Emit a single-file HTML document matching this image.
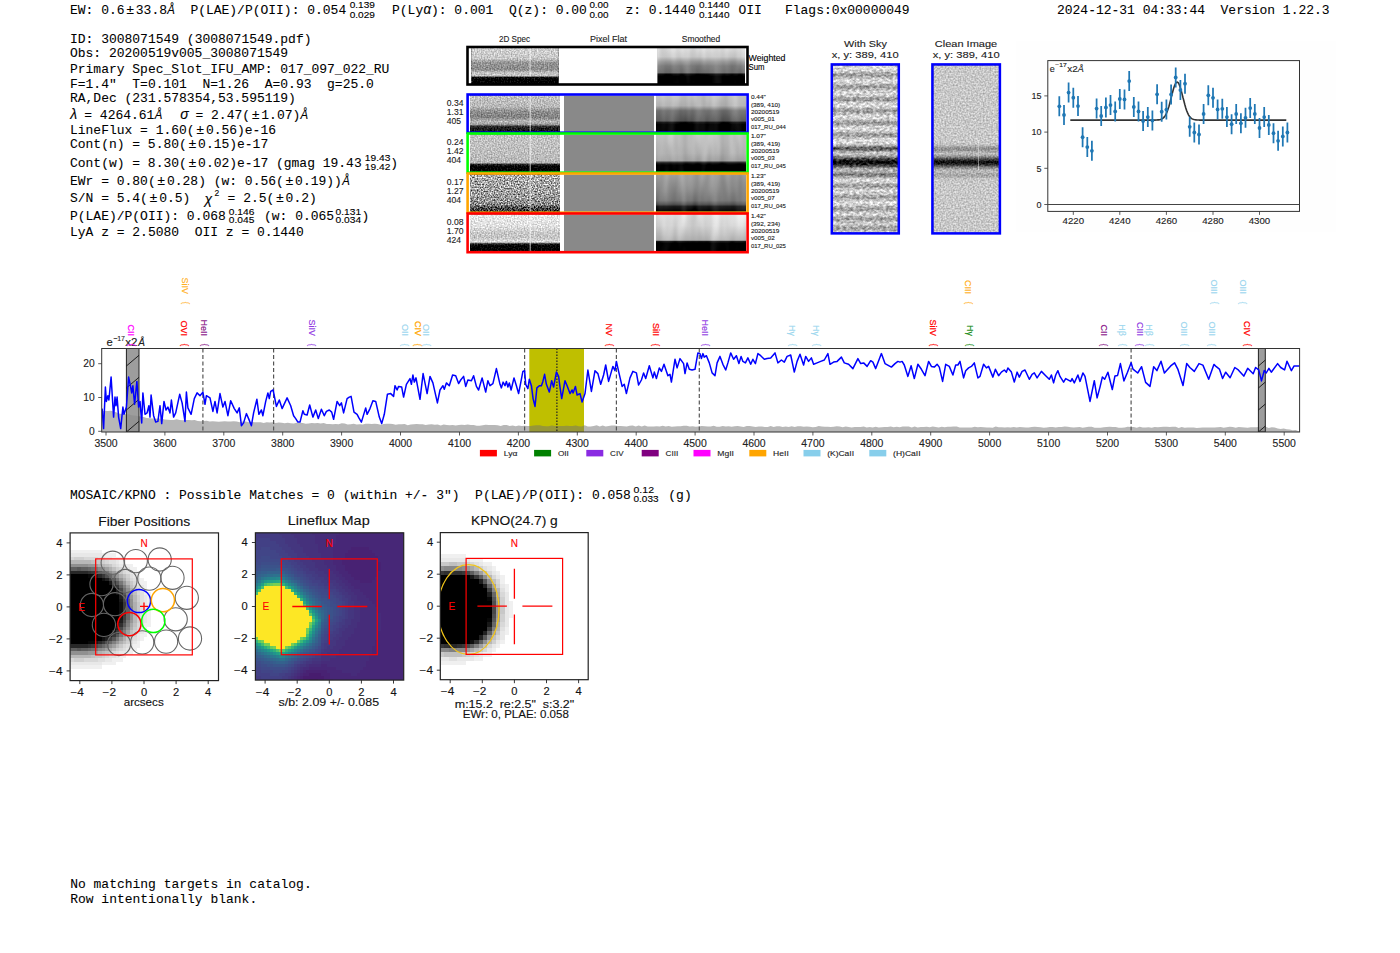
<!DOCTYPE html>
<html><head><meta charset="utf-8"><title>report</title>
<style>
html,body{margin:0;padding:0;background:#fff;width:1400px;height:953px;overflow:hidden}
svg{display:block}
.m{font-family:"Liberation Mono",monospace;white-space:pre}
.r{font-family:"Liberation Serif",serif;white-space:pre}
.s{font-family:"Liberation Sans",sans-serif;white-space:pre}
</style></head><body>
<svg xml:space="preserve" width="1400" height="953" viewBox="0 0 1400 953">
<defs><filter id="nzA" x="0" y="0" width="1" height="1" color-interpolation-filters="sRGB"><feTurbulence type="fractalNoise" baseFrequency="0.7" numOctaves="1" seed="3" result="t"/><feColorMatrix in="t" type="matrix" values="1 0 0 0 0 1 0 0 0 0 1 0 0 0 0 0 0 0 0 1" result="g"/><feComposite in="SourceGraphic" in2="g" operator="arithmetic" k1="0" k2="1" k3="0.600" k4="-0.300"/></filter>
<filter id="nzB" x="0" y="0" width="1" height="1" color-interpolation-filters="sRGB"><feTurbulence type="fractalNoise" baseFrequency="0.7" numOctaves="1" seed="7" result="t"/><feColorMatrix in="t" type="matrix" values="1 0 0 0 0 1 0 0 0 0 1 0 0 0 0 0 0 0 0 1" result="g"/><feComposite in="SourceGraphic" in2="g" operator="arithmetic" k1="0" k2="1" k3="1.700" k4="-0.850"/></filter>
<filter id="nzS" x="0" y="0" width="1" height="1" color-interpolation-filters="sRGB"><feTurbulence type="fractalNoise" baseFrequency="0.1 0.02" numOctaves="2" seed="11" result="t"/><feColorMatrix in="t" type="matrix" values="1 0 0 0 0 1 0 0 0 0 1 0 0 0 0 0 0 0 0 1" result="g"/><feComposite in="SourceGraphic" in2="g" operator="arithmetic" k1="0" k2="1" k3="0.220" k4="-0.110"/></filter>
<filter id="nzC" x="0" y="0" width="1" height="1" color-interpolation-filters="sRGB"><feTurbulence type="fractalNoise" baseFrequency="0.6" numOctaves="1" seed="5" result="t"/><feColorMatrix in="t" type="matrix" values="1 0 0 0 0 1 0 0 0 0 1 0 0 0 0 0 0 0 0 1" result="g"/><feComposite in="SourceGraphic" in2="g" operator="arithmetic" k1="0" k2="1" k3="0.500" k4="-0.250"/></filter>
<filter id="nzK" x="0" y="0" width="1" height="1" color-interpolation-filters="sRGB"><feTurbulence type="fractalNoise" baseFrequency="0.3 0.5" numOctaves="2" seed="9" result="t"/><feColorMatrix in="t" type="matrix" values="1 0 0 0 0 1 0 0 0 0 1 0 0 0 0 0 0 0 0 1" result="g"/><feComposite in="SourceGraphic" in2="g" operator="arithmetic" k1="0" k2="1" k3="0.700" k4="-0.350"/></filter>
<linearGradient id="g1" x1="0" y1="0" x2="0" y2="1"><stop offset="0.000" stop-color="#d2d2d2"/><stop offset="0.300" stop-color="#c8c8c8"/><stop offset="0.400" stop-color="#969696"/><stop offset="0.600" stop-color="#8c8c8c"/><stop offset="0.680" stop-color="#c3c3c3"/><stop offset="0.770" stop-color="#c8c8c8"/><stop offset="0.800" stop-color="#141414"/><stop offset="0.860" stop-color="#000000"/><stop offset="1.000" stop-color="#000000"/></linearGradient>
<linearGradient id="g2" x1="0" y1="0" x2="0" y2="1"><stop offset="0.000" stop-color="#dcdcdc"/><stop offset="0.250" stop-color="#cdcdcd"/><stop offset="0.380" stop-color="#a0a0a0"/><stop offset="0.500" stop-color="#828282"/><stop offset="0.680" stop-color="#737373"/><stop offset="0.720" stop-color="#141414"/><stop offset="0.780" stop-color="#000000"/><stop offset="1.000" stop-color="#000000"/></linearGradient>
<linearGradient id="g3" x1="0" y1="0" x2="0" y2="1"><stop offset="0.000" stop-color="#c3c3c3"/><stop offset="0.300" stop-color="#b9b9b9"/><stop offset="0.450" stop-color="#8c8c8c"/><stop offset="0.600" stop-color="#828282"/><stop offset="0.720" stop-color="#b9b9b9"/><stop offset="0.800" stop-color="#969696"/><stop offset="0.860" stop-color="#232323"/><stop offset="1.000" stop-color="#141414"/></linearGradient>
<linearGradient id="g4" x1="0" y1="0" x2="0" y2="1"><stop offset="0.000" stop-color="#c3c3c3"/><stop offset="0.280" stop-color="#b4b4b4"/><stop offset="0.420" stop-color="#737373"/><stop offset="0.600" stop-color="#646464"/><stop offset="0.700" stop-color="#5a5a5a"/><stop offset="0.740" stop-color="#141414"/><stop offset="0.800" stop-color="#000000"/><stop offset="1.000" stop-color="#000000"/></linearGradient>
<linearGradient id="g5" x1="0" y1="0" x2="0" y2="1"><stop offset="0.000" stop-color="#c3c3c3"/><stop offset="0.500" stop-color="#bebebe"/><stop offset="0.760" stop-color="#b9b9b9"/><stop offset="0.800" stop-color="#282828"/><stop offset="0.860" stop-color="#000000"/><stop offset="1.000" stop-color="#000000"/></linearGradient>
<linearGradient id="g6" x1="0" y1="0" x2="0" y2="1"><stop offset="0.000" stop-color="#bebebe"/><stop offset="0.500" stop-color="#b4b4b4"/><stop offset="0.700" stop-color="#a5a5a5"/><stop offset="0.760" stop-color="#1e1e1e"/><stop offset="0.820" stop-color="#000000"/><stop offset="1.000" stop-color="#000000"/></linearGradient>
<linearGradient id="g7" x1="0" y1="0" x2="0" y2="1"><stop offset="0.000" stop-color="#acacac"/><stop offset="0.500" stop-color="#a0a0a0"/><stop offset="0.800" stop-color="#8c8c8c"/><stop offset="0.880" stop-color="#505050"/><stop offset="1.000" stop-color="#2d2d2d"/></linearGradient>
<linearGradient id="g8" x1="0" y1="0" x2="0" y2="1"><stop offset="0.000" stop-color="#a0a0a0"/><stop offset="0.400" stop-color="#8c8c8c"/><stop offset="0.700" stop-color="#787878"/><stop offset="0.800" stop-color="#555555"/><stop offset="0.860" stop-color="#1e1e1e"/><stop offset="1.000" stop-color="#050505"/></linearGradient>
<linearGradient id="g9" x1="0" y1="0" x2="0" y2="1"><stop offset="0.000" stop-color="#e8e8e8"/><stop offset="0.300" stop-color="#e1e1e1"/><stop offset="0.500" stop-color="#c8c8c8"/><stop offset="0.620" stop-color="#c3c3c3"/><stop offset="0.750" stop-color="#e1e1e1"/><stop offset="0.800" stop-color="#1e1e1e"/><stop offset="0.860" stop-color="#000000"/><stop offset="1.000" stop-color="#000000"/></linearGradient>
<linearGradient id="g10" x1="0" y1="0" x2="0" y2="1"><stop offset="0.000" stop-color="#e1e1e1"/><stop offset="0.300" stop-color="#d7d7d7"/><stop offset="0.550" stop-color="#c3c3c3"/><stop offset="0.700" stop-color="#b4b4b4"/><stop offset="0.730" stop-color="#1e1e1e"/><stop offset="0.780" stop-color="#000000"/><stop offset="1.000" stop-color="#000000"/></linearGradient>
<linearGradient id="g11" x1="0" y1="0" x2="0" y2="1"><stop offset="0.000" stop-color="#dcdcdc"/><stop offset="0.008" stop-color="#dcdcdc"/><stop offset="0.017" stop-color="#dcdcdc"/><stop offset="0.025" stop-color="#d9d9d9"/><stop offset="0.033" stop-color="#d0d0d0"/><stop offset="0.042" stop-color="#bababa"/><stop offset="0.050" stop-color="#a0a0a0"/><stop offset="0.058" stop-color="#969696"/><stop offset="0.067" stop-color="#a8a8a8"/><stop offset="0.075" stop-color="#c2c2c2"/><stop offset="0.083" stop-color="#d4d4d4"/><stop offset="0.092" stop-color="#d9d9d9"/><stop offset="0.100" stop-color="#d7d7d7"/><stop offset="0.108" stop-color="#c9c9c9"/><stop offset="0.117" stop-color="#b0b0b0"/><stop offset="0.125" stop-color="#999999"/><stop offset="0.133" stop-color="#9a9a9a"/><stop offset="0.142" stop-color="#b1b1b1"/><stop offset="0.150" stop-color="#cacaca"/><stop offset="0.158" stop-color="#d7d7d7"/><stop offset="0.167" stop-color="#d9d9d9"/><stop offset="0.175" stop-color="#d3d3d3"/><stop offset="0.183" stop-color="#c1c1c1"/><stop offset="0.192" stop-color="#a6a6a6"/><stop offset="0.200" stop-color="#969696"/><stop offset="0.208" stop-color="#a1a1a1"/><stop offset="0.217" stop-color="#bbbbbb"/><stop offset="0.225" stop-color="#d0d0d0"/><stop offset="0.233" stop-color="#d9d9d9"/><stop offset="0.242" stop-color="#d8d8d8"/><stop offset="0.250" stop-color="#cecece"/><stop offset="0.258" stop-color="#b8b8b8"/><stop offset="0.267" stop-color="#9e9e9e"/><stop offset="0.275" stop-color="#979797"/><stop offset="0.283" stop-color="#aaaaaa"/><stop offset="0.292" stop-color="#c4c4c4"/><stop offset="0.300" stop-color="#d5d5d5"/><stop offset="0.308" stop-color="#d9d9d9"/><stop offset="0.317" stop-color="#d6d6d6"/><stop offset="0.325" stop-color="#c7c7c7"/><stop offset="0.333" stop-color="#aeaeae"/><stop offset="0.342" stop-color="#989898"/><stop offset="0.350" stop-color="#9b9b9b"/><stop offset="0.358" stop-color="#b4b4b4"/><stop offset="0.367" stop-color="#cccccc"/><stop offset="0.375" stop-color="#d7d7d7"/><stop offset="0.383" stop-color="#d9d9d9"/><stop offset="0.392" stop-color="#d2d2d2"/><stop offset="0.400" stop-color="#bfbfbf"/><stop offset="0.408" stop-color="#a4a4a4"/><stop offset="0.417" stop-color="#969696"/><stop offset="0.425" stop-color="#a3a3a3"/><stop offset="0.433" stop-color="#bebebe"/><stop offset="0.442" stop-color="#d1d1d1"/><stop offset="0.450" stop-color="#dadada"/><stop offset="0.458" stop-color="#dbdbdb"/><stop offset="0.467" stop-color="#d8d8d8"/><stop offset="0.475" stop-color="#c8c8c8"/><stop offset="0.483" stop-color="#9e9e9e"/><stop offset="0.492" stop-color="#656565"/><stop offset="0.500" stop-color="#515151"/><stop offset="0.508" stop-color="#787878"/><stop offset="0.517" stop-color="#adadad"/><stop offset="0.525" stop-color="#c5c5c5"/><stop offset="0.533" stop-color="#bfbfbf"/><stop offset="0.542" stop-color="#a7a7a7"/><stop offset="0.550" stop-color="#818181"/><stop offset="0.558" stop-color="#545454"/><stop offset="0.567" stop-color="#292929"/><stop offset="0.575" stop-color="#0b0b0b"/><stop offset="0.583" stop-color="#060606"/><stop offset="0.592" stop-color="#1c1c1c"/><stop offset="0.600" stop-color="#434343"/><stop offset="0.608" stop-color="#727272"/><stop offset="0.617" stop-color="#9a9a9a"/><stop offset="0.625" stop-color="#b3b3b3"/><stop offset="0.633" stop-color="#b4b4b4"/><stop offset="0.642" stop-color="#9d9d9d"/><stop offset="0.650" stop-color="#828282"/><stop offset="0.658" stop-color="#818181"/><stop offset="0.667" stop-color="#9c9c9c"/><stop offset="0.675" stop-color="#bebebe"/><stop offset="0.683" stop-color="#d2d2d2"/><stop offset="0.692" stop-color="#d7d7d7"/><stop offset="0.700" stop-color="#cfcfcf"/><stop offset="0.708" stop-color="#bababa"/><stop offset="0.717" stop-color="#a2a2a2"/><stop offset="0.725" stop-color="#9c9c9c"/><stop offset="0.733" stop-color="#aeaeae"/><stop offset="0.742" stop-color="#c6c6c6"/><stop offset="0.750" stop-color="#d5d5d5"/><stop offset="0.758" stop-color="#d7d7d7"/><stop offset="0.767" stop-color="#cecece"/><stop offset="0.775" stop-color="#b8b8b8"/><stop offset="0.783" stop-color="#a1a1a1"/><stop offset="0.792" stop-color="#9d9d9d"/><stop offset="0.800" stop-color="#b0b0b0"/><stop offset="0.808" stop-color="#c8c8c8"/><stop offset="0.817" stop-color="#d6d6d6"/><stop offset="0.825" stop-color="#dadada"/><stop offset="0.833" stop-color="#d6d6d6"/><stop offset="0.842" stop-color="#c7c7c7"/><stop offset="0.850" stop-color="#afafaf"/><stop offset="0.858" stop-color="#9c9c9c"/><stop offset="0.867" stop-color="#a1a1a1"/><stop offset="0.875" stop-color="#b9b9b9"/><stop offset="0.883" stop-color="#cecece"/><stop offset="0.892" stop-color="#d4d4d4"/><stop offset="0.900" stop-color="#cbcbcb"/><stop offset="0.908" stop-color="#b4b4b4"/><stop offset="0.917" stop-color="#9e9e9e"/><stop offset="0.925" stop-color="#9e9e9e"/><stop offset="0.933" stop-color="#b4b4b4"/><stop offset="0.942" stop-color="#c9c9c9"/><stop offset="0.950" stop-color="#cecece"/><stop offset="0.958" stop-color="#bfbfbf"/><stop offset="0.967" stop-color="#a7a7a7"/><stop offset="0.975" stop-color="#9b9b9b"/><stop offset="0.983" stop-color="#a8a8a8"/><stop offset="0.992" stop-color="#c1c1c1"/><stop offset="1.000" stop-color="#d3d3d3"/></linearGradient>
<linearGradient id="g12" x1="0" y1="0" x2="0" y2="1"><stop offset="0.000" stop-color="#c8c8c8"/><stop offset="0.008" stop-color="#c8c8c8"/><stop offset="0.017" stop-color="#c8c8c8"/><stop offset="0.025" stop-color="#c8c8c8"/><stop offset="0.033" stop-color="#c8c8c8"/><stop offset="0.042" stop-color="#c8c8c8"/><stop offset="0.050" stop-color="#c8c8c8"/><stop offset="0.058" stop-color="#c8c8c8"/><stop offset="0.067" stop-color="#c8c8c8"/><stop offset="0.075" stop-color="#c8c8c8"/><stop offset="0.083" stop-color="#c8c8c8"/><stop offset="0.092" stop-color="#c8c8c8"/><stop offset="0.100" stop-color="#c8c8c8"/><stop offset="0.108" stop-color="#c8c8c8"/><stop offset="0.117" stop-color="#c8c8c8"/><stop offset="0.125" stop-color="#c8c8c8"/><stop offset="0.133" stop-color="#c8c8c8"/><stop offset="0.142" stop-color="#c8c8c8"/><stop offset="0.150" stop-color="#c8c8c8"/><stop offset="0.158" stop-color="#c8c8c8"/><stop offset="0.167" stop-color="#c8c8c8"/><stop offset="0.175" stop-color="#c8c8c8"/><stop offset="0.183" stop-color="#c8c8c8"/><stop offset="0.192" stop-color="#c8c8c8"/><stop offset="0.200" stop-color="#c8c8c8"/><stop offset="0.208" stop-color="#c8c8c8"/><stop offset="0.217" stop-color="#c8c8c8"/><stop offset="0.225" stop-color="#c8c8c8"/><stop offset="0.233" stop-color="#c8c8c8"/><stop offset="0.242" stop-color="#c8c8c8"/><stop offset="0.250" stop-color="#c8c8c8"/><stop offset="0.258" stop-color="#c8c8c8"/><stop offset="0.267" stop-color="#c8c8c8"/><stop offset="0.275" stop-color="#c8c8c8"/><stop offset="0.283" stop-color="#c8c8c8"/><stop offset="0.292" stop-color="#c8c8c8"/><stop offset="0.300" stop-color="#c8c8c8"/><stop offset="0.308" stop-color="#c8c8c8"/><stop offset="0.317" stop-color="#c8c8c8"/><stop offset="0.325" stop-color="#c8c8c8"/><stop offset="0.333" stop-color="#c8c8c8"/><stop offset="0.342" stop-color="#c8c8c8"/><stop offset="0.350" stop-color="#c8c8c8"/><stop offset="0.358" stop-color="#c8c8c8"/><stop offset="0.367" stop-color="#c8c8c8"/><stop offset="0.375" stop-color="#c8c8c8"/><stop offset="0.383" stop-color="#c8c8c8"/><stop offset="0.392" stop-color="#c8c8c8"/><stop offset="0.400" stop-color="#c8c8c8"/><stop offset="0.408" stop-color="#c8c8c8"/><stop offset="0.417" stop-color="#c8c8c8"/><stop offset="0.425" stop-color="#c8c8c8"/><stop offset="0.433" stop-color="#c8c8c8"/><stop offset="0.442" stop-color="#c8c8c8"/><stop offset="0.450" stop-color="#c8c8c8"/><stop offset="0.458" stop-color="#c8c8c8"/><stop offset="0.467" stop-color="#c6c6c6"/><stop offset="0.475" stop-color="#c0c0c0"/><stop offset="0.483" stop-color="#b1b1b1"/><stop offset="0.492" stop-color="#9a9a9a"/><stop offset="0.500" stop-color="#8c8c8c"/><stop offset="0.508" stop-color="#959595"/><stop offset="0.517" stop-color="#aaaaaa"/><stop offset="0.525" stop-color="#b7b7b7"/><stop offset="0.533" stop-color="#b3b3b3"/><stop offset="0.542" stop-color="#a1a1a1"/><stop offset="0.550" stop-color="#828282"/><stop offset="0.558" stop-color="#595959"/><stop offset="0.567" stop-color="#313131"/><stop offset="0.575" stop-color="#151515"/><stop offset="0.583" stop-color="#101010"/><stop offset="0.592" stop-color="#252525"/><stop offset="0.600" stop-color="#4a4a4a"/><stop offset="0.608" stop-color="#747474"/><stop offset="0.617" stop-color="#979797"/><stop offset="0.625" stop-color="#afafaf"/><stop offset="0.633" stop-color="#b9b9b9"/><stop offset="0.642" stop-color="#b5b5b5"/><stop offset="0.650" stop-color="#aaaaaa"/><stop offset="0.658" stop-color="#a5a5a5"/><stop offset="0.667" stop-color="#aeaeae"/><stop offset="0.675" stop-color="#bbbbbb"/><stop offset="0.683" stop-color="#c4c4c4"/><stop offset="0.692" stop-color="#c7c7c7"/><stop offset="0.700" stop-color="#c8c8c8"/><stop offset="0.708" stop-color="#c8c8c8"/><stop offset="0.717" stop-color="#c8c8c8"/><stop offset="0.725" stop-color="#c8c8c8"/><stop offset="0.733" stop-color="#c8c8c8"/><stop offset="0.742" stop-color="#c8c8c8"/><stop offset="0.750" stop-color="#c8c8c8"/><stop offset="0.758" stop-color="#c8c8c8"/><stop offset="0.767" stop-color="#c8c8c8"/><stop offset="0.775" stop-color="#c8c8c8"/><stop offset="0.783" stop-color="#c8c8c8"/><stop offset="0.792" stop-color="#c8c8c8"/><stop offset="0.800" stop-color="#c8c8c8"/><stop offset="0.808" stop-color="#c8c8c8"/><stop offset="0.817" stop-color="#c8c8c8"/><stop offset="0.825" stop-color="#c8c8c8"/><stop offset="0.833" stop-color="#c8c8c8"/><stop offset="0.842" stop-color="#c8c8c8"/><stop offset="0.850" stop-color="#c8c8c8"/><stop offset="0.858" stop-color="#c8c8c8"/><stop offset="0.867" stop-color="#c8c8c8"/><stop offset="0.875" stop-color="#c8c8c8"/><stop offset="0.883" stop-color="#c8c8c8"/><stop offset="0.892" stop-color="#c8c8c8"/><stop offset="0.900" stop-color="#c8c8c8"/><stop offset="0.908" stop-color="#c8c8c8"/><stop offset="0.917" stop-color="#c8c8c8"/><stop offset="0.925" stop-color="#c8c8c8"/><stop offset="0.933" stop-color="#c8c8c8"/><stop offset="0.942" stop-color="#c8c8c8"/><stop offset="0.950" stop-color="#c8c8c8"/><stop offset="0.958" stop-color="#c8c8c8"/><stop offset="0.967" stop-color="#c8c8c8"/><stop offset="0.975" stop-color="#c8c8c8"/><stop offset="0.983" stop-color="#c8c8c8"/><stop offset="0.992" stop-color="#c8c8c8"/><stop offset="1.000" stop-color="#c8c8c8"/></linearGradient>
<clipPath id="spc"><rect x="101.7" y="348.5" width="1197.9" height="83.5"/></clipPath>
<clipPath id="p1"><rect x="70.1" y="532.9" width="148.4" height="147.7"/></clipPath>
<clipPath id="p2"><rect x="255.4" y="532.8" width="148.3" height="147.3"/></clipPath>
<clipPath id="p3"><rect x="440.3" y="532.6" width="147.9" height="147.1"/></clipPath></defs>
<rect width="1400" height="953" fill="#fff"/>
<text class="m" x="70" y="14.3" font-size="13.6" textLength="54.5" lengthAdjust="spacingAndGlyphs" stroke="#000" stroke-width="0.08">EW: 0.6</text>
<text class="s" x="130.2" y="14.3" font-size="13.5" text-anchor="middle" stroke="#000" stroke-width="0.12">±</text>
<text class="m" x="135.8" y="14.3" font-size="13.6" textLength="31.2" lengthAdjust="spacingAndGlyphs" stroke="#000" stroke-width="0.08">33.8</text>
<text class="s" x="167.3" y="14.3" font-size="13.5" textLength="7.6" lengthAdjust="spacingAndGlyphs" stroke="#000" stroke-width="0.12" font-style="italic">Å</text>
<text class="m" x="174.8" y="14.3" font-size="13.6" textLength="171.4" lengthAdjust="spacingAndGlyphs" stroke="#000" stroke-width="0.08">  P(LAE)/P(OII): 0.054</text>
<text class="s" x="349.7" y="8.2" font-size="8.8" textLength="25.2" lengthAdjust="spacingAndGlyphs" stroke="#000" stroke-width="0.12">0.139</text>
<text class="s" x="349.7" y="17.6" font-size="8.8" textLength="25.2" lengthAdjust="spacingAndGlyphs" stroke="#000" stroke-width="0.12">0.029</text>
<text class="m" x="392" y="14.3" font-size="13.6" textLength="31.2" lengthAdjust="spacingAndGlyphs" stroke="#000" stroke-width="0.08">P(Ly</text>
<text class="s" x="423.5" y="14.3" font-size="14" textLength="7.6" lengthAdjust="spacingAndGlyphs" stroke="#000" stroke-width="0.12" font-style="italic">α</text>
<text class="m" x="431" y="14.3" font-size="13.6" textLength="62.3" lengthAdjust="spacingAndGlyphs" stroke="#000" stroke-width="0.08">): 0.001</text>
<text class="m" x="509" y="14.3" font-size="13.6" textLength="77.9" lengthAdjust="spacingAndGlyphs" stroke="#000" stroke-width="0.08">Q(z): 0.00</text>
<text class="s" x="589.4" y="8.2" font-size="8.8" textLength="19.2" lengthAdjust="spacingAndGlyphs" stroke="#000" stroke-width="0.12">0.00</text>
<text class="s" x="589.4" y="17.6" font-size="8.8" textLength="19.2" lengthAdjust="spacingAndGlyphs" stroke="#000" stroke-width="0.12">0.00</text>
<text class="m" x="625.4" y="14.3" font-size="13.6" textLength="70.1" lengthAdjust="spacingAndGlyphs" stroke="#000" stroke-width="0.08">z: 0.1440</text>
<text class="s" x="698.9" y="8.2" font-size="8.8" textLength="30.6" lengthAdjust="spacingAndGlyphs" stroke="#000" stroke-width="0.12">0.1440</text>
<text class="s" x="698.9" y="17.6" font-size="8.8" textLength="30.6" lengthAdjust="spacingAndGlyphs" stroke="#000" stroke-width="0.12">0.1440</text>
<text class="m" x="738.5" y="14.3" font-size="13.6" textLength="23.4" lengthAdjust="spacingAndGlyphs" stroke="#000" stroke-width="0.08">OII</text>
<text class="m" x="785" y="14.3" font-size="13.6" textLength="124.6" lengthAdjust="spacingAndGlyphs" stroke="#000" stroke-width="0.08">Flags:0x00000049</text>
<text class="m" x="1057" y="14.3" font-size="13.6" textLength="272.6" lengthAdjust="spacingAndGlyphs" stroke="#000" stroke-width="0.08">2024-12-31 04:33:44  Version 1.22.3</text>
<text class="m" x="70" y="42.9" font-size="13.6" textLength="241.5" lengthAdjust="spacingAndGlyphs" stroke="#000" stroke-width="0.08">ID: 3008071549 (3008071549.pdf)</text>
<text class="m" x="70" y="57.2" font-size="13.6" textLength="218.1" lengthAdjust="spacingAndGlyphs" stroke="#000" stroke-width="0.08">Obs: 20200519v005_3008071549</text>
<text class="m" x="70" y="72.6" font-size="13.6" textLength="319.4" lengthAdjust="spacingAndGlyphs" stroke="#000" stroke-width="0.08">Primary Spec_Slot_IFU_AMP: 017_097_022_RU</text>
<text class="m" x="70" y="87.6" font-size="13.6" textLength="303.8" lengthAdjust="spacingAndGlyphs" stroke="#000" stroke-width="0.08">F=1.4"  T=0.101  N=1.26  A=0.93  g=25.0</text>
<text class="m" x="70" y="102.4" font-size="13.6" textLength="225.9" lengthAdjust="spacingAndGlyphs" stroke="#000" stroke-width="0.08">RA,Dec (231.578354,53.595119)</text>
<text class="m" x="70" y="133.5" font-size="13.6" textLength="124.6" lengthAdjust="spacingAndGlyphs" stroke="#000" stroke-width="0.08">LineFlux = 1.60(</text>
<text class="s" x="200.3" y="133.5" font-size="13.5" text-anchor="middle" stroke="#000" stroke-width="0.12">±</text>
<text class="m" x="205.9" y="133.5" font-size="13.6" textLength="70.1" lengthAdjust="spacingAndGlyphs" stroke="#000" stroke-width="0.08">0.56)e-16</text>
<text class="m" x="70" y="148.1" font-size="13.6" textLength="116.8" lengthAdjust="spacingAndGlyphs" stroke="#000" stroke-width="0.08">Cont(n) = 5.80(</text>
<text class="s" x="192.5" y="148.1" font-size="13.5" text-anchor="middle" stroke="#000" stroke-width="0.12">±</text>
<text class="m" x="198.1" y="148.1" font-size="13.6" textLength="70.1" lengthAdjust="spacingAndGlyphs" stroke="#000" stroke-width="0.08">0.15)e-17</text>
<text class="m" x="70" y="184.5" font-size="13.6" textLength="85.7" lengthAdjust="spacingAndGlyphs" stroke="#000" stroke-width="0.08">EWr = 0.80(</text>
<text class="s" x="161.3" y="184.5" font-size="13.5" text-anchor="middle" stroke="#000" stroke-width="0.12">±</text>
<text class="m" x="167" y="184.5" font-size="13.6" textLength="116.8" lengthAdjust="spacingAndGlyphs" stroke="#000" stroke-width="0.08">0.28) (w: 0.56(</text>
<text class="s" x="289.5" y="184.5" font-size="13.5" text-anchor="middle" stroke="#000" stroke-width="0.12">±</text>
<text class="m" x="295.1" y="184.5" font-size="13.6" textLength="46.7" lengthAdjust="spacingAndGlyphs" stroke="#000" stroke-width="0.08">0.19))</text>
<text class="s" x="342.2" y="184.5" font-size="13.5" textLength="7.6" lengthAdjust="spacingAndGlyphs" stroke="#000" stroke-width="0.12" font-style="italic">Å</text>
<text class="m" x="70" y="236" font-size="13.6" textLength="233.7" lengthAdjust="spacingAndGlyphs" stroke="#000" stroke-width="0.08">LyA z = 2.5080  OII z = 0.1440</text>
<text class="s" x="70.2" y="118.8" font-size="14" stroke="#000" stroke-width="0.12" font-style="italic">λ</text>
<text class="m" x="84.3" y="118.8" font-size="13.6" textLength="70.1" lengthAdjust="spacingAndGlyphs" stroke="#000" stroke-width="0.08">= 4264.61</text>
<text class="s" x="154.7" y="118.8" font-size="13.5" textLength="7.6" lengthAdjust="spacingAndGlyphs" stroke="#000" stroke-width="0.12" font-style="italic">Å</text>
<text class="s" x="180.2" y="118.8" font-size="14" stroke="#000" stroke-width="0.12" font-style="italic">σ</text>
<text class="m" x="195.5" y="118.8" font-size="13.6" textLength="54.5" lengthAdjust="spacingAndGlyphs" stroke="#000" stroke-width="0.08">= 2.47(</text>
<text class="s" x="255.7" y="118.8" font-size="13.5" text-anchor="middle" stroke="#000" stroke-width="0.12">±</text>
<text class="m" x="261.3" y="118.8" font-size="13.6" textLength="39" lengthAdjust="spacingAndGlyphs" stroke="#000" stroke-width="0.08">1.07)</text>
<text class="s" x="300.6" y="118.8" font-size="13.5" textLength="7.6" lengthAdjust="spacingAndGlyphs" stroke="#000" stroke-width="0.12" font-style="italic">Å</text>
<text class="m" x="70" y="166.8" font-size="13.6" textLength="116.8" lengthAdjust="spacingAndGlyphs" stroke="#000" stroke-width="0.08">Cont(w) = 8.30(</text>
<text class="s" x="192.5" y="166.8" font-size="13.5" text-anchor="middle" stroke="#000" stroke-width="0.12">±</text>
<text class="m" x="198.1" y="166.8" font-size="13.6" textLength="163.6" lengthAdjust="spacingAndGlyphs" stroke="#000" stroke-width="0.08">0.02)e-17 (gmag 19.43</text>
<text class="s" x="364.8" y="160.5" font-size="8.8" textLength="25.5" lengthAdjust="spacingAndGlyphs" stroke="#000" stroke-width="0.12">19.43</text>
<text class="s" x="364.8" y="169.6" font-size="8.8" textLength="25.5" lengthAdjust="spacingAndGlyphs" stroke="#000" stroke-width="0.12">19.42</text>
<text class="m" x="390.3" y="166.8" font-size="13.6" textLength="7.8" lengthAdjust="spacingAndGlyphs" stroke="#000" stroke-width="0.08">)</text>
<text class="m" x="70" y="202" font-size="13.6" textLength="77.9" lengthAdjust="spacingAndGlyphs" stroke="#000" stroke-width="0.08">S/N = 5.4(</text>
<text class="s" x="153.5" y="202" font-size="13.5" text-anchor="middle" stroke="#000" stroke-width="0.12">±</text>
<text class="m" x="159.2" y="202" font-size="13.6" textLength="31.2" lengthAdjust="spacingAndGlyphs" stroke="#000" stroke-width="0.08">0.5)</text>
<text class="s" x="204.5" y="203.5" font-size="14" stroke="#000" stroke-width="0.12" font-style="italic">χ</text>
<text class="s" x="214.6" y="196" font-size="8.5" stroke="#000" stroke-width="0.12">2</text>
<text class="m" x="227.6" y="202" font-size="13.6" textLength="46.7" lengthAdjust="spacingAndGlyphs" stroke="#000" stroke-width="0.08">= 2.5(</text>
<text class="s" x="280" y="202" font-size="13.5" text-anchor="middle" stroke="#000" stroke-width="0.12">±</text>
<text class="m" x="285.6" y="202" font-size="13.6" textLength="31.2" lengthAdjust="spacingAndGlyphs" stroke="#000" stroke-width="0.08">0.2)</text>
<text class="m" x="70" y="220.2" font-size="13.6" textLength="155.8" lengthAdjust="spacingAndGlyphs" stroke="#000" stroke-width="0.08">P(LAE)/P(OII): 0.068</text>
<text class="s" x="228.8" y="214.9" font-size="8.8" textLength="25.5" lengthAdjust="spacingAndGlyphs" stroke="#000" stroke-width="0.12">0.146</text>
<text class="s" x="228.8" y="223" font-size="8.8" textLength="25.5" lengthAdjust="spacingAndGlyphs" stroke="#000" stroke-width="0.12">0.045</text>
<text class="m" x="264" y="220.2" font-size="13.6" textLength="70.1" lengthAdjust="spacingAndGlyphs" stroke="#000" stroke-width="0.08">(w: 0.065</text>
<text class="s" x="335.6" y="214.9" font-size="8.8" textLength="25.5" lengthAdjust="spacingAndGlyphs" stroke="#000" stroke-width="0.12">0.131</text>
<text class="s" x="335.6" y="223" font-size="8.8" textLength="25.5" lengthAdjust="spacingAndGlyphs" stroke="#000" stroke-width="0.12">0.034</text>
<text class="m" x="361.5" y="220.2" font-size="13.6" textLength="7.8" lengthAdjust="spacingAndGlyphs" stroke="#000" stroke-width="0.08">)</text>
<text class="s" x="514.5" y="42.2" font-size="8.6" text-anchor="middle" fill="#222" textLength="31" lengthAdjust="spacingAndGlyphs" stroke="#222" stroke-width="0.12">2D Spec</text>
<text class="s" x="608.5" y="42.2" font-size="8.6" text-anchor="middle" fill="#222" textLength="37" lengthAdjust="spacingAndGlyphs" stroke="#222" stroke-width="0.12">Pixel Flat</text>
<text class="s" x="701" y="42.2" font-size="8.6" text-anchor="middle" fill="#222" textLength="38.5" lengthAdjust="spacingAndGlyphs" stroke="#222" stroke-width="0.12">Smoothed</text>
<rect x="471.5" y="47.5" width="87" height="37" fill="url(#g1)" filter="url(#nzA)"/>
<rect x="529.5" y="47.5" width="1.2" height="29" fill="#fff" opacity="0.6"/>
<rect x="657.5" y="47.5" width="87.5" height="37" fill="url(#g2)" filter="url(#nzS)"/>
<rect x="467.5" y="47" width="280" height="37.5" fill="none" stroke="#000" stroke-width="2.6"/>
<text class="s" x="748.5" y="60.8" font-size="8.6" textLength="37" lengthAdjust="spacingAndGlyphs" stroke="#000" stroke-width="0.12">Weighted</text>
<text class="s" x="748.5" y="69.6" font-size="8.6" textLength="16" lengthAdjust="spacingAndGlyphs" stroke="#000" stroke-width="0.12">Sum</text>
<rect x="470" y="95.5" width="90" height="36.3" fill="url(#g3)" filter="url(#nzA)"/>
<rect x="529.6" y="95.5" width="1.3" height="36.3" fill="#fff" opacity="0.55"/>
<rect x="564" y="95.5" width="90" height="36.3" fill="#898989"/>
<rect x="656" y="95.5" width="90" height="36.3" fill="url(#g4)" filter="url(#nzS)"/>
<rect x="467.6" y="94.5" width="280" height="38.2" fill="none" stroke="#0000ff" stroke-width="2.6"/>
<text class="s" x="446.8" y="105.5" font-size="8.2" fill="#222" textLength="16.7" lengthAdjust="spacingAndGlyphs" stroke="#222" stroke-width="0.12">0.34</text>
<text class="s" x="446.8" y="114.5" font-size="8.2" fill="#222" textLength="16.7" lengthAdjust="spacingAndGlyphs" stroke="#222" stroke-width="0.12">1.31</text>
<text class="s" x="446.8" y="123.5" font-size="8.2" fill="#222" textLength="14.3" lengthAdjust="spacingAndGlyphs" stroke="#222" stroke-width="0.12">405</text>
<text class="s" x="750.9" y="99.2" font-size="5.6" fill="#222" textLength="15" lengthAdjust="spacingAndGlyphs" stroke="#222" stroke-width="0.12">0.44"</text>
<text class="s" x="750.9" y="106.5" font-size="5.6" fill="#222" textLength="29.3" lengthAdjust="spacingAndGlyphs" stroke="#222" stroke-width="0.12">(389, 410)</text>
<text class="s" x="750.9" y="113.9" font-size="5.6" fill="#222" textLength="28.5" lengthAdjust="spacingAndGlyphs" stroke="#222" stroke-width="0.12">20200519</text>
<text class="s" x="750.9" y="121.2" font-size="5.6" fill="#222" textLength="23.9" lengthAdjust="spacingAndGlyphs" stroke="#222" stroke-width="0.12">v005_01</text>
<text class="s" x="750.9" y="128.6" font-size="5.6" fill="#222" textLength="35" lengthAdjust="spacingAndGlyphs" stroke="#222" stroke-width="0.12">017_RU_044</text>
<rect x="470" y="134.5" width="90" height="37.3" fill="url(#g5)" filter="url(#nzA)"/>
<rect x="529.6" y="134.5" width="1.3" height="37.3" fill="#fff" opacity="0.55"/>
<rect x="564" y="134.5" width="90" height="37.3" fill="#898989"/>
<rect x="656" y="134.5" width="90" height="37.3" fill="url(#g6)" filter="url(#nzS)"/>
<rect x="467.6" y="133.5" width="280" height="39.2" fill="none" stroke="#00ff00" stroke-width="2.6"/>
<text class="s" x="446.8" y="144.5" font-size="8.2" fill="#222" textLength="16.7" lengthAdjust="spacingAndGlyphs" stroke="#222" stroke-width="0.12">0.24</text>
<text class="s" x="446.8" y="153.5" font-size="8.2" fill="#222" textLength="16.7" lengthAdjust="spacingAndGlyphs" stroke="#222" stroke-width="0.12">1.42</text>
<text class="s" x="446.8" y="162.5" font-size="8.2" fill="#222" textLength="14.3" lengthAdjust="spacingAndGlyphs" stroke="#222" stroke-width="0.12">404</text>
<text class="s" x="750.9" y="138.2" font-size="5.6" fill="#222" textLength="15" lengthAdjust="spacingAndGlyphs" stroke="#222" stroke-width="0.12">1.07"</text>
<text class="s" x="750.9" y="145.5" font-size="5.6" fill="#222" textLength="29.3" lengthAdjust="spacingAndGlyphs" stroke="#222" stroke-width="0.12">(389, 419)</text>
<text class="s" x="750.9" y="152.9" font-size="5.6" fill="#222" textLength="28.5" lengthAdjust="spacingAndGlyphs" stroke="#222" stroke-width="0.12">20200519</text>
<text class="s" x="750.9" y="160.2" font-size="5.6" fill="#222" textLength="23.9" lengthAdjust="spacingAndGlyphs" stroke="#222" stroke-width="0.12">v005_03</text>
<text class="s" x="750.9" y="167.6" font-size="5.6" fill="#222" textLength="35" lengthAdjust="spacingAndGlyphs" stroke="#222" stroke-width="0.12">017_RU_045</text>
<rect x="470" y="174.5" width="90" height="37.3" fill="url(#g7)" filter="url(#nzB)"/>
<rect x="529.6" y="174.5" width="1.3" height="37.3" fill="#fff" opacity="0.55"/>
<rect x="564" y="174.5" width="90" height="37.3" fill="#898989"/>
<rect x="656" y="174.5" width="90" height="37.3" fill="url(#g8)" filter="url(#nzS)"/>
<rect x="467.6" y="173.5" width="280" height="39.2" fill="none" stroke="#ffa500" stroke-width="2.6"/>
<text class="s" x="446.8" y="184.5" font-size="8.2" fill="#222" textLength="16.7" lengthAdjust="spacingAndGlyphs" stroke="#222" stroke-width="0.12">0.17</text>
<text class="s" x="446.8" y="193.5" font-size="8.2" fill="#222" textLength="16.7" lengthAdjust="spacingAndGlyphs" stroke="#222" stroke-width="0.12">1.27</text>
<text class="s" x="446.8" y="202.5" font-size="8.2" fill="#222" textLength="14.3" lengthAdjust="spacingAndGlyphs" stroke="#222" stroke-width="0.12">404</text>
<text class="s" x="750.9" y="178.2" font-size="5.6" fill="#222" textLength="15" lengthAdjust="spacingAndGlyphs" stroke="#222" stroke-width="0.12">1.23"</text>
<text class="s" x="750.9" y="185.5" font-size="5.6" fill="#222" textLength="29.3" lengthAdjust="spacingAndGlyphs" stroke="#222" stroke-width="0.12">(389, 419)</text>
<text class="s" x="750.9" y="192.9" font-size="5.6" fill="#222" textLength="28.5" lengthAdjust="spacingAndGlyphs" stroke="#222" stroke-width="0.12">20200519</text>
<text class="s" x="750.9" y="200.2" font-size="5.6" fill="#222" textLength="23.9" lengthAdjust="spacingAndGlyphs" stroke="#222" stroke-width="0.12">v005_07</text>
<text class="s" x="750.9" y="207.6" font-size="5.6" fill="#222" textLength="35" lengthAdjust="spacingAndGlyphs" stroke="#222" stroke-width="0.12">017_RU_045</text>
<rect x="470" y="214.5" width="90" height="36.8" fill="url(#g9)" filter="url(#nzA)"/>
<rect x="529.6" y="214.5" width="1.3" height="36.8" fill="#fff" opacity="0.55"/>
<rect x="564" y="214.5" width="90" height="36.8" fill="#898989"/>
<rect x="656" y="214.5" width="90" height="36.8" fill="url(#g10)" filter="url(#nzS)"/>
<rect x="467.6" y="213.5" width="280" height="38.7" fill="none" stroke="#ff0000" stroke-width="2.6"/>
<text class="s" x="446.8" y="224.5" font-size="8.2" fill="#222" textLength="16.7" lengthAdjust="spacingAndGlyphs" stroke="#222" stroke-width="0.12">0.08</text>
<text class="s" x="446.8" y="233.5" font-size="8.2" fill="#222" textLength="16.7" lengthAdjust="spacingAndGlyphs" stroke="#222" stroke-width="0.12">1.70</text>
<text class="s" x="446.8" y="242.5" font-size="8.2" fill="#222" textLength="14.3" lengthAdjust="spacingAndGlyphs" stroke="#222" stroke-width="0.12">424</text>
<text class="s" x="750.9" y="218.2" font-size="5.6" fill="#222" textLength="15" lengthAdjust="spacingAndGlyphs" stroke="#222" stroke-width="0.12">1.42"</text>
<text class="s" x="750.9" y="225.5" font-size="5.6" fill="#222" textLength="29.3" lengthAdjust="spacingAndGlyphs" stroke="#222" stroke-width="0.12">(392, 234)</text>
<text class="s" x="750.9" y="232.9" font-size="5.6" fill="#222" textLength="28.5" lengthAdjust="spacingAndGlyphs" stroke="#222" stroke-width="0.12">20200519</text>
<text class="s" x="750.9" y="240.2" font-size="5.6" fill="#222" textLength="23.9" lengthAdjust="spacingAndGlyphs" stroke="#222" stroke-width="0.12">v005_02</text>
<text class="s" x="750.9" y="247.6" font-size="5.6" fill="#222" textLength="35" lengthAdjust="spacingAndGlyphs" stroke="#222" stroke-width="0.12">017_RU_025</text>
<text class="s" x="865.5" y="47" font-size="9.6" text-anchor="middle" fill="#222" textLength="42.8" lengthAdjust="spacingAndGlyphs" stroke="#222" stroke-width="0.12">With Sky</text>
<text class="s" x="865.2" y="57.8" font-size="9.6" text-anchor="middle" fill="#222" textLength="67" lengthAdjust="spacingAndGlyphs" stroke="#222" stroke-width="0.12">x, y: 389, 410</text>
<text class="s" x="966" y="47" font-size="9.6" text-anchor="middle" fill="#222" textLength="62.3" lengthAdjust="spacingAndGlyphs" stroke="#222" stroke-width="0.12">Clean Image</text>
<text class="s" x="966.2" y="57.8" font-size="9.6" text-anchor="middle" fill="#222" textLength="67" lengthAdjust="spacingAndGlyphs" stroke="#222" stroke-width="0.12">x, y: 389, 410</text>
<rect x="833" y="65.5" width="65" height="166.7" fill="url(#g11)" filter="url(#nzK)"/>
<rect x="933.5" y="65.5" width="65.5" height="166.7" fill="url(#g12)" filter="url(#nzC)"/>
<rect x="978" y="140" width="0.9" height="30" fill="#fff" opacity="0.5"/>
<rect x="831.8" y="64.4" width="67" height="169" fill="none" stroke="#0000ff" stroke-width="2.5"/>
<rect x="932.4" y="64.4" width="67.5" height="169" fill="none" stroke="#0000ff" stroke-width="2.5"/>
<rect x="1016" y="41" width="320" height="191" fill="#fefefe"/>
<rect x="1047.8" y="60.6" width="251.7" height="150.8" fill="#fff" stroke="#333" stroke-width="1"/>
<line x1="1047.8" y1="204.5" x2="1299.5" y2="204.5" stroke="#444" stroke-width="1"/>
<line x1="1044.3" y1="204.5" x2="1047.8" y2="204.5" stroke="#333" stroke-width="0.8"/>
<text class="s" x="1041.6" y="207.7" font-size="9" text-anchor="end" fill="#222" stroke="#222" stroke-width="0.12">0</text>
<line x1="1044.3" y1="168.3" x2="1047.8" y2="168.3" stroke="#333" stroke-width="0.8"/>
<text class="s" x="1041.6" y="171.5" font-size="9" text-anchor="end" fill="#222" stroke="#222" stroke-width="0.12">5</text>
<line x1="1044.3" y1="132.1" x2="1047.8" y2="132.1" stroke="#333" stroke-width="0.8"/>
<text class="s" x="1041.6" y="135.3" font-size="9" text-anchor="end" fill="#222" stroke="#222" stroke-width="0.12">10</text>
<line x1="1044.3" y1="95.9" x2="1047.8" y2="95.9" stroke="#333" stroke-width="0.8"/>
<text class="s" x="1041.6" y="99.1" font-size="9" text-anchor="end" fill="#222" stroke="#222" stroke-width="0.12">15</text>
<line x1="1073.3" y1="211.4" x2="1073.3" y2="214.9" stroke="#333" stroke-width="0.8"/>
<text class="s" x="1073.3" y="223.8" font-size="9" text-anchor="middle" fill="#222" textLength="21.5" lengthAdjust="spacingAndGlyphs" stroke="#222" stroke-width="0.12">4220</text>
<line x1="1119.8" y1="211.4" x2="1119.8" y2="214.9" stroke="#333" stroke-width="0.8"/>
<text class="s" x="1119.8" y="223.8" font-size="9" text-anchor="middle" fill="#222" textLength="21.5" lengthAdjust="spacingAndGlyphs" stroke="#222" stroke-width="0.12">4240</text>
<line x1="1166.4" y1="211.4" x2="1166.4" y2="214.9" stroke="#333" stroke-width="0.8"/>
<text class="s" x="1166.4" y="223.8" font-size="9" text-anchor="middle" fill="#222" textLength="21.5" lengthAdjust="spacingAndGlyphs" stroke="#222" stroke-width="0.12">4260</text>
<line x1="1213" y1="211.4" x2="1213" y2="214.9" stroke="#333" stroke-width="0.8"/>
<text class="s" x="1213" y="223.8" font-size="9" text-anchor="middle" fill="#222" textLength="21.5" lengthAdjust="spacingAndGlyphs" stroke="#222" stroke-width="0.12">4280</text>
<line x1="1259.5" y1="211.4" x2="1259.5" y2="214.9" stroke="#333" stroke-width="0.8"/>
<text class="s" x="1259.5" y="223.8" font-size="9" text-anchor="middle" fill="#222" textLength="21.5" lengthAdjust="spacingAndGlyphs" stroke="#222" stroke-width="0.12">4300</text>
<text class="s" x="1049.8" y="71.5" font-size="9" fill="#222" stroke="#222" stroke-width="0.12">e</text>
<text class="s" x="1055.3" y="67" font-size="6.2" fill="#222" textLength="11.5" lengthAdjust="spacingAndGlyphs" stroke="#222" stroke-width="0.12">−17</text>
<text class="s" x="1067.3" y="71.5" font-size="9" fill="#222" textLength="10.5" lengthAdjust="spacingAndGlyphs" stroke="#222" stroke-width="0.12">x2</text>
<text class="s" x="1077.8" y="71.5" font-size="9" fill="#222" stroke="#222" stroke-width="0.12" font-style="italic">Å</text>
<polyline points="1070.3,120.1 1071.2,120.1 1072.1,120.1 1073.1,120.1 1074,120.1 1074.9,120.1 1075.9,120.1 1076.8,120.1 1077.7,120.1 1078.7,120.1 1079.6,120.1 1080.5,120.1 1081.4,120.1 1082.4,120.1 1083.3,120.1 1084.2,120.1 1085.2,120.1 1086.1,120.1 1087,120.1 1088,120.1 1088.9,120.1 1089.8,120.1 1090.8,120.1 1091.7,120.1 1092.6,120.1 1093.5,120.1 1094.5,120.1 1095.4,120.1 1096.3,120.1 1097.3,120.1 1098.2,120.1 1099.1,120.1 1100.1,120.1 1101,120.1 1101.9,120.1 1102.9,120.1 1103.8,120.1 1104.7,120.1 1105.7,120.1 1106.6,120.1 1107.5,120.1 1108.4,120.1 1109.4,120.1 1110.3,120.1 1111.2,120.1 1112.2,120.1 1113.1,120.1 1114,120.1 1115,120.1 1115.9,120.1 1116.8,120.1 1117.8,120.1 1118.7,120.1 1119.6,120.1 1120.5,120.1 1121.5,120.1 1122.4,120.1 1123.3,120.1 1124.3,120.1 1125.2,120.1 1126.1,120.1 1127.1,120.1 1128,120.1 1128.9,120.1 1129.9,120.1 1130.8,120.1 1131.7,120.1 1132.7,120.1 1133.6,120.1 1134.5,120.1 1135.4,120.1 1136.4,120.1 1137.3,120.1 1138.2,120.1 1139.2,120.1 1140.1,120.1 1141,120.1 1142,120.1 1142.9,120.1 1143.8,120.1 1144.8,120.1 1145.7,120.1 1146.6,120.1 1147.5,120.1 1148.5,120.1 1149.4,120.1 1150.3,120.1 1151.3,120.1 1152.2,120.1 1153.1,120.1 1154.1,120.1 1155,120.1 1155.9,120 1156.9,120 1157.8,119.9 1158.7,119.9 1159.7,119.7 1160.6,119.5 1161.5,119.1 1162.4,118.6 1163.4,117.9 1164.3,116.9 1165.2,115.6 1166.2,113.9 1167.1,111.7 1168,109.2 1169,106.2 1169.9,102.8 1170.8,99.2 1171.8,95.4 1172.7,91.8 1173.6,88.5 1174.5,85.7 1175.5,83.6 1176.4,82.4 1177.3,82.1 1178.3,82.8 1179.2,84.5 1180.1,87 1181.1,90.1 1182,93.6 1182.9,97.3 1183.9,101 1184.8,104.5 1185.7,107.7 1186.6,110.5 1187.6,112.9 1188.5,114.8 1189.4,116.3 1190.4,117.4 1191.3,118.3 1192.2,118.9 1193.2,119.3 1194.1,119.6 1195,119.8 1196,119.9 1196.9,120 1197.8,120 1198.8,120 1199.7,120.1 1200.6,120.1 1201.5,120.1 1202.5,120.1 1203.4,120.1 1204.3,120.1 1205.3,120.1 1206.2,120.1 1207.1,120.1 1208.1,120.1 1209,120.1 1209.9,120.1 1210.9,120.1 1211.8,120.1 1212.7,120.1 1213.6,120.1 1214.6,120.1 1215.5,120.1 1216.4,120.1 1217.4,120.1 1218.3,120.1 1219.2,120.1 1220.2,120.1 1221.1,120.1 1222,120.1 1223,120.1 1223.9,120.1 1224.8,120.1 1225.8,120.1 1226.7,120.1 1227.6,120.1 1228.5,120.1 1229.5,120.1 1230.4,120.1 1231.3,120.1 1232.3,120.1 1233.2,120.1 1234.1,120.1 1235.1,120.1 1236,120.1 1236.9,120.1 1237.9,120.1 1238.8,120.1 1239.7,120.1 1240.6,120.1 1241.6,120.1 1242.5,120.1 1243.4,120.1 1244.4,120.1 1245.3,120.1 1246.2,120.1 1247.2,120.1 1248.1,120.1 1249,120.1 1250,120.1 1250.9,120.1 1251.8,120.1 1252.8,120.1 1253.7,120.1 1254.6,120.1 1255.5,120.1 1256.5,120.1 1257.4,120.1 1258.3,120.1 1259.3,120.1 1260.2,120.1 1261.1,120.1 1262.1,120.1 1263,120.1 1263.9,120.1 1264.9,120.1 1265.8,120.1 1266.7,120.1 1267.6,120.1 1268.6,120.1 1269.5,120.1 1270.4,120.1 1271.4,120.1 1272.3,120.1 1273.2,120.1 1274.2,120.1 1275.1,120.1 1276,120.1 1277,120.1 1277.9,120.1 1278.8,120.1 1279.7,120.1 1280.7,120.1 1281.6,120.1 1282.5,120.1 1283.5,120.1 1284.4,120.1 1285.3,120.1 1286.3,120.1" fill="none" stroke="#333" stroke-width="1.6"/>
<path d="M1059.3 96.3V116.3M1064 104.9V124.9M1068.6 82.6V102.6M1073.3 87.7V107.7M1078 96.1V116.1M1082.6 127.2V147.2M1087.3 137.1V157.1M1091.9 140.8V160.8M1096.6 98.6V118.6M1101.2 106V126M1105.9 97.4V117.4M1110.5 95.1V115.1M1115.2 101.4V121.4M1119.8 88.9V108.9M1124.5 89.4V109.4M1129.2 71.1V91.1M1133.8 96.9V116.9M1138.5 101.4V121.4M1143.1 111.1V131.1M1147.8 107.1V127.1M1152.4 110.6V130.6M1157.1 84.3V104.3M1161.7 101.7V121.7M1166.4 99.6V119.6M1171.1 84.5V104.5M1175.7 67.4V87.4M1180.4 80.1V100.1M1185 73.7V93.7M1189.7 116.8V136.8M1194.3 122.5V142.5M1199 124.5V144.5M1203.6 103.9V123.9M1208.3 85.3V105.3M1213 87.8V107.8M1217.6 99.4V119.4M1222.3 98.8V118.8M1226.9 107.1V127.1M1231.6 114.2V134.2M1236.2 103.9V123.9M1240.9 113.3V133.3M1245.5 107.8V127.8M1250.2 98.1V118.1M1254.8 103.9V123.9M1259.5 118V138M1264.2 107.1V127.1M1268.8 114.9V134.9M1273.5 123.2V143.2M1278.1 130.8V150.8M1282.8 126.4V146.4M1287.4 122.5V142.5" stroke="#1f77b4" stroke-width="1.75" fill="none"/>
<circle cx="1059.3" cy="106.3" r="1.9" fill="#1f77b4"/>
<circle cx="1064" cy="114.9" r="1.9" fill="#1f77b4"/>
<circle cx="1068.6" cy="92.6" r="1.9" fill="#1f77b4"/>
<circle cx="1073.3" cy="97.7" r="1.9" fill="#1f77b4"/>
<circle cx="1078" cy="106.1" r="1.9" fill="#1f77b4"/>
<circle cx="1082.6" cy="137.2" r="1.9" fill="#1f77b4"/>
<circle cx="1087.3" cy="147.1" r="1.9" fill="#1f77b4"/>
<circle cx="1091.9" cy="150.8" r="1.9" fill="#1f77b4"/>
<circle cx="1096.6" cy="108.6" r="1.9" fill="#1f77b4"/>
<circle cx="1101.2" cy="116" r="1.9" fill="#1f77b4"/>
<circle cx="1105.9" cy="107.4" r="1.9" fill="#1f77b4"/>
<circle cx="1110.5" cy="105.1" r="1.9" fill="#1f77b4"/>
<circle cx="1115.2" cy="111.4" r="1.9" fill="#1f77b4"/>
<circle cx="1119.8" cy="98.9" r="1.9" fill="#1f77b4"/>
<circle cx="1124.5" cy="99.4" r="1.9" fill="#1f77b4"/>
<circle cx="1129.2" cy="81.1" r="1.9" fill="#1f77b4"/>
<circle cx="1133.8" cy="106.9" r="1.9" fill="#1f77b4"/>
<circle cx="1138.5" cy="111.4" r="1.9" fill="#1f77b4"/>
<circle cx="1143.1" cy="121.1" r="1.9" fill="#1f77b4"/>
<circle cx="1147.8" cy="117.1" r="1.9" fill="#1f77b4"/>
<circle cx="1152.4" cy="120.6" r="1.9" fill="#1f77b4"/>
<circle cx="1157.1" cy="94.3" r="1.9" fill="#1f77b4"/>
<circle cx="1161.7" cy="111.7" r="1.9" fill="#1f77b4"/>
<circle cx="1166.4" cy="109.6" r="1.9" fill="#1f77b4"/>
<circle cx="1171.1" cy="94.5" r="1.9" fill="#1f77b4"/>
<circle cx="1175.7" cy="77.4" r="1.9" fill="#1f77b4"/>
<circle cx="1180.4" cy="90.1" r="1.9" fill="#1f77b4"/>
<circle cx="1185" cy="83.7" r="1.9" fill="#1f77b4"/>
<circle cx="1189.7" cy="126.8" r="1.9" fill="#1f77b4"/>
<circle cx="1194.3" cy="132.5" r="1.9" fill="#1f77b4"/>
<circle cx="1199" cy="134.5" r="1.9" fill="#1f77b4"/>
<circle cx="1203.6" cy="113.9" r="1.9" fill="#1f77b4"/>
<circle cx="1208.3" cy="95.3" r="1.9" fill="#1f77b4"/>
<circle cx="1213" cy="97.8" r="1.9" fill="#1f77b4"/>
<circle cx="1217.6" cy="109.4" r="1.9" fill="#1f77b4"/>
<circle cx="1222.3" cy="108.8" r="1.9" fill="#1f77b4"/>
<circle cx="1226.9" cy="117.1" r="1.9" fill="#1f77b4"/>
<circle cx="1231.6" cy="124.2" r="1.9" fill="#1f77b4"/>
<circle cx="1236.2" cy="113.9" r="1.9" fill="#1f77b4"/>
<circle cx="1240.9" cy="123.3" r="1.9" fill="#1f77b4"/>
<circle cx="1245.5" cy="117.8" r="1.9" fill="#1f77b4"/>
<circle cx="1250.2" cy="108.1" r="1.9" fill="#1f77b4"/>
<circle cx="1254.8" cy="113.9" r="1.9" fill="#1f77b4"/>
<circle cx="1259.5" cy="128" r="1.9" fill="#1f77b4"/>
<circle cx="1264.2" cy="117.1" r="1.9" fill="#1f77b4"/>
<circle cx="1268.8" cy="124.9" r="1.9" fill="#1f77b4"/>
<circle cx="1273.5" cy="133.2" r="1.9" fill="#1f77b4"/>
<circle cx="1278.1" cy="140.8" r="1.9" fill="#1f77b4"/>
<circle cx="1282.8" cy="136.4" r="1.9" fill="#1f77b4"/>
<circle cx="1287.4" cy="132.5" r="1.9" fill="#1f77b4"/>
<g clip-path="url(#spc)">
<rect x="529.3" y="348.5" width="54.7" height="83.5" fill="#bfbf00"/>
<polygon points="101.7,411.2 104.7,410.8 107.7,411 110.7,410.8 113.7,411.4 116.7,412.6 119.7,413.7 122.7,413.9 125.7,414.3 128.7,414.2 131.7,415.3 134.7,415.6 137.7,416.1 140.7,416.6 143.7,417 146.7,418.1 149.7,418.3 152.7,418.5 155.7,418.8 158.7,418.4 161.7,418.8 164.7,419.4 167.7,419.7 170.7,420 173.7,420.1 176.7,419.3 179.7,420 182.7,420.2 185.7,420.1 188.7,419.9 191.7,420.3 194.7,420 197.7,421.1 200.7,421.2 203.7,420.9 206.7,420.7 209.7,421.5 212.7,421.2 215.7,421.6 218.7,421.7 221.7,421.4 224.7,421.3 227.7,421.6 230.7,421.5 233.7,421.3 236.7,421.6 239.7,422.3 242.7,421.4 245.7,421.5 248.7,422.3 251.7,422 254.7,422.3 257.7,422.3 260.7,422.2 263.7,423.1 266.7,422.2 269.7,422.5 272.7,422.3 275.7,422.9 278.7,422.6 281.7,422.7 284.7,423.3 287.7,422.8 290.7,423.2 293.7,423.6 296.7,422.7 299.7,422.8 302.7,423 305.7,423.7 308.7,423.5 311.7,423.1 314.7,423.3 317.7,423.1 320.7,423.5 323.7,423 326.7,423.9 329.7,424.1 332.7,424.2 335.7,424 338.7,424.3 341.7,423.2 344.7,423.6 347.7,424.4 350.7,424.2 353.7,423.8 356.7,424.5 359.7,424.2 362.7,424.4 365.7,423.8 368.7,423.8 371.7,424.1 374.7,423.8 377.7,424.1 380.7,424.8 383.7,424.1 386.7,423.8 389.7,423.8 392.7,424 395.7,424.8 398.7,424.3 401.7,424.3 404.7,424.1 407.7,425.2 410.7,424.5 413.7,424.3 416.7,424.1 419.7,424.2 422.7,424.3 425.7,425 428.7,424.4 431.7,424.3 434.7,424.8 437.7,424.6 440.7,425.5 443.7,424.5 446.7,425 449.7,425.3 452.7,424.9 455.7,425.6 458.7,425.1 461.7,424.8 464.7,425 467.7,424.6 470.7,425.1 473.7,424.9 476.7,425.7 479.7,425.7 482.7,425.3 485.7,424.8 488.7,425.1 491.7,425.1 494.7,425.1 497.7,425.2 500.7,425.9 503.7,425.1 506.7,425 509.7,426.1 512.7,425.6 515.7,426.2 518.7,425.5 521.7,426.1 524.7,425.8 527.7,426 530.7,425.9 533.7,425.6 536.7,425.2 539.7,425.3 542.7,426.1 545.7,426.2 548.7,426.2 551.7,425.5 554.7,425.9 557.7,426.1 560.7,425.9 563.7,426.1 566.7,425.8 569.7,426 572.7,426 575.7,425.5 578.7,426.3 581.7,426.4 584.7,425.3 587.7,426.4 590.7,426.4 593.7,426.1 596.7,425.3 599.7,426.4 602.7,425.5 605.7,426.5 608.7,426.1 611.7,425.4 614.7,425.6 617.7,426.1 620.7,426.1 623.7,426.3 626.7,426.5 629.7,425.7 632.7,425.4 635.7,426.5 638.7,425.5 641.7,426.5 644.7,425.6 647.7,426.5 650.7,426.4 653.7,426.6 656.7,426.2 659.7,426.6 662.7,425.8 665.7,426.4 668.7,426 671.7,426.7 674.7,426.5 677.7,426.2 680.7,426.3 683.7,425.7 686.7,425.7 689.7,426.4 692.7,426.3 695.7,426.7 698.7,426.4 701.7,425.9 704.7,426.2 707.7,426.6 710.7,426.4 713.7,425.8 716.7,426.8 719.7,426.8 722.7,425.9 725.7,426.4 728.7,426.3 731.7,426.8 734.7,426.2 737.7,426.1 740.7,426.4 743.7,427 746.7,426 749.7,426 752.7,426.6 755.7,427 758.7,426.5 761.7,426.4 764.7,427 767.7,426.9 770.7,426 773.7,427 776.7,426.2 779.7,426.3 782.7,427 785.7,426.5 788.7,427 791.7,426.2 794.7,427.1 797.7,426.3 800.7,426.2 803.7,426.7 806.7,426.5 809.7,426.7 812.7,427.2 815.7,427 818.7,426.1 821.7,426.5 824.7,426.8 827.7,426.7 830.7,427 833.7,426.7 836.7,426.3 839.7,426.5 842.7,427.2 845.7,426.6 848.7,427.1 851.7,427.4 854.7,427 857.7,427.1 860.7,427 863.7,426.6 866.7,427.4 869.7,426.9 872.7,427.4 875.7,426.7 878.7,427.4 881.7,427.3 884.7,427.1 887.7,426.9 890.7,426.5 893.7,427.3 896.7,426.8 899.7,427.2 902.7,426.6 905.7,426.5 908.7,426.6 911.7,427.4 914.7,426.6 917.7,427.5 920.7,426.9 923.7,427.1 926.7,426.8 929.7,427.2 932.7,426.5 935.7,426.9 938.7,427.6 941.7,426.7 944.7,427.2 947.7,426.8 950.7,426.8 953.7,426.5 956.7,426.5 959.7,427.6 962.7,427.5 965.7,427.4 968.7,427.4 971.7,427.6 974.7,426.7 977.7,427.2 980.7,427.1 983.7,427.2 986.7,427.6 989.7,427.4 992.7,427.7 995.7,426.6 998.7,427.3 1001.7,427.3 1004.7,427.4 1007.7,427.2 1010.7,427.5 1013.7,426.9 1016.7,427.6 1019.7,427 1022.7,427.2 1025.7,427.6 1028.7,427.4 1031.7,426.9 1034.7,426.8 1037.7,426.9 1040.7,427.3 1043.7,427.7 1046.7,427.6 1049.7,427 1052.7,427 1055.7,427.5 1058.7,426.9 1061.7,427.1 1064.7,426.6 1067.7,426.8 1070.7,427.2 1073.7,427.4 1076.7,427.3 1079.7,427 1082.7,427.7 1085.7,427.3 1088.7,426.8 1091.7,426.7 1094.7,427.8 1097.7,427.8 1100.7,427.7 1103.7,427.3 1106.7,427 1109.7,426.7 1112.7,426.9 1115.7,426.9 1118.7,427.7 1121.7,427.7 1124.7,427.6 1127.7,426.8 1130.7,426.9 1133.7,427 1136.7,427.8 1139.7,426.8 1142.7,427.6 1145.7,427.5 1148.7,427.3 1151.7,427.8 1154.7,427 1157.7,427.3 1160.7,426.9 1163.7,426.8 1166.7,426.7 1169.7,427.1 1172.7,426.8 1175.7,426.8 1178.7,427.9 1181.7,427 1184.7,427.8 1187.7,427.5 1190.7,427.6 1193.7,427.5 1196.7,427.9 1199.7,427.8 1202.7,427.6 1205.7,427.4 1208.7,427.6 1211.7,427.6 1214.7,427.4 1217.7,427.3 1220.7,426.9 1223.7,427.8 1226.7,427.3 1229.7,426.8 1232.7,427 1235.7,427.8 1238.7,427.1 1241.7,427.2 1244.7,427.6 1247.7,427.8 1250.7,427.2 1253.7,427.2 1256.7,427.3 1259.7,426.8 1262.7,427.8 1265.7,426.8 1268.7,428 1271.7,427.2 1274.7,427.5 1277.7,428.6 1280.7,428.9 1283.7,428.5 1286.7,429.3 1289.7,429.6 1292.7,430.3 1295.7,430.1 1298.7,431.3 1299.6,432 101.7,432" fill="#707070" fill-opacity="0.5"/>
<rect x="126.4" y="348.5" width="12.6" height="83.5" fill="#8c8c8c" fill-opacity="0.85" stroke="#222" stroke-width="1"/>
<path d="M126.4 432L139 421.3M126.4 410L139 399.3M126.4 388L139 377.3M126.4 366L139 355.3M126.4 344L139 333.3" stroke="#111" stroke-width="0.9" fill="none"/>
<rect x="1258.4" y="348.5" width="6.9" height="83.5" fill="#8c8c8c" fill-opacity="0.85" stroke="#222" stroke-width="1"/>
<path d="M1258.4 432L1265.3 426.1M1258.4 410L1265.3 404.1M1258.4 388L1265.3 382.1M1258.4 366L1265.3 360.1M1258.4 344L1265.3 338.1" stroke="#111" stroke-width="0.9" fill="none"/>
<line x1="202.9" y1="348.5" x2="202.9" y2="432" stroke="#555" stroke-width="1.2" stroke-dasharray="4,2.5"/>
<line x1="273.6" y1="348.5" x2="273.6" y2="432" stroke="#555" stroke-width="1.2" stroke-dasharray="4,2.5"/>
<line x1="524.6" y1="348.5" x2="524.6" y2="432" stroke="#555" stroke-width="1.2" stroke-dasharray="4,2.5"/>
<line x1="616.4" y1="348.5" x2="616.4" y2="432" stroke="#555" stroke-width="1.2" stroke-dasharray="4,2.5"/>
<line x1="699.3" y1="348.5" x2="699.3" y2="432" stroke="#555" stroke-width="1.2" stroke-dasharray="4,2.5"/>
<line x1="1131.1" y1="348.5" x2="1131.1" y2="432" stroke="#555" stroke-width="1.2" stroke-dasharray="4,2.5"/>
<line x1="556.9" y1="348.5" x2="556.9" y2="432" stroke="#222" stroke-width="1.2" stroke-dasharray="1.5,1.5"/>
<polyline points="102.1,408.6 103.6,428.6 105.4,387.1 106.4,401.4 107.9,395.7 108.9,400 111.1,377.1 113.6,417.1 115,397.1 116,405.7 117.1,397.1 118.6,417.1 120.7,428.6 122.9,407.1 124,414.3 126.4,407.1 128.6,377.1 130.7,387.1 131.7,392.9 132.9,385.7 134.6,404.3 136.9,381.4 138.6,407.1 140,401.4 141.7,422.9 142.9,392.9 145,414.3 147.1,412.9 148.9,405.7 150,417.1 151.1,395 153.6,415.7 155.7,422.1 157.9,421.4 160,405.7 161.7,423.6 164,401.4 166,410 167.9,407.1 170,412.9 171.4,400 173.6,417.1 175.7,412.9 179.7,394.3 182.1,402.9 185,421.4 186.4,392.1 187.9,407.9 191.1,414.3 194.3,398.6 197.1,392.9 200,395.7 202.9,392.1 205,404.3 206.4,395.7 210,397.9 212.9,411.4 215,401.4 217.1,412.9 220,393.6 222.9,407.1 225,401.4 227.9,415.7 230.7,400.7 234.3,408.6 237.1,412.9 239.3,407.9 241.4,425.7 243.6,422.9 246.4,413.6 248.6,418.6 251.4,425.7 253.6,412.9 256.9,399.3 258.9,414.3 261.4,410 262.9,415.7 265.7,401.4 267.9,392.9 269.3,398.6 270.7,391.4 273.1,390 276.4,406.4 279.3,400 282.1,408.6 287.1,397.9 290.7,405.7 293.6,415.7 295.7,418.6 297.9,422.1 300,422.1 302.9,410.7 304.3,414.3 307.1,415 309.7,405 312.9,417.1 315.7,410 318.3,418.6 321.4,409.3 324.3,415.7 326.4,411.4 329.3,410 331.7,412.1 333.6,419.3 337.1,401.4 339.7,405.7 341.4,402.9 343.6,412.9 347.1,398.6 349.3,397.1 351.1,396.4 354,412.1 357.1,414.3 358.9,417.9 361.4,422.1 365.7,407.9 367.1,414.3 370,408.6 372.9,400.7 375.7,401.4 379.3,417.1 381.7,423.6 384.3,414.3 387.4,394.3 390.7,393.6 393.6,396.4 395,385.7 397.1,390 398.6,386.4 401.7,387.1 403.6,397.1 406.4,384.3 410,378.6 411.4,384.3 412.9,375 414.3,382.1 416,377.9 420,399.3 423.1,373.6 427.1,393.6 430,376.4 432.9,382.9 437.4,402.9 440,390 442.9,385.7 444.3,389.3 446.4,382.9 449.3,385.7 452.6,375 455.7,375.7 458.6,383.6 460.7,380 463.6,376.4 465.7,386.4 467.9,380 471.4,380.7 473.6,375.7 476.4,386.4 478.6,390 482.1,377.9 485.7,392.1 487.9,380.7 490,385.7 492.9,383.6 496.4,368.6 500,384.3 501.4,387.9 503.1,382.1 505,385.7 506.4,381.4 507.9,387.1 509.3,382.9 511.1,390 514,377.9 516.4,385.7 518.6,393.6 520.7,382.9 522.9,371.4 524.6,370.7 525.7,384.3 527.9,388.6 529.3,379.3 531.4,385.7 533.1,398.6 535,406.4 536.9,387.9 539.3,385.7 541.4,385.7 542.9,381.4 544.6,374.3 546.4,384.3 549.3,392.1 551.7,380.7 553.6,387.1 556.4,372.1 558.6,376.4 560,387.1 561.7,398.6 565,380.7 567.1,385.7 570,393.6 572.1,390 573.1,392.9 575.4,386.4 577.1,395 580,393.6 582.1,402.1 585,393.6 587.9,370 591.4,391.4 595,370.7 597.9,373.6 600.7,384.3 603.6,375 605.7,365 608.6,381.4 612.9,366.4 615,370.7 616.4,361.4 618.6,371.4 622.1,386.4 624.3,384.3 626.4,393.6 630,377.9 632.9,371.4 636.4,372.9 638.6,385 641.4,380 643.6,372.9 645.7,378.6 649.3,365.7 652.9,377.9 654.3,372.1 656.4,378.6 659.3,367.9 661.4,371.4 664,364.3 667.9,375.7 670,374.3 671.4,382.1 675,359.3 677.1,367.9 680,358.6 683.6,363.6 685,373.6 687.1,362.9 689.3,369.3 692.1,370 695,369.3 697.9,352.9 700,353.6 701.4,358.6 702.9,353.6 704.3,357.1 706.4,355.7 709.3,362.9 712.1,372.9 715,375.7 717.1,362.9 720,356.4 722.9,364.3 725.7,370 727.9,362.9 730.7,352.9 733.6,359.3 736.4,355.7 738.9,363.6 741.1,356.4 742.9,361.4 745.4,362.9 747.9,357.9 750.7,364.3 752.9,359.3 755.4,363.6 757.9,353.6 760.7,355.7 764.3,359.3 767.1,358.6 770.7,357.9 775,352.9 777.9,362.9 781.4,360 784.3,362.1 787.1,356.4 790.7,355 794.3,372.1 797.1,361.4 800,354.3 803.6,365 805.7,356.4 808.6,361.4 811.4,357.9 813.6,364.3 817.1,362.9 820.7,361.4 824.3,360 827.9,353.6 830,364.3 833.6,362.1 837.1,361.4 841.4,357.1 844.3,362.9 848.6,364.3 852.9,368.6 857.9,358.6 860.7,363.6 863.6,362.9 867.1,366.4 870.7,360.7 872.9,362.1 875.7,368.6 881.4,353.6 885,363.6 891.4,367.1 895,363.6 897.9,361.4 900,362.1 902.1,361.4 904.3,365 907.9,376.4 911.1,365.7 914.3,378.6 917.9,364.3 921.4,369.3 925,375.7 928.6,361.4 931.4,366.4 934.3,367.1 937.1,364.3 939.3,367.1 942.6,381.4 945.7,364.3 949.3,366.4 952.9,375 955.7,365 957.9,365 960,361.4 963.6,377.9 965.7,370.7 968.6,367.9 971.4,366.4 974.3,362.9 977.9,377.9 980,376.4 983.6,364.3 986.4,367.9 988.6,366.4 992.9,377.1 995.4,369.3 998.6,375.7 1001.4,372.1 1004.3,370 1006.4,372.1 1007.9,367.9 1011.4,372.1 1014.3,382.1 1017.1,372.1 1019.3,377.1 1022.1,371.4 1025,370 1029.3,379.3 1032.1,374.3 1034.3,372.9 1037.1,377.9 1041.4,371.4 1045.7,375.7 1049.3,379.3 1051.4,375 1053.6,382.9 1055.7,375 1057.9,370.7 1060,376.4 1063.6,382.1 1065.7,378.6 1070.7,381.4 1072.1,378.6 1074.3,382.9 1077.9,375 1080,381.4 1082.9,372.9 1085,376.4 1090,401.4 1094.3,380.7 1097.1,397.9 1100,387.1 1102.4,376.9 1104.7,379.3 1107.9,372.2 1112.3,389.5 1114.9,376.1 1117.6,375.4 1120.4,363.6 1123.9,380.9 1127.5,372.2 1131.1,362.8 1133,369.1 1137.7,373 1141.6,366.7 1145.6,382.4 1150,386.4 1153.7,366.7 1156.9,370.6 1161,361.2 1164.4,373 1170.7,365.9 1174.6,362.8 1177.8,369.1 1183,385.6 1186.7,363.6 1189.9,367.5 1194.3,371.4 1199,363.6 1202.9,365.1 1208.7,379.3 1213.9,364.4 1216.3,366.7 1219.4,369.1 1222.6,378.5 1225.7,372.2 1230.1,377.7 1234.8,367.5 1238.3,369.9 1243.8,376.1 1247.7,368.3 1253.2,373.8 1255.6,367.5 1258.7,369.9 1261.5,380.9 1264.2,370.6 1266.2,373 1268.9,368.3 1271.3,372.2 1277.6,363.6 1280.7,367.5 1284.6,369.9 1287,361.2 1291.4,370.6 1294.1,365.9 1299.6,365.9" fill="none" stroke="#0000ff" stroke-width="1.5" stroke-linejoin="round"/>
</g>
<rect x="101.7" y="348.5" width="1197.9" height="83.5" fill="none" stroke="#333" stroke-width="1"/>
<line x1="98.2" y1="431.3" x2="101.7" y2="431.3" stroke="#333" stroke-width="0.8"/>
<text class="s" x="94.6" y="434.9" font-size="10" text-anchor="end" fill="#222" textLength="5.7" lengthAdjust="spacingAndGlyphs" stroke="#222" stroke-width="0.12">0</text>
<line x1="98.2" y1="397.5" x2="101.7" y2="397.5" stroke="#333" stroke-width="0.8"/>
<text class="s" x="94.6" y="401.1" font-size="10" text-anchor="end" fill="#222" textLength="11.4" lengthAdjust="spacingAndGlyphs" stroke="#222" stroke-width="0.12">10</text>
<line x1="98.2" y1="363.7" x2="101.7" y2="363.7" stroke="#333" stroke-width="0.8"/>
<text class="s" x="94.6" y="367.3" font-size="10" text-anchor="end" fill="#222" textLength="11.4" lengthAdjust="spacingAndGlyphs" stroke="#222" stroke-width="0.12">20</text>
<line x1="106" y1="432" x2="106" y2="435.5" stroke="#333" stroke-width="0.8"/>
<text class="s" x="106" y="447.1" font-size="10" text-anchor="middle" fill="#222" textLength="23.2" lengthAdjust="spacingAndGlyphs" stroke="#222" stroke-width="0.12">3500</text>
<line x1="164.9" y1="432" x2="164.9" y2="435.5" stroke="#333" stroke-width="0.8"/>
<text class="s" x="164.9" y="447.1" font-size="10" text-anchor="middle" fill="#222" textLength="23.2" lengthAdjust="spacingAndGlyphs" stroke="#222" stroke-width="0.12">3600</text>
<line x1="223.8" y1="432" x2="223.8" y2="435.5" stroke="#333" stroke-width="0.8"/>
<text class="s" x="223.8" y="447.1" font-size="10" text-anchor="middle" fill="#222" textLength="23.2" lengthAdjust="spacingAndGlyphs" stroke="#222" stroke-width="0.12">3700</text>
<line x1="282.7" y1="432" x2="282.7" y2="435.5" stroke="#333" stroke-width="0.8"/>
<text class="s" x="282.7" y="447.1" font-size="10" text-anchor="middle" fill="#222" textLength="23.2" lengthAdjust="spacingAndGlyphs" stroke="#222" stroke-width="0.12">3800</text>
<line x1="341.6" y1="432" x2="341.6" y2="435.5" stroke="#333" stroke-width="0.8"/>
<text class="s" x="341.6" y="447.1" font-size="10" text-anchor="middle" fill="#222" textLength="23.2" lengthAdjust="spacingAndGlyphs" stroke="#222" stroke-width="0.12">3900</text>
<line x1="400.5" y1="432" x2="400.5" y2="435.5" stroke="#333" stroke-width="0.8"/>
<text class="s" x="400.5" y="447.1" font-size="10" text-anchor="middle" fill="#222" textLength="23.2" lengthAdjust="spacingAndGlyphs" stroke="#222" stroke-width="0.12">4000</text>
<line x1="459.5" y1="432" x2="459.5" y2="435.5" stroke="#333" stroke-width="0.8"/>
<text class="s" x="459.5" y="447.1" font-size="10" text-anchor="middle" fill="#222" textLength="23.2" lengthAdjust="spacingAndGlyphs" stroke="#222" stroke-width="0.12">4100</text>
<line x1="518.4" y1="432" x2="518.4" y2="435.5" stroke="#333" stroke-width="0.8"/>
<text class="s" x="518.4" y="447.1" font-size="10" text-anchor="middle" fill="#222" textLength="23.2" lengthAdjust="spacingAndGlyphs" stroke="#222" stroke-width="0.12">4200</text>
<line x1="577.3" y1="432" x2="577.3" y2="435.5" stroke="#333" stroke-width="0.8"/>
<text class="s" x="577.3" y="447.1" font-size="10" text-anchor="middle" fill="#222" textLength="23.2" lengthAdjust="spacingAndGlyphs" stroke="#222" stroke-width="0.12">4300</text>
<line x1="636.2" y1="432" x2="636.2" y2="435.5" stroke="#333" stroke-width="0.8"/>
<text class="s" x="636.2" y="447.1" font-size="10" text-anchor="middle" fill="#222" textLength="23.2" lengthAdjust="spacingAndGlyphs" stroke="#222" stroke-width="0.12">4400</text>
<line x1="695.1" y1="432" x2="695.1" y2="435.5" stroke="#333" stroke-width="0.8"/>
<text class="s" x="695.1" y="447.1" font-size="10" text-anchor="middle" fill="#222" textLength="23.2" lengthAdjust="spacingAndGlyphs" stroke="#222" stroke-width="0.12">4500</text>
<line x1="754" y1="432" x2="754" y2="435.5" stroke="#333" stroke-width="0.8"/>
<text class="s" x="754" y="447.1" font-size="10" text-anchor="middle" fill="#222" textLength="23.2" lengthAdjust="spacingAndGlyphs" stroke="#222" stroke-width="0.12">4600</text>
<line x1="812.9" y1="432" x2="812.9" y2="435.5" stroke="#333" stroke-width="0.8"/>
<text class="s" x="812.9" y="447.1" font-size="10" text-anchor="middle" fill="#222" textLength="23.2" lengthAdjust="spacingAndGlyphs" stroke="#222" stroke-width="0.12">4700</text>
<line x1="871.8" y1="432" x2="871.8" y2="435.5" stroke="#333" stroke-width="0.8"/>
<text class="s" x="871.8" y="447.1" font-size="10" text-anchor="middle" fill="#222" textLength="23.2" lengthAdjust="spacingAndGlyphs" stroke="#222" stroke-width="0.12">4800</text>
<line x1="930.7" y1="432" x2="930.7" y2="435.5" stroke="#333" stroke-width="0.8"/>
<text class="s" x="930.7" y="447.1" font-size="10" text-anchor="middle" fill="#222" textLength="23.2" lengthAdjust="spacingAndGlyphs" stroke="#222" stroke-width="0.12">4900</text>
<line x1="989.6" y1="432" x2="989.6" y2="435.5" stroke="#333" stroke-width="0.8"/>
<text class="s" x="989.6" y="447.1" font-size="10" text-anchor="middle" fill="#222" textLength="23.2" lengthAdjust="spacingAndGlyphs" stroke="#222" stroke-width="0.12">5000</text>
<line x1="1048.6" y1="432" x2="1048.6" y2="435.5" stroke="#333" stroke-width="0.8"/>
<text class="s" x="1048.6" y="447.1" font-size="10" text-anchor="middle" fill="#222" textLength="23.2" lengthAdjust="spacingAndGlyphs" stroke="#222" stroke-width="0.12">5100</text>
<line x1="1107.5" y1="432" x2="1107.5" y2="435.5" stroke="#333" stroke-width="0.8"/>
<text class="s" x="1107.5" y="447.1" font-size="10" text-anchor="middle" fill="#222" textLength="23.2" lengthAdjust="spacingAndGlyphs" stroke="#222" stroke-width="0.12">5200</text>
<line x1="1166.4" y1="432" x2="1166.4" y2="435.5" stroke="#333" stroke-width="0.8"/>
<text class="s" x="1166.4" y="447.1" font-size="10" text-anchor="middle" fill="#222" textLength="23.2" lengthAdjust="spacingAndGlyphs" stroke="#222" stroke-width="0.12">5300</text>
<line x1="1225.3" y1="432" x2="1225.3" y2="435.5" stroke="#333" stroke-width="0.8"/>
<text class="s" x="1225.3" y="447.1" font-size="10" text-anchor="middle" fill="#222" textLength="23.2" lengthAdjust="spacingAndGlyphs" stroke="#222" stroke-width="0.12">5400</text>
<line x1="1284.2" y1="432" x2="1284.2" y2="435.5" stroke="#333" stroke-width="0.8"/>
<text class="s" x="1284.2" y="447.1" font-size="10" text-anchor="middle" fill="#222" textLength="23.2" lengthAdjust="spacingAndGlyphs" stroke="#222" stroke-width="0.12">5500</text>
<text class="s" x="106.5" y="346.2" font-size="10" fill="#222" textLength="6.2" lengthAdjust="spacingAndGlyphs" stroke="#222" stroke-width="0.12">e</text>
<text class="s" x="113.2" y="341.2" font-size="7" fill="#222" textLength="11.8" lengthAdjust="spacingAndGlyphs" stroke="#222" stroke-width="0.12">−17</text>
<text class="s" x="125.2" y="346.2" font-size="10" fill="#222" textLength="12.2" lengthAdjust="spacingAndGlyphs" stroke="#222" stroke-width="0.12">x2</text>
<text class="s" x="138.2" y="346.2" font-size="10" fill="#222" stroke="#222" stroke-width="0.12" font-style="italic">Å</text>
<text class="s" font-size="9" fill="#ff00ff" fill-opacity="1.0" stroke="#ff00ff" stroke-opacity="1.0" stroke-width="0.2" text-anchor="end" transform="translate(131.7 336) rotate(90)" x="0" y="3.3">CII</text>
<text class="s" font-size="9" fill="#ff00ff" fill-opacity="1.0" text-anchor="middle" transform="translate(131.7 345) rotate(90)" x="0" y="2.6">{</text>
<text class="s" font-size="9" fill="#ff0000" fill-opacity="1.0" stroke="#ff0000" stroke-opacity="1.0" stroke-width="0.2" text-anchor="end" transform="translate(184.3 336) rotate(90)" x="0" y="3.3">OVI</text>
<text class="s" font-size="9" fill="#ff0000" fill-opacity="1.0" text-anchor="middle" transform="translate(184.3 345) rotate(90)" x="0" y="2.6">{</text>
<text class="s" font-size="9" fill="#800080" fill-opacity="0.9" stroke="#800080" stroke-opacity="0.9" stroke-width="0.2" text-anchor="end" transform="translate(204.3 336) rotate(90)" x="0" y="3.3">HeII</text>
<text class="s" font-size="9" fill="#800080" fill-opacity="0.9" text-anchor="middle" transform="translate(204.3 345) rotate(90)" x="0" y="2.6">{</text>
<text class="s" font-size="9" fill="#ffa500" fill-opacity="0.8" stroke="#ffa500" stroke-opacity="0.8" stroke-width="0.2" text-anchor="end" transform="translate(185.7 294) rotate(90)" x="0" y="3.3">SiIV</text>
<text class="s" font-size="9" fill="#ffa500" fill-opacity="0.8" text-anchor="middle" transform="translate(185.7 303) rotate(90)" x="0" y="2.6">{</text>
<text class="s" font-size="9" fill="#8a2be2" fill-opacity="0.9" stroke="#8a2be2" stroke-opacity="0.9" stroke-width="0.2" text-anchor="end" transform="translate(312 336) rotate(90)" x="0" y="3.3">SiIV</text>
<text class="s" font-size="9" fill="#8a2be2" fill-opacity="0.9" text-anchor="middle" transform="translate(312 345) rotate(90)" x="0" y="2.6">{</text>
<text class="s" font-size="9" fill="#87ceeb" fill-opacity="0.8" stroke="#87ceeb" stroke-opacity="0.8" stroke-width="0.2" text-anchor="end" transform="translate(405 336) rotate(90)" x="0" y="3.3">OII</text>
<text class="s" font-size="9" fill="#87ceeb" fill-opacity="0.8" text-anchor="middle" transform="translate(405 345) rotate(90)" x="0" y="2.6">{</text>
<text class="s" font-size="9" fill="#ffa500" fill-opacity="1.0" stroke="#ffa500" stroke-opacity="1.0" stroke-width="0.2" text-anchor="end" transform="translate(417.9 336) rotate(90)" x="0" y="3.3">CIV</text>
<text class="s" font-size="9" fill="#ffa500" fill-opacity="1.0" text-anchor="middle" transform="translate(417.9 345) rotate(90)" x="0" y="2.6">{</text>
<text class="s" font-size="9" fill="#87ceeb" fill-opacity="0.8" stroke="#87ceeb" stroke-opacity="0.8" stroke-width="0.2" text-anchor="end" transform="translate(426.4 336) rotate(90)" x="0" y="3.3">OII</text>
<text class="s" font-size="9" fill="#87ceeb" fill-opacity="0.8" text-anchor="middle" transform="translate(426.4 345) rotate(90)" x="0" y="2.6">{</text>
<text class="s" font-size="9" fill="#ff0000" fill-opacity="1.0" stroke="#ff0000" stroke-opacity="1.0" stroke-width="0.2" text-anchor="end" transform="translate(609.6 336) rotate(90)" x="0" y="3.3">NV</text>
<text class="s" font-size="9" fill="#ff0000" fill-opacity="1.0" text-anchor="middle" transform="translate(609.6 345) rotate(90)" x="0" y="2.6">{</text>
<text class="s" font-size="9" fill="#ff0000" fill-opacity="1.0" stroke="#ff0000" stroke-opacity="1.0" stroke-width="0.2" text-anchor="end" transform="translate(656 336) rotate(90)" x="0" y="3.3">SiII</text>
<text class="s" font-size="9" fill="#ff0000" fill-opacity="1.0" text-anchor="middle" transform="translate(656 345) rotate(90)" x="0" y="2.6">{</text>
<text class="s" font-size="9" fill="#8a2be2" fill-opacity="0.9" stroke="#8a2be2" stroke-opacity="0.9" stroke-width="0.2" text-anchor="end" transform="translate(705.2 336) rotate(90)" x="0" y="3.3">HeII</text>
<text class="s" font-size="9" fill="#8a2be2" fill-opacity="0.9" text-anchor="middle" transform="translate(705.2 345) rotate(90)" x="0" y="2.6">{</text>
<text class="s" font-size="9" fill="#87ceeb" fill-opacity="0.8" stroke="#87ceeb" stroke-opacity="0.8" stroke-width="0.2" text-anchor="end" transform="translate(792.7 336) rotate(90)" x="0" y="3.3">Hγ</text>
<text class="s" font-size="9" fill="#87ceeb" fill-opacity="0.8" text-anchor="middle" transform="translate(792.7 345) rotate(90)" x="0" y="2.6">{</text>
<text class="s" font-size="9" fill="#87ceeb" fill-opacity="0.8" stroke="#87ceeb" stroke-opacity="0.8" stroke-width="0.2" text-anchor="end" transform="translate(816.8 336) rotate(90)" x="0" y="3.3">Hγ</text>
<text class="s" font-size="9" fill="#87ceeb" fill-opacity="0.8" text-anchor="middle" transform="translate(816.8 345) rotate(90)" x="0" y="2.6">{</text>
<text class="s" font-size="9" fill="#ff0000" fill-opacity="1.0" stroke="#ff0000" stroke-opacity="1.0" stroke-width="0.2" text-anchor="end" transform="translate(933.6 336) rotate(90)" x="0" y="3.3">SiIV</text>
<text class="s" font-size="9" fill="#ff0000" fill-opacity="1.0" text-anchor="middle" transform="translate(933.6 345) rotate(90)" x="0" y="2.6">{</text>
<text class="s" font-size="9" fill="#ffa500" fill-opacity="0.85" stroke="#ffa500" stroke-opacity="0.85" stroke-width="0.2" text-anchor="end" transform="translate(968.6 294) rotate(90)" x="0" y="3.3">CIII</text>
<text class="s" font-size="9" fill="#ffa500" fill-opacity="0.85" text-anchor="middle" transform="translate(968.6 303) rotate(90)" x="0" y="2.6">{</text>
<text class="s" font-size="9" fill="#008000" fill-opacity="0.9" stroke="#008000" stroke-opacity="0.9" stroke-width="0.2" text-anchor="end" transform="translate(970 336) rotate(90)" x="0" y="3.3">Hγ</text>
<text class="s" font-size="9" fill="#008000" fill-opacity="0.9" text-anchor="middle" transform="translate(970 345) rotate(90)" x="0" y="2.6">{</text>
<text class="s" font-size="9" fill="#800080" fill-opacity="0.9" stroke="#800080" stroke-opacity="0.9" stroke-width="0.2" text-anchor="end" transform="translate(1104.1 336) rotate(90)" x="0" y="3.3">CII</text>
<text class="s" font-size="9" fill="#800080" fill-opacity="0.9" text-anchor="middle" transform="translate(1104.1 345) rotate(90)" x="0" y="2.6">{</text>
<text class="s" font-size="9" fill="#87ceeb" fill-opacity="0.8" stroke="#87ceeb" stroke-opacity="0.8" stroke-width="0.2" text-anchor="end" transform="translate(1122.8 336) rotate(90)" x="0" y="3.3">Hβ</text>
<text class="s" font-size="9" fill="#87ceeb" fill-opacity="0.8" text-anchor="middle" transform="translate(1122.8 345) rotate(90)" x="0" y="2.6">{</text>
<text class="s" font-size="9" fill="#8a2be2" fill-opacity="0.9" stroke="#8a2be2" stroke-opacity="0.9" stroke-width="0.2" text-anchor="end" transform="translate(1140.1 336) rotate(90)" x="0" y="3.3">CIII</text>
<text class="s" font-size="9" fill="#8a2be2" fill-opacity="0.9" text-anchor="middle" transform="translate(1140.1 345) rotate(90)" x="0" y="2.6">{</text>
<text class="s" font-size="9" fill="#87ceeb" fill-opacity="0.8" stroke="#87ceeb" stroke-opacity="0.8" stroke-width="0.2" text-anchor="end" transform="translate(1149.8 336) rotate(90)" x="0" y="3.3">Hβ</text>
<text class="s" font-size="9" fill="#87ceeb" fill-opacity="0.8" text-anchor="middle" transform="translate(1149.8 345) rotate(90)" x="0" y="2.6">{</text>
<text class="s" font-size="9" fill="#87ceeb" fill-opacity="0.8" stroke="#87ceeb" stroke-opacity="0.8" stroke-width="0.2" text-anchor="end" transform="translate(1184.5 336) rotate(90)" x="0" y="3.3">OIII</text>
<text class="s" font-size="9" fill="#87ceeb" fill-opacity="0.8" text-anchor="middle" transform="translate(1184.5 345) rotate(90)" x="0" y="2.6">{</text>
<text class="s" font-size="9" fill="#87ceeb" fill-opacity="0.8" stroke="#87ceeb" stroke-opacity="0.8" stroke-width="0.2" text-anchor="end" transform="translate(1212.1 336) rotate(90)" x="0" y="3.3">OIII</text>
<text class="s" font-size="9" fill="#87ceeb" fill-opacity="0.8" text-anchor="middle" transform="translate(1212.1 345) rotate(90)" x="0" y="2.6">{</text>
<text class="s" font-size="9" fill="#87ceeb" fill-opacity="0.8" stroke="#87ceeb" stroke-opacity="0.8" stroke-width="0.2" text-anchor="end" transform="translate(1214.7 294) rotate(90)" x="0" y="3.3">OIII</text>
<text class="s" font-size="9" fill="#87ceeb" fill-opacity="0.8" text-anchor="middle" transform="translate(1214.7 303) rotate(90)" x="0" y="2.6">{</text>
<text class="s" font-size="9" fill="#87ceeb" fill-opacity="0.8" stroke="#87ceeb" stroke-opacity="0.8" stroke-width="0.2" text-anchor="end" transform="translate(1243 294) rotate(90)" x="0" y="3.3">OIII</text>
<text class="s" font-size="9" fill="#87ceeb" fill-opacity="0.8" text-anchor="middle" transform="translate(1243 303) rotate(90)" x="0" y="2.6">{</text>
<text class="s" font-size="9" fill="#ff0000" fill-opacity="1.0" stroke="#ff0000" stroke-opacity="1.0" stroke-width="0.2" text-anchor="end" transform="translate(1247.5 336) rotate(90)" x="0" y="3.3">CIV</text>
<text class="s" font-size="9" fill="#ff0000" fill-opacity="1.0" text-anchor="middle" transform="translate(1247.5 345) rotate(90)" x="0" y="2.6">{</text>
<rect x="479.9" y="449.9" width="17" height="6.5" fill="#ff0000"/>
<text class="s" x="503.7" y="456.1" font-size="8" fill="#222" textLength="13.7" lengthAdjust="spacingAndGlyphs" stroke="#222" stroke-width="0.12">Lyα</text>
<rect x="534.1" y="449.9" width="17" height="6.5" fill="#008000"/>
<text class="s" x="557.9" y="456.1" font-size="8" fill="#222" textLength="11" lengthAdjust="spacingAndGlyphs" stroke="#222" stroke-width="0.12">OII</text>
<rect x="586.3" y="449.9" width="17" height="6.5" fill="#8a2be2"/>
<text class="s" x="610.1" y="456.1" font-size="8" fill="#222" textLength="13.4" lengthAdjust="spacingAndGlyphs" stroke="#222" stroke-width="0.12">CIV</text>
<rect x="641.7" y="449.9" width="17" height="6.5" fill="#800080"/>
<text class="s" x="665.5" y="456.1" font-size="8" fill="#222" textLength="12.7" lengthAdjust="spacingAndGlyphs" stroke="#222" stroke-width="0.12">CIII</text>
<rect x="693.5" y="449.9" width="17" height="6.5" fill="#ff00ff"/>
<text class="s" x="717.3" y="456.1" font-size="8" fill="#222" textLength="16.7" lengthAdjust="spacingAndGlyphs" stroke="#222" stroke-width="0.12">MgII</text>
<rect x="749.3" y="449.9" width="17" height="6.5" fill="#ffa500"/>
<text class="s" x="773.1" y="456.1" font-size="8" fill="#222" textLength="15.7" lengthAdjust="spacingAndGlyphs" stroke="#222" stroke-width="0.12">HeII</text>
<rect x="803.5" y="449.9" width="17" height="6.5" fill="#87ceeb"/>
<text class="s" x="827.3" y="456.1" font-size="8" fill="#222" textLength="26.7" lengthAdjust="spacingAndGlyphs" stroke="#222" stroke-width="0.12">(K)CaII</text>
<rect x="869.3" y="449.9" width="17" height="6.5" fill="#87ceeb"/>
<text class="s" x="893.1" y="456.1" font-size="8" fill="#222" textLength="27.5" lengthAdjust="spacingAndGlyphs" stroke="#222" stroke-width="0.12">(H)CaII</text>
<text class="m" x="70" y="498.6" font-size="13.6" textLength="560.9" lengthAdjust="spacingAndGlyphs" stroke="#000" stroke-width="0.08">MOSAIC/KPNO : Possible Matches = 0 (within +/- 3")  P(LAE)/P(OII): 0.058</text>
<text class="s" x="633.5" y="493.2" font-size="8.8" textLength="20.5" lengthAdjust="spacingAndGlyphs" stroke="#000" stroke-width="0.12">0.12</text>
<text class="s" x="633.5" y="502.2" font-size="8.8" textLength="25" lengthAdjust="spacingAndGlyphs" stroke="#000" stroke-width="0.12">0.033</text>
<text class="m" x="668.3" y="498.6" font-size="13.6" textLength="23.4" lengthAdjust="spacingAndGlyphs" stroke="#000" stroke-width="0.08">(g)</text>
<text class="s" x="144.2" y="525.7" font-size="12.7" text-anchor="middle" fill="#111" textLength="92.1" lengthAdjust="spacingAndGlyphs" stroke="#111" stroke-width="0.12">Fiber Positions</text>
<g clip-path="url(#p1)"><rect x="70.1" y="532.9" width="148.4" height="147.7" fill="#fff"/>
<g shape-rendering="crispEdges">
<rect x="70" y="549.5" width="31.5" height="3.5" fill="#f0f0f0"/><rect x="70" y="553" width="31.5" height="3.5" fill="#e8e8e8"/><rect x="101.5" y="553" width="14" height="3.5" fill="#f0f0f0"/><rect x="70" y="556.5" width="3.5" height="3.5" fill="#d8d8d8"/><rect x="73.5" y="556.5" width="10.5" height="3.5" fill="#d0d0d0"/><rect x="84" y="556.5" width="14" height="3.5" fill="#d8d8d8"/><rect x="98" y="556.5" width="7" height="3.5" fill="#e0e0e0"/><rect x="105" y="556.5" width="7" height="3.5" fill="#e8e8e8"/><rect x="112" y="556.5" width="10.5" height="3.5" fill="#f0f0f0"/><rect x="70" y="560" width="21" height="3.5" fill="#b8b8b8"/><rect x="91" y="560" width="3.5" height="3.5" fill="#c0c0c0"/><rect x="94.5" y="560" width="7" height="3.5" fill="#c8c8c8"/><rect x="101.5" y="560" width="3.5" height="3.5" fill="#d0d0d0"/><rect x="105" y="560" width="3.5" height="3.5" fill="#d8d8d8"/><rect x="108.5" y="560" width="7" height="3.5" fill="#e0e0e0"/><rect x="115.5" y="560" width="3.5" height="3.5" fill="#e8e8e8"/><rect x="119" y="560" width="7" height="3.5" fill="#f0f0f0"/><rect x="70" y="563.5" width="17.5" height="3.5" fill="#909090"/><rect x="87.5" y="563.5" width="7" height="3.5" fill="#989898"/><rect x="94.5" y="563.5" width="3.5" height="3.5" fill="#a0a0a0"/><rect x="98" y="563.5" width="3.5" height="3.5" fill="#b0b0b0"/><rect x="101.5" y="563.5" width="3.5" height="3.5" fill="#b8b8b8"/><rect x="105" y="563.5" width="3.5" height="3.5" fill="#c0c0c0"/><rect x="108.5" y="563.5" width="3.5" height="3.5" fill="#c8c8c8"/><rect x="112" y="563.5" width="3.5" height="3.5" fill="#d8d8d8"/><rect x="115.5" y="563.5" width="3.5" height="3.5" fill="#e0e0e0"/><rect x="119" y="563.5" width="7" height="3.5" fill="#e8e8e8"/><rect x="126" y="563.5" width="7" height="3.5" fill="#f0f0f0"/><rect x="70" y="567" width="7" height="3.5" fill="#606060"/><rect x="77" y="567" width="3.5" height="3.5" fill="#585858"/><rect x="80.5" y="567" width="7" height="3.5" fill="#606060"/><rect x="87.5" y="567" width="3.5" height="3.5" fill="#686868"/><rect x="91" y="567" width="3.5" height="3.5" fill="#707070"/><rect x="94.5" y="567" width="3.5" height="3.5" fill="#787878"/><rect x="98" y="567" width="3.5" height="3.5" fill="#888888"/><rect x="101.5" y="567" width="3.5" height="3.5" fill="#909090"/><rect x="105" y="567" width="3.5" height="3.5" fill="#a0a0a0"/><rect x="108.5" y="567" width="3.5" height="3.5" fill="#b0b0b0"/><rect x="112" y="567" width="3.5" height="3.5" fill="#c0c0c0"/><rect x="115.5" y="567" width="3.5" height="3.5" fill="#d0d0d0"/><rect x="119" y="567" width="3.5" height="3.5" fill="#d8d8d8"/><rect x="122.5" y="567" width="3.5" height="3.5" fill="#e0e0e0"/><rect x="126" y="567" width="3.5" height="3.5" fill="#e8e8e8"/><rect x="129.5" y="567" width="7" height="3.5" fill="#f0f0f0"/><rect x="70" y="570.5" width="17.5" height="3.5" fill="#282828"/><rect x="87.5" y="570.5" width="3.5" height="3.5" fill="#303030"/><rect x="91" y="570.5" width="3.5" height="3.5" fill="#383838"/><rect x="94.5" y="570.5" width="3.5" height="3.5" fill="#484848"/><rect x="98" y="570.5" width="3.5" height="3.5" fill="#585858"/><rect x="101.5" y="570.5" width="3.5" height="3.5" fill="#686868"/><rect x="105" y="570.5" width="3.5" height="3.5" fill="#787878"/><rect x="108.5" y="570.5" width="3.5" height="3.5" fill="#909090"/><rect x="112" y="570.5" width="3.5" height="3.5" fill="#a0a0a0"/><rect x="115.5" y="570.5" width="3.5" height="3.5" fill="#b8b8b8"/><rect x="119" y="570.5" width="3.5" height="3.5" fill="#c8c8c8"/><rect x="122.5" y="570.5" width="3.5" height="3.5" fill="#d8d8d8"/><rect x="126" y="570.5" width="3.5" height="3.5" fill="#e0e0e0"/><rect x="129.5" y="570.5" width="3.5" height="3.5" fill="#e8e8e8"/><rect x="133" y="570.5" width="7" height="3.5" fill="#f0f0f0"/><rect x="70" y="574" width="17.5" height="3.5" fill="#000000"/><rect x="87.5" y="574" width="7" height="3.5" fill="#080808"/><rect x="94.5" y="574" width="3.5" height="3.5" fill="#181818"/><rect x="98" y="574" width="3.5" height="3.5" fill="#282828"/><rect x="101.5" y="574" width="3.5" height="3.5" fill="#383838"/><rect x="105" y="574" width="3.5" height="3.5" fill="#505050"/><rect x="108.5" y="574" width="3.5" height="3.5" fill="#686868"/><rect x="112" y="574" width="3.5" height="3.5" fill="#808080"/><rect x="115.5" y="574" width="3.5" height="3.5" fill="#989898"/><rect x="119" y="574" width="3.5" height="3.5" fill="#b0b0b0"/><rect x="122.5" y="574" width="3.5" height="3.5" fill="#c0c0c0"/><rect x="126" y="574" width="3.5" height="3.5" fill="#d0d0d0"/><rect x="129.5" y="574" width="3.5" height="3.5" fill="#e0e0e0"/><rect x="133" y="574" width="3.5" height="3.5" fill="#e8e8e8"/><rect x="136.5" y="574" width="3.5" height="3.5" fill="#f0f0f0"/><rect x="70" y="577.5" width="31.5" height="3.5" fill="#000000"/><rect x="101.5" y="577.5" width="3.5" height="3.5" fill="#101010"/><rect x="105" y="577.5" width="3.5" height="3.5" fill="#202020"/><rect x="108.5" y="577.5" width="3.5" height="3.5" fill="#404040"/><rect x="112" y="577.5" width="3.5" height="3.5" fill="#585858"/><rect x="115.5" y="577.5" width="3.5" height="3.5" fill="#787878"/><rect x="119" y="577.5" width="3.5" height="3.5" fill="#989898"/><rect x="122.5" y="577.5" width="3.5" height="3.5" fill="#b0b0b0"/><rect x="126" y="577.5" width="3.5" height="3.5" fill="#c8c8c8"/><rect x="129.5" y="577.5" width="3.5" height="3.5" fill="#d8d8d8"/><rect x="133" y="577.5" width="3.5" height="3.5" fill="#e0e0e0"/><rect x="136.5" y="577.5" width="3.5" height="3.5" fill="#e8e8e8"/><rect x="140" y="577.5" width="3.5" height="3.5" fill="#f0f0f0"/><rect x="70" y="581" width="38.5" height="3.5" fill="#000000"/><rect x="108.5" y="581" width="3.5" height="3.5" fill="#181818"/><rect x="112" y="581" width="3.5" height="3.5" fill="#383838"/><rect x="115.5" y="581" width="3.5" height="3.5" fill="#585858"/><rect x="119" y="581" width="3.5" height="3.5" fill="#787878"/><rect x="122.5" y="581" width="3.5" height="3.5" fill="#989898"/><rect x="126" y="581" width="3.5" height="3.5" fill="#b8b8b8"/><rect x="129.5" y="581" width="3.5" height="3.5" fill="#c8c8c8"/><rect x="133" y="581" width="3.5" height="3.5" fill="#d8d8d8"/><rect x="136.5" y="581" width="3.5" height="3.5" fill="#e8e8e8"/><rect x="140" y="581" width="7" height="3.5" fill="#f0f0f0"/><rect x="70" y="584.5" width="42" height="3.5" fill="#000000"/><rect x="112" y="584.5" width="3.5" height="3.5" fill="#181818"/><rect x="115.5" y="584.5" width="3.5" height="3.5" fill="#383838"/><rect x="119" y="584.5" width="3.5" height="3.5" fill="#606060"/><rect x="122.5" y="584.5" width="3.5" height="3.5" fill="#808080"/><rect x="126" y="584.5" width="3.5" height="3.5" fill="#a0a0a0"/><rect x="129.5" y="584.5" width="3.5" height="3.5" fill="#c0c0c0"/><rect x="133" y="584.5" width="3.5" height="3.5" fill="#d0d0d0"/><rect x="136.5" y="584.5" width="3.5" height="3.5" fill="#e0e0e0"/><rect x="140" y="584.5" width="3.5" height="3.5" fill="#e8e8e8"/><rect x="143.5" y="584.5" width="3.5" height="3.5" fill="#f0f0f0"/><rect x="70" y="588" width="45.5" height="3.5" fill="#000000"/><rect x="115.5" y="588" width="3.5" height="3.5" fill="#202020"/><rect x="119" y="588" width="3.5" height="3.5" fill="#484848"/><rect x="122.5" y="588" width="3.5" height="3.5" fill="#707070"/><rect x="126" y="588" width="3.5" height="3.5" fill="#909090"/><rect x="129.5" y="588" width="3.5" height="3.5" fill="#b0b0b0"/><rect x="133" y="588" width="3.5" height="3.5" fill="#c8c8c8"/><rect x="136.5" y="588" width="3.5" height="3.5" fill="#d8d8d8"/><rect x="140" y="588" width="3.5" height="3.5" fill="#e8e8e8"/><rect x="143.5" y="588" width="3.5" height="3.5" fill="#f0f0f0"/><rect x="70" y="591.5" width="45.5" height="3.5" fill="#000000"/><rect x="115.5" y="591.5" width="3.5" height="3.5" fill="#101010"/><rect x="119" y="591.5" width="3.5" height="3.5" fill="#303030"/><rect x="122.5" y="591.5" width="3.5" height="3.5" fill="#585858"/><rect x="126" y="591.5" width="3.5" height="3.5" fill="#808080"/><rect x="129.5" y="591.5" width="3.5" height="3.5" fill="#a8a8a8"/><rect x="133" y="591.5" width="3.5" height="3.5" fill="#c0c0c0"/><rect x="136.5" y="591.5" width="3.5" height="3.5" fill="#d8d8d8"/><rect x="140" y="591.5" width="3.5" height="3.5" fill="#e0e0e0"/><rect x="143.5" y="591.5" width="7" height="3.5" fill="#f0f0f0"/><rect x="70" y="595" width="49" height="3.5" fill="#000000"/><rect x="119" y="595" width="3.5" height="3.5" fill="#202020"/><rect x="122.5" y="595" width="3.5" height="3.5" fill="#484848"/><rect x="126" y="595" width="3.5" height="3.5" fill="#787878"/><rect x="129.5" y="595" width="3.5" height="3.5" fill="#989898"/><rect x="133" y="595" width="3.5" height="3.5" fill="#b8b8b8"/><rect x="136.5" y="595" width="3.5" height="3.5" fill="#d0d0d0"/><rect x="140" y="595" width="3.5" height="3.5" fill="#e0e0e0"/><rect x="143.5" y="595" width="3.5" height="3.5" fill="#e8e8e8"/><rect x="147" y="595" width="3.5" height="3.5" fill="#f0f0f0"/><rect x="70" y="598.5" width="49" height="3.5" fill="#000000"/><rect x="119" y="598.5" width="3.5" height="3.5" fill="#181818"/><rect x="122.5" y="598.5" width="3.5" height="3.5" fill="#404040"/><rect x="126" y="598.5" width="3.5" height="3.5" fill="#686868"/><rect x="129.5" y="598.5" width="3.5" height="3.5" fill="#909090"/><rect x="133" y="598.5" width="3.5" height="3.5" fill="#b8b8b8"/><rect x="136.5" y="598.5" width="3.5" height="3.5" fill="#d0d0d0"/><rect x="140" y="598.5" width="3.5" height="3.5" fill="#e0e0e0"/><rect x="143.5" y="598.5" width="3.5" height="3.5" fill="#e8e8e8"/><rect x="147" y="598.5" width="3.5" height="3.5" fill="#f0f0f0"/><rect x="70" y="602" width="49" height="3.5" fill="#000000"/><rect x="119" y="602" width="3.5" height="3.5" fill="#101010"/><rect x="122.5" y="602" width="3.5" height="3.5" fill="#383838"/><rect x="126" y="602" width="3.5" height="3.5" fill="#686868"/><rect x="129.5" y="602" width="3.5" height="3.5" fill="#909090"/><rect x="133" y="602" width="3.5" height="3.5" fill="#b0b0b0"/><rect x="136.5" y="602" width="3.5" height="3.5" fill="#c8c8c8"/><rect x="140" y="602" width="3.5" height="3.5" fill="#e0e0e0"/><rect x="143.5" y="602" width="3.5" height="3.5" fill="#e8e8e8"/><rect x="147" y="602" width="3.5" height="3.5" fill="#f0f0f0"/><rect x="70" y="605.5" width="49" height="3.5" fill="#000000"/><rect x="119" y="605.5" width="3.5" height="3.5" fill="#101010"/><rect x="122.5" y="605.5" width="3.5" height="3.5" fill="#383838"/><rect x="126" y="605.5" width="3.5" height="3.5" fill="#606060"/><rect x="129.5" y="605.5" width="3.5" height="3.5" fill="#888888"/><rect x="133" y="605.5" width="3.5" height="3.5" fill="#b0b0b0"/><rect x="136.5" y="605.5" width="3.5" height="3.5" fill="#c8c8c8"/><rect x="140" y="605.5" width="3.5" height="3.5" fill="#e0e0e0"/><rect x="143.5" y="605.5" width="3.5" height="3.5" fill="#e8e8e8"/><rect x="147" y="605.5" width="3.5" height="3.5" fill="#f0f0f0"/><rect x="70" y="609" width="49" height="3.5" fill="#000000"/><rect x="119" y="609" width="3.5" height="3.5" fill="#101010"/><rect x="122.5" y="609" width="3.5" height="3.5" fill="#383838"/><rect x="126" y="609" width="3.5" height="3.5" fill="#606060"/><rect x="129.5" y="609" width="3.5" height="3.5" fill="#888888"/><rect x="133" y="609" width="3.5" height="3.5" fill="#b0b0b0"/><rect x="136.5" y="609" width="3.5" height="3.5" fill="#c8c8c8"/><rect x="140" y="609" width="3.5" height="3.5" fill="#e0e0e0"/><rect x="143.5" y="609" width="3.5" height="3.5" fill="#e8e8e8"/><rect x="147" y="609" width="3.5" height="3.5" fill="#f0f0f0"/><rect x="70" y="612.5" width="49" height="3.5" fill="#000000"/><rect x="119" y="612.5" width="3.5" height="3.5" fill="#101010"/><rect x="122.5" y="612.5" width="3.5" height="3.5" fill="#383838"/><rect x="126" y="612.5" width="3.5" height="3.5" fill="#686868"/><rect x="129.5" y="612.5" width="3.5" height="3.5" fill="#909090"/><rect x="133" y="612.5" width="3.5" height="3.5" fill="#b0b0b0"/><rect x="136.5" y="612.5" width="3.5" height="3.5" fill="#c8c8c8"/><rect x="140" y="612.5" width="3.5" height="3.5" fill="#e0e0e0"/><rect x="143.5" y="612.5" width="3.5" height="3.5" fill="#e8e8e8"/><rect x="147" y="612.5" width="3.5" height="3.5" fill="#f0f0f0"/><rect x="70" y="616" width="49" height="3.5" fill="#000000"/><rect x="119" y="616" width="3.5" height="3.5" fill="#181818"/><rect x="122.5" y="616" width="3.5" height="3.5" fill="#404040"/><rect x="126" y="616" width="3.5" height="3.5" fill="#686868"/><rect x="129.5" y="616" width="3.5" height="3.5" fill="#909090"/><rect x="133" y="616" width="3.5" height="3.5" fill="#b8b8b8"/><rect x="136.5" y="616" width="3.5" height="3.5" fill="#d0d0d0"/><rect x="140" y="616" width="3.5" height="3.5" fill="#e0e0e0"/><rect x="143.5" y="616" width="3.5" height="3.5" fill="#e8e8e8"/><rect x="147" y="616" width="3.5" height="3.5" fill="#f0f0f0"/><rect x="70" y="619.5" width="49" height="3.5" fill="#000000"/><rect x="119" y="619.5" width="3.5" height="3.5" fill="#202020"/><rect x="122.5" y="619.5" width="3.5" height="3.5" fill="#484848"/><rect x="126" y="619.5" width="3.5" height="3.5" fill="#787878"/><rect x="129.5" y="619.5" width="3.5" height="3.5" fill="#989898"/><rect x="133" y="619.5" width="3.5" height="3.5" fill="#b8b8b8"/><rect x="136.5" y="619.5" width="3.5" height="3.5" fill="#d0d0d0"/><rect x="140" y="619.5" width="3.5" height="3.5" fill="#e0e0e0"/><rect x="143.5" y="619.5" width="3.5" height="3.5" fill="#e8e8e8"/><rect x="147" y="619.5" width="3.5" height="3.5" fill="#f0f0f0"/><rect x="70" y="623" width="45.5" height="3.5" fill="#000000"/><rect x="115.5" y="623" width="3.5" height="3.5" fill="#101010"/><rect x="119" y="623" width="3.5" height="3.5" fill="#303030"/><rect x="122.5" y="623" width="3.5" height="3.5" fill="#585858"/><rect x="126" y="623" width="3.5" height="3.5" fill="#808080"/><rect x="129.5" y="623" width="3.5" height="3.5" fill="#a8a8a8"/><rect x="133" y="623" width="3.5" height="3.5" fill="#c0c0c0"/><rect x="136.5" y="623" width="3.5" height="3.5" fill="#d8d8d8"/><rect x="140" y="623" width="3.5" height="3.5" fill="#e0e0e0"/><rect x="143.5" y="623" width="7" height="3.5" fill="#f0f0f0"/><rect x="70" y="626.5" width="45.5" height="3.5" fill="#000000"/><rect x="115.5" y="626.5" width="3.5" height="3.5" fill="#202020"/><rect x="119" y="626.5" width="3.5" height="3.5" fill="#484848"/><rect x="122.5" y="626.5" width="3.5" height="3.5" fill="#707070"/><rect x="126" y="626.5" width="3.5" height="3.5" fill="#909090"/><rect x="129.5" y="626.5" width="3.5" height="3.5" fill="#b0b0b0"/><rect x="133" y="626.5" width="3.5" height="3.5" fill="#c8c8c8"/><rect x="136.5" y="626.5" width="3.5" height="3.5" fill="#d8d8d8"/><rect x="140" y="626.5" width="3.5" height="3.5" fill="#e8e8e8"/><rect x="143.5" y="626.5" width="3.5" height="3.5" fill="#f0f0f0"/><rect x="70" y="630" width="42" height="3.5" fill="#000000"/><rect x="112" y="630" width="3.5" height="3.5" fill="#181818"/><rect x="115.5" y="630" width="3.5" height="3.5" fill="#383838"/><rect x="119" y="630" width="3.5" height="3.5" fill="#606060"/><rect x="122.5" y="630" width="3.5" height="3.5" fill="#808080"/><rect x="126" y="630" width="3.5" height="3.5" fill="#a0a0a0"/><rect x="129.5" y="630" width="3.5" height="3.5" fill="#c0c0c0"/><rect x="133" y="630" width="3.5" height="3.5" fill="#d0d0d0"/><rect x="136.5" y="630" width="3.5" height="3.5" fill="#e0e0e0"/><rect x="140" y="630" width="3.5" height="3.5" fill="#e8e8e8"/><rect x="143.5" y="630" width="3.5" height="3.5" fill="#f0f0f0"/><rect x="70" y="633.5" width="38.5" height="3.5" fill="#000000"/><rect x="108.5" y="633.5" width="3.5" height="3.5" fill="#181818"/><rect x="112" y="633.5" width="3.5" height="3.5" fill="#383838"/><rect x="115.5" y="633.5" width="3.5" height="3.5" fill="#585858"/><rect x="119" y="633.5" width="3.5" height="3.5" fill="#787878"/><rect x="122.5" y="633.5" width="3.5" height="3.5" fill="#989898"/><rect x="126" y="633.5" width="3.5" height="3.5" fill="#b8b8b8"/><rect x="129.5" y="633.5" width="3.5" height="3.5" fill="#c8c8c8"/><rect x="133" y="633.5" width="3.5" height="3.5" fill="#d8d8d8"/><rect x="136.5" y="633.5" width="3.5" height="3.5" fill="#e8e8e8"/><rect x="140" y="633.5" width="7" height="3.5" fill="#f0f0f0"/><rect x="70" y="637" width="31.5" height="3.5" fill="#000000"/><rect x="101.5" y="637" width="3.5" height="3.5" fill="#101010"/><rect x="105" y="637" width="3.5" height="3.5" fill="#202020"/><rect x="108.5" y="637" width="3.5" height="3.5" fill="#404040"/><rect x="112" y="637" width="3.5" height="3.5" fill="#585858"/><rect x="115.5" y="637" width="3.5" height="3.5" fill="#787878"/><rect x="119" y="637" width="3.5" height="3.5" fill="#989898"/><rect x="122.5" y="637" width="3.5" height="3.5" fill="#b0b0b0"/><rect x="126" y="637" width="3.5" height="3.5" fill="#c8c8c8"/><rect x="129.5" y="637" width="3.5" height="3.5" fill="#d8d8d8"/><rect x="133" y="637" width="3.5" height="3.5" fill="#e0e0e0"/><rect x="136.5" y="637" width="3.5" height="3.5" fill="#e8e8e8"/><rect x="140" y="637" width="3.5" height="3.5" fill="#f0f0f0"/><rect x="70" y="640.5" width="17.5" height="3.5" fill="#000000"/><rect x="87.5" y="640.5" width="7" height="3.5" fill="#080808"/><rect x="94.5" y="640.5" width="3.5" height="3.5" fill="#181818"/><rect x="98" y="640.5" width="3.5" height="3.5" fill="#282828"/><rect x="101.5" y="640.5" width="3.5" height="3.5" fill="#383838"/><rect x="105" y="640.5" width="3.5" height="3.5" fill="#505050"/><rect x="108.5" y="640.5" width="3.5" height="3.5" fill="#686868"/><rect x="112" y="640.5" width="3.5" height="3.5" fill="#808080"/><rect x="115.5" y="640.5" width="3.5" height="3.5" fill="#989898"/><rect x="119" y="640.5" width="3.5" height="3.5" fill="#b0b0b0"/><rect x="122.5" y="640.5" width="3.5" height="3.5" fill="#c0c0c0"/><rect x="126" y="640.5" width="3.5" height="3.5" fill="#d0d0d0"/><rect x="129.5" y="640.5" width="3.5" height="3.5" fill="#e0e0e0"/><rect x="133" y="640.5" width="3.5" height="3.5" fill="#e8e8e8"/><rect x="136.5" y="640.5" width="3.5" height="3.5" fill="#f0f0f0"/><rect x="70" y="644" width="17.5" height="3.5" fill="#282828"/><rect x="87.5" y="644" width="3.5" height="3.5" fill="#303030"/><rect x="91" y="644" width="3.5" height="3.5" fill="#383838"/><rect x="94.5" y="644" width="3.5" height="3.5" fill="#484848"/><rect x="98" y="644" width="3.5" height="3.5" fill="#585858"/><rect x="101.5" y="644" width="3.5" height="3.5" fill="#686868"/><rect x="105" y="644" width="3.5" height="3.5" fill="#787878"/><rect x="108.5" y="644" width="3.5" height="3.5" fill="#909090"/><rect x="112" y="644" width="3.5" height="3.5" fill="#a0a0a0"/><rect x="115.5" y="644" width="3.5" height="3.5" fill="#b8b8b8"/><rect x="119" y="644" width="3.5" height="3.5" fill="#c8c8c8"/><rect x="122.5" y="644" width="3.5" height="3.5" fill="#d8d8d8"/><rect x="126" y="644" width="3.5" height="3.5" fill="#e0e0e0"/><rect x="129.5" y="644" width="3.5" height="3.5" fill="#e8e8e8"/><rect x="133" y="644" width="7" height="3.5" fill="#f0f0f0"/><rect x="70" y="647.5" width="7" height="3.5" fill="#606060"/><rect x="77" y="647.5" width="3.5" height="3.5" fill="#585858"/><rect x="80.5" y="647.5" width="7" height="3.5" fill="#606060"/><rect x="87.5" y="647.5" width="3.5" height="3.5" fill="#686868"/><rect x="91" y="647.5" width="3.5" height="3.5" fill="#707070"/><rect x="94.5" y="647.5" width="3.5" height="3.5" fill="#787878"/><rect x="98" y="647.5" width="3.5" height="3.5" fill="#888888"/><rect x="101.5" y="647.5" width="3.5" height="3.5" fill="#909090"/><rect x="105" y="647.5" width="3.5" height="3.5" fill="#a0a0a0"/><rect x="108.5" y="647.5" width="3.5" height="3.5" fill="#b0b0b0"/><rect x="112" y="647.5" width="3.5" height="3.5" fill="#c0c0c0"/><rect x="115.5" y="647.5" width="3.5" height="3.5" fill="#d0d0d0"/><rect x="119" y="647.5" width="3.5" height="3.5" fill="#d8d8d8"/><rect x="122.5" y="647.5" width="3.5" height="3.5" fill="#e0e0e0"/><rect x="126" y="647.5" width="3.5" height="3.5" fill="#e8e8e8"/><rect x="129.5" y="647.5" width="7" height="3.5" fill="#f0f0f0"/><rect x="70" y="651" width="17.5" height="3.5" fill="#909090"/><rect x="87.5" y="651" width="7" height="3.5" fill="#989898"/><rect x="94.5" y="651" width="3.5" height="3.5" fill="#a0a0a0"/><rect x="98" y="651" width="3.5" height="3.5" fill="#b0b0b0"/><rect x="101.5" y="651" width="3.5" height="3.5" fill="#b8b8b8"/><rect x="105" y="651" width="3.5" height="3.5" fill="#c0c0c0"/><rect x="108.5" y="651" width="3.5" height="3.5" fill="#c8c8c8"/><rect x="112" y="651" width="3.5" height="3.5" fill="#d8d8d8"/><rect x="115.5" y="651" width="3.5" height="3.5" fill="#e0e0e0"/><rect x="119" y="651" width="7" height="3.5" fill="#e8e8e8"/><rect x="126" y="651" width="7" height="3.5" fill="#f0f0f0"/><rect x="70" y="654.5" width="21" height="3.5" fill="#b8b8b8"/><rect x="91" y="654.5" width="3.5" height="3.5" fill="#c0c0c0"/><rect x="94.5" y="654.5" width="7" height="3.5" fill="#c8c8c8"/><rect x="101.5" y="654.5" width="3.5" height="3.5" fill="#d0d0d0"/><rect x="105" y="654.5" width="3.5" height="3.5" fill="#d8d8d8"/><rect x="108.5" y="654.5" width="7" height="3.5" fill="#e0e0e0"/><rect x="115.5" y="654.5" width="3.5" height="3.5" fill="#e8e8e8"/><rect x="119" y="654.5" width="7" height="3.5" fill="#f0f0f0"/><rect x="70" y="658" width="3.5" height="3.5" fill="#d8d8d8"/><rect x="73.5" y="658" width="10.5" height="3.5" fill="#d0d0d0"/><rect x="84" y="658" width="14" height="3.5" fill="#d8d8d8"/><rect x="98" y="658" width="7" height="3.5" fill="#e0e0e0"/><rect x="105" y="658" width="7" height="3.5" fill="#e8e8e8"/><rect x="112" y="658" width="10.5" height="3.5" fill="#f0f0f0"/><rect x="70" y="661.5" width="31.5" height="3.5" fill="#e8e8e8"/><rect x="101.5" y="661.5" width="14" height="3.5" fill="#f0f0f0"/><rect x="70" y="665" width="31.5" height="3.5" fill="#f0f0f0"/>
</g>
<circle cx="112.7" cy="562.7" r="11.6" fill="none" stroke="#666" stroke-width="1.1"/>
<circle cx="135.8" cy="561.1" r="11.6" fill="none" stroke="#666" stroke-width="1.1"/>
<circle cx="159.7" cy="559.5" r="11.6" fill="none" stroke="#666" stroke-width="1.1"/>
<circle cx="125.4" cy="581" r="11.6" fill="none" stroke="#666" stroke-width="1.1"/>
<circle cx="149.3" cy="578.6" r="11.6" fill="none" stroke="#666" stroke-width="1.1"/>
<circle cx="172.5" cy="577.8" r="11.6" fill="none" stroke="#666" stroke-width="1.1"/>
<circle cx="101.5" cy="584.2" r="11.6" fill="none" stroke="#666" stroke-width="1.1"/>
<circle cx="186.8" cy="597.8" r="11.6" fill="none" stroke="#666" stroke-width="1.1"/>
<circle cx="115" cy="604.2" r="11.6" fill="none" stroke="#666" stroke-width="1.1"/>
<circle cx="91.9" cy="605" r="11.6" fill="none" stroke="#666" stroke-width="1.1"/>
<circle cx="175.7" cy="619.3" r="11.6" fill="none" stroke="#666" stroke-width="1.1"/>
<circle cx="103.9" cy="624.9" r="11.6" fill="none" stroke="#666" stroke-width="1.1"/>
<circle cx="119" cy="644" r="11.6" fill="none" stroke="#666" stroke-width="1.1"/>
<circle cx="142.2" cy="642.4" r="11.6" fill="none" stroke="#666" stroke-width="1.1"/>
<circle cx="166.1" cy="641.6" r="11.6" fill="none" stroke="#666" stroke-width="1.1"/>
<circle cx="190" cy="638.5" r="11.6" fill="none" stroke="#666" stroke-width="1.1"/>
<circle cx="139" cy="601" r="11.6" fill="none" stroke="#0000ff" stroke-width="1.5"/>
<circle cx="162.9" cy="600.2" r="11.6" fill="none" stroke="#ffa500" stroke-width="1.5"/>
<circle cx="129.4" cy="624.1" r="11.6" fill="none" stroke="#ff0000" stroke-width="1.5"/>
<circle cx="153.3" cy="620.9" r="11.6" fill="none" stroke="#00ff00" stroke-width="1.5"/>
<rect x="95.7" y="558.9" width="96.6" height="96" fill="none" stroke="#ff0000" stroke-width="1.2"/>
<path d="M140 606.4H148M144 602.4V610.4" stroke="#ff0000" stroke-width="1.3"/>
<text class="s" x="144" y="546.9" font-size="10" text-anchor="middle" fill="#ff0000" stroke="#ff0000" stroke-width="0.12">N</text>
<text class="s" x="81.5" y="610.5" font-size="10" text-anchor="middle" fill="#ff0000" stroke="#ff0000" stroke-width="0.12">E</text>
</g>
<rect x="70.1" y="532.9" width="148.4" height="147.7" fill="none" stroke="#222" stroke-width="1.2"/>
<line x1="79.8" y1="680.6" x2="79.8" y2="684.1" stroke="#222" stroke-width="0.9"/>
<line x1="66.6" y1="670.9" x2="70.1" y2="670.9" stroke="#222" stroke-width="0.9"/>
<text class="s" x="77.2" y="696.1" font-size="10" text-anchor="middle" fill="#111" textLength="13.5" lengthAdjust="spacingAndGlyphs" stroke="#111" stroke-width="0.12">−4</text>
<text class="s" x="62.5" y="674.5" font-size="10" text-anchor="end" fill="#111" textLength="13.5" lengthAdjust="spacingAndGlyphs" stroke="#111" stroke-width="0.12">−4</text>
<line x1="111.9" y1="680.6" x2="111.9" y2="684.1" stroke="#222" stroke-width="0.9"/>
<line x1="66.6" y1="638.9" x2="70.1" y2="638.9" stroke="#222" stroke-width="0.9"/>
<text class="s" x="109.3" y="696.1" font-size="10" text-anchor="middle" fill="#111" textLength="13.5" lengthAdjust="spacingAndGlyphs" stroke="#111" stroke-width="0.12">−2</text>
<text class="s" x="62.5" y="642.5" font-size="10" text-anchor="end" fill="#111" textLength="13.5" lengthAdjust="spacingAndGlyphs" stroke="#111" stroke-width="0.12">−2</text>
<line x1="144" y1="680.6" x2="144" y2="684.1" stroke="#222" stroke-width="0.9"/>
<line x1="66.6" y1="606.9" x2="70.1" y2="606.9" stroke="#222" stroke-width="0.9"/>
<text class="s" x="144" y="696.1" font-size="10" text-anchor="middle" fill="#111" textLength="6.2" lengthAdjust="spacingAndGlyphs" stroke="#111" stroke-width="0.12">0</text>
<text class="s" x="62.5" y="610.5" font-size="10" text-anchor="end" fill="#111" textLength="6.2" lengthAdjust="spacingAndGlyphs" stroke="#111" stroke-width="0.12">0</text>
<line x1="176.1" y1="680.6" x2="176.1" y2="684.1" stroke="#222" stroke-width="0.9"/>
<line x1="66.6" y1="574.9" x2="70.1" y2="574.9" stroke="#222" stroke-width="0.9"/>
<text class="s" x="176.1" y="696.1" font-size="10" text-anchor="middle" fill="#111" textLength="6.2" lengthAdjust="spacingAndGlyphs" stroke="#111" stroke-width="0.12">2</text>
<text class="s" x="62.5" y="578.5" font-size="10" text-anchor="end" fill="#111" textLength="6.2" lengthAdjust="spacingAndGlyphs" stroke="#111" stroke-width="0.12">2</text>
<line x1="208.2" y1="680.6" x2="208.2" y2="684.1" stroke="#222" stroke-width="0.9"/>
<line x1="66.6" y1="542.9" x2="70.1" y2="542.9" stroke="#222" stroke-width="0.9"/>
<text class="s" x="208.2" y="696.1" font-size="10" text-anchor="middle" fill="#111" textLength="6.2" lengthAdjust="spacingAndGlyphs" stroke="#111" stroke-width="0.12">4</text>
<text class="s" x="62.5" y="546.5" font-size="10" text-anchor="end" fill="#111" textLength="6.2" lengthAdjust="spacingAndGlyphs" stroke="#111" stroke-width="0.12">4</text>
<text class="s" x="143.7" y="706.3" font-size="10" text-anchor="middle" fill="#111" textLength="40" lengthAdjust="spacingAndGlyphs" stroke="#111" stroke-width="0.12">arcsecs</text>
<text class="s" x="328.7" y="525.4" font-size="12.7" text-anchor="middle" fill="#111" textLength="82" lengthAdjust="spacingAndGlyphs" stroke="#111" stroke-width="0.12">Lineflux Map</text>
<g clip-path="url(#p2)">
<g shape-rendering="crispEdges">
<rect x="255" y="532" width="24" height="3" fill="#433b82"/><rect x="279" y="532" width="12" height="3" fill="#44367f"/><rect x="291" y="532" width="21" height="3" fill="#45317c"/><rect x="312" y="532" width="27" height="3" fill="#462c7a"/><rect x="339" y="532" width="66" height="3" fill="#472777"/><rect x="255" y="535" width="27" height="3" fill="#433b82"/><rect x="282" y="535" width="12" height="3" fill="#44367f"/><rect x="294" y="535" width="21" height="3" fill="#45317c"/><rect x="315" y="535" width="21" height="3" fill="#462c7a"/><rect x="336" y="535" width="69" height="3" fill="#472777"/><rect x="255" y="538" width="3" height="3" fill="#433b82"/><rect x="258" y="538" width="12" height="3" fill="#424085"/><rect x="270" y="538" width="15" height="3" fill="#433b82"/><rect x="285" y="538" width="12" height="3" fill="#44367f"/><rect x="297" y="538" width="18" height="3" fill="#45317c"/><rect x="315" y="538" width="21" height="3" fill="#462c7a"/><rect x="336" y="538" width="69" height="3" fill="#472777"/><rect x="255" y="541" width="21" height="3" fill="#424085"/><rect x="276" y="541" width="9" height="3" fill="#433b82"/><rect x="285" y="541" width="12" height="3" fill="#44367f"/><rect x="297" y="541" width="18" height="3" fill="#45317c"/><rect x="315" y="541" width="21" height="3" fill="#462c7a"/><rect x="336" y="541" width="69" height="3" fill="#472777"/><rect x="255" y="544" width="24" height="3" fill="#424085"/><rect x="279" y="544" width="9" height="3" fill="#433b82"/><rect x="288" y="544" width="12" height="3" fill="#44367f"/><rect x="300" y="544" width="18" height="3" fill="#45317c"/><rect x="318" y="544" width="15" height="3" fill="#462c7a"/><rect x="333" y="544" width="72" height="3" fill="#472777"/><rect x="255" y="547" width="6" height="3" fill="#424085"/><rect x="261" y="547" width="9" height="3" fill="#414587"/><rect x="270" y="547" width="12" height="3" fill="#424085"/><rect x="282" y="547" width="9" height="3" fill="#433b82"/><rect x="291" y="547" width="12" height="3" fill="#44367f"/><rect x="303" y="547" width="15" height="3" fill="#45317c"/><rect x="318" y="547" width="15" height="3" fill="#462c7a"/><rect x="333" y="547" width="18" height="3" fill="#472777"/><rect x="351" y="547" width="18" height="3" fill="#482273"/><rect x="369" y="547" width="36" height="3" fill="#472777"/><rect x="255" y="550" width="21" height="3" fill="#414587"/><rect x="276" y="550" width="9" height="3" fill="#424085"/><rect x="285" y="550" width="9" height="3" fill="#433b82"/><rect x="294" y="550" width="9" height="3" fill="#44367f"/><rect x="303" y="550" width="15" height="3" fill="#45317c"/><rect x="318" y="550" width="15" height="3" fill="#462c7a"/><rect x="333" y="550" width="15" height="3" fill="#472777"/><rect x="348" y="550" width="24" height="3" fill="#482273"/><rect x="372" y="550" width="33" height="3" fill="#472777"/><rect x="255" y="553" width="24" height="3" fill="#414587"/><rect x="279" y="553" width="9" height="3" fill="#424085"/><rect x="288" y="553" width="9" height="3" fill="#433b82"/><rect x="297" y="553" width="9" height="3" fill="#44367f"/><rect x="306" y="553" width="15" height="3" fill="#45317c"/><rect x="321" y="553" width="12" height="3" fill="#462c7a"/><rect x="333" y="553" width="12" height="3" fill="#472777"/><rect x="345" y="553" width="30" height="3" fill="#482273"/><rect x="375" y="553" width="30" height="3" fill="#472777"/><rect x="255" y="556" width="6" height="3" fill="#414587"/><rect x="261" y="556" width="9" height="3" fill="#3f4988"/><rect x="270" y="556" width="12" height="3" fill="#414587"/><rect x="282" y="556" width="9" height="3" fill="#424085"/><rect x="291" y="556" width="6" height="3" fill="#433b82"/><rect x="297" y="556" width="12" height="3" fill="#44367f"/><rect x="309" y="556" width="12" height="3" fill="#45317c"/><rect x="321" y="556" width="12" height="3" fill="#462c7a"/><rect x="333" y="556" width="12" height="3" fill="#472777"/><rect x="345" y="556" width="33" height="3" fill="#482273"/><rect x="378" y="556" width="27" height="3" fill="#472777"/><rect x="255" y="559" width="3" height="3" fill="#414587"/><rect x="258" y="559" width="24" height="3" fill="#3f4988"/><rect x="282" y="559" width="6" height="3" fill="#414587"/><rect x="288" y="559" width="6" height="3" fill="#424085"/><rect x="294" y="559" width="6" height="3" fill="#433b82"/><rect x="300" y="559" width="12" height="3" fill="#44367f"/><rect x="312" y="559" width="12" height="3" fill="#45317c"/><rect x="324" y="559" width="9" height="3" fill="#462c7a"/><rect x="333" y="559" width="9" height="3" fill="#472777"/><rect x="342" y="559" width="36" height="3" fill="#482273"/><rect x="378" y="559" width="27" height="3" fill="#472777"/><rect x="255" y="562" width="6" height="3" fill="#3f4988"/><rect x="261" y="562" width="18" height="3" fill="#3d4d89"/><rect x="279" y="562" width="6" height="3" fill="#3f4988"/><rect x="285" y="562" width="6" height="3" fill="#414587"/><rect x="291" y="562" width="6" height="3" fill="#424085"/><rect x="297" y="562" width="6" height="3" fill="#433b82"/><rect x="303" y="562" width="12" height="3" fill="#44367f"/><rect x="315" y="562" width="9" height="3" fill="#45317c"/><rect x="324" y="562" width="9" height="3" fill="#462c7a"/><rect x="333" y="562" width="9" height="3" fill="#472777"/><rect x="342" y="562" width="39" height="3" fill="#482273"/><rect x="381" y="562" width="24" height="3" fill="#472777"/><rect x="255" y="565" width="6" height="3" fill="#3d4d89"/><rect x="261" y="565" width="21" height="3" fill="#3b528a"/><rect x="282" y="565" width="3" height="3" fill="#3d4d89"/><rect x="285" y="565" width="6" height="3" fill="#3f4988"/><rect x="291" y="565" width="3" height="3" fill="#414587"/><rect x="294" y="565" width="6" height="3" fill="#424085"/><rect x="300" y="565" width="6" height="3" fill="#433b82"/><rect x="306" y="565" width="9" height="3" fill="#44367f"/><rect x="315" y="565" width="12" height="3" fill="#45317c"/><rect x="327" y="565" width="9" height="3" fill="#462c7a"/><rect x="336" y="565" width="9" height="3" fill="#472777"/><rect x="345" y="565" width="36" height="3" fill="#482273"/><rect x="381" y="565" width="24" height="3" fill="#472777"/><rect x="255" y="568" width="3" height="3" fill="#3d4d89"/><rect x="258" y="568" width="3" height="3" fill="#3b528a"/><rect x="261" y="568" width="15" height="3" fill="#39568b"/><rect x="276" y="568" width="6" height="3" fill="#375a8c"/><rect x="282" y="568" width="6" height="3" fill="#3b528a"/><rect x="288" y="568" width="3" height="3" fill="#3d4d89"/><rect x="291" y="568" width="3" height="3" fill="#3f4988"/><rect x="294" y="568" width="3" height="3" fill="#414587"/><rect x="297" y="568" width="6" height="3" fill="#424085"/><rect x="303" y="568" width="6" height="3" fill="#433b82"/><rect x="309" y="568" width="9" height="3" fill="#44367f"/><rect x="318" y="568" width="12" height="3" fill="#45317c"/><rect x="330" y="568" width="6" height="3" fill="#462c7a"/><rect x="336" y="568" width="9" height="3" fill="#472777"/><rect x="345" y="568" width="36" height="3" fill="#482273"/><rect x="381" y="568" width="24" height="3" fill="#472777"/><rect x="255" y="571" width="3" height="3" fill="#39568b"/><rect x="258" y="571" width="3" height="3" fill="#375a8c"/><rect x="261" y="571" width="6" height="3" fill="#355e8d"/><rect x="267" y="571" width="15" height="3" fill="#34628d"/><rect x="282" y="571" width="3" height="3" fill="#355e8d"/><rect x="285" y="571" width="3" height="3" fill="#39568b"/><rect x="288" y="571" width="3" height="3" fill="#3b528a"/><rect x="291" y="571" width="3" height="3" fill="#3d4d89"/><rect x="294" y="571" width="3" height="3" fill="#3f4988"/><rect x="297" y="571" width="6" height="3" fill="#414587"/><rect x="303" y="571" width="3" height="3" fill="#424085"/><rect x="306" y="571" width="9" height="3" fill="#433b82"/><rect x="315" y="571" width="9" height="3" fill="#44367f"/><rect x="324" y="571" width="9" height="3" fill="#45317c"/><rect x="333" y="571" width="6" height="3" fill="#462c7a"/><rect x="339" y="571" width="9" height="3" fill="#472777"/><rect x="348" y="571" width="30" height="3" fill="#482273"/><rect x="378" y="571" width="27" height="3" fill="#472777"/><rect x="255" y="574" width="3" height="3" fill="#375a8c"/><rect x="258" y="574" width="3" height="3" fill="#34628d"/><rect x="261" y="574" width="3" height="3" fill="#32668d"/><rect x="264" y="574" width="3" height="3" fill="#306a8d"/><rect x="267" y="574" width="6" height="3" fill="#2e6e8e"/><rect x="273" y="574" width="9" height="3" fill="#2d728e"/><rect x="282" y="574" width="3" height="3" fill="#306a8d"/><rect x="285" y="574" width="3" height="3" fill="#34628d"/><rect x="288" y="574" width="3" height="3" fill="#375a8c"/><rect x="291" y="574" width="3" height="3" fill="#39568b"/><rect x="294" y="574" width="3" height="3" fill="#3d4d89"/><rect x="297" y="574" width="6" height="3" fill="#3f4988"/><rect x="303" y="574" width="3" height="3" fill="#414587"/><rect x="306" y="574" width="6" height="3" fill="#424085"/><rect x="312" y="574" width="6" height="3" fill="#433b82"/><rect x="318" y="574" width="9" height="3" fill="#44367f"/><rect x="327" y="574" width="9" height="3" fill="#45317c"/><rect x="336" y="574" width="6" height="3" fill="#462c7a"/><rect x="342" y="574" width="9" height="3" fill="#472777"/><rect x="351" y="574" width="27" height="3" fill="#482273"/><rect x="378" y="574" width="27" height="3" fill="#472777"/><rect x="255" y="577" width="3" height="3" fill="#34628d"/><rect x="258" y="577" width="3" height="3" fill="#306a8d"/><rect x="261" y="577" width="3" height="3" fill="#2b768e"/><rect x="264" y="577" width="3" height="3" fill="#287d8e"/><rect x="267" y="577" width="3" height="3" fill="#27818d"/><rect x="270" y="577" width="6" height="3" fill="#25858d"/><rect x="276" y="577" width="3" height="3" fill="#24898d"/><rect x="279" y="577" width="3" height="3" fill="#228d8c"/><rect x="282" y="577" width="3" height="3" fill="#297a8e"/><rect x="285" y="577" width="3" height="3" fill="#2e6e8e"/><rect x="288" y="577" width="3" height="3" fill="#32668d"/><rect x="291" y="577" width="3" height="3" fill="#355e8d"/><rect x="294" y="577" width="3" height="3" fill="#39568b"/><rect x="297" y="577" width="3" height="3" fill="#3b528a"/><rect x="300" y="577" width="3" height="3" fill="#3d4d89"/><rect x="303" y="577" width="3" height="3" fill="#3f4988"/><rect x="306" y="577" width="3" height="3" fill="#414587"/><rect x="309" y="577" width="6" height="3" fill="#424085"/><rect x="315" y="577" width="9" height="3" fill="#433b82"/><rect x="324" y="577" width="6" height="3" fill="#44367f"/><rect x="330" y="577" width="9" height="3" fill="#45317c"/><rect x="339" y="577" width="6" height="3" fill="#462c7a"/><rect x="345" y="577" width="9" height="3" fill="#472777"/><rect x="354" y="577" width="21" height="3" fill="#482273"/><rect x="375" y="577" width="30" height="3" fill="#472777"/><rect x="255" y="580" width="3" height="3" fill="#306a8d"/><rect x="258" y="580" width="3" height="3" fill="#297a8e"/><rect x="261" y="580" width="3" height="3" fill="#24898d"/><rect x="264" y="580" width="3" height="3" fill="#21988a"/><rect x="267" y="580" width="3" height="3" fill="#229f87"/><rect x="270" y="580" width="3" height="3" fill="#22a386"/><rect x="273" y="580" width="3" height="3" fill="#22a784"/><rect x="276" y="580" width="3" height="3" fill="#25aa82"/><rect x="279" y="580" width="3" height="3" fill="#2bae7f"/><rect x="282" y="580" width="3" height="3" fill="#21918c"/><rect x="285" y="580" width="3" height="3" fill="#27818d"/><rect x="288" y="580" width="3" height="3" fill="#2b768e"/><rect x="291" y="580" width="3" height="3" fill="#306a8d"/><rect x="294" y="580" width="3" height="3" fill="#34628d"/><rect x="297" y="580" width="3" height="3" fill="#375a8c"/><rect x="300" y="580" width="3" height="3" fill="#3b528a"/><rect x="303" y="580" width="3" height="3" fill="#3d4d89"/><rect x="306" y="580" width="3" height="3" fill="#3f4988"/><rect x="309" y="580" width="3" height="3" fill="#414587"/><rect x="312" y="580" width="9" height="3" fill="#424085"/><rect x="321" y="580" width="6" height="3" fill="#433b82"/><rect x="327" y="580" width="9" height="3" fill="#44367f"/><rect x="336" y="580" width="6" height="3" fill="#45317c"/><rect x="342" y="580" width="6" height="3" fill="#462c7a"/><rect x="348" y="580" width="12" height="3" fill="#472777"/><rect x="360" y="580" width="12" height="3" fill="#482273"/><rect x="372" y="580" width="33" height="3" fill="#472777"/><rect x="255" y="583" width="3" height="3" fill="#297a8e"/><rect x="258" y="583" width="3" height="3" fill="#24898d"/><rect x="261" y="583" width="3" height="3" fill="#229f87"/><rect x="264" y="583" width="3" height="3" fill="#40bc72"/><rect x="267" y="583" width="3" height="3" fill="#57c565"/><rect x="270" y="583" width="3" height="3" fill="#67cb5c"/><rect x="273" y="583" width="9" height="3" fill="#78d052"/><rect x="282" y="583" width="3" height="3" fill="#30b17c"/><rect x="285" y="583" width="3" height="3" fill="#219c88"/><rect x="288" y="583" width="3" height="3" fill="#24898d"/><rect x="291" y="583" width="3" height="3" fill="#287d8e"/><rect x="294" y="583" width="3" height="3" fill="#2d728e"/><rect x="297" y="583" width="3" height="3" fill="#34628d"/><rect x="300" y="583" width="3" height="3" fill="#375a8c"/><rect x="303" y="583" width="3" height="3" fill="#3b528a"/><rect x="306" y="583" width="3" height="3" fill="#3d4d89"/><rect x="309" y="583" width="3" height="3" fill="#3f4988"/><rect x="312" y="583" width="6" height="3" fill="#414587"/><rect x="318" y="583" width="6" height="3" fill="#424085"/><rect x="324" y="583" width="9" height="3" fill="#433b82"/><rect x="333" y="583" width="6" height="3" fill="#44367f"/><rect x="339" y="583" width="6" height="3" fill="#45317c"/><rect x="345" y="583" width="6" height="3" fill="#462c7a"/><rect x="351" y="583" width="54" height="3" fill="#472777"/><rect x="255" y="586" width="3" height="3" fill="#24898d"/><rect x="258" y="586" width="3" height="3" fill="#229f87"/><rect x="261" y="586" width="3" height="3" fill="#46c06f"/><rect x="264" y="586" width="21" height="3" fill="#fde725"/><rect x="285" y="586" width="3" height="3" fill="#46c06f"/><rect x="288" y="586" width="3" height="3" fill="#25aa82"/><rect x="291" y="586" width="3" height="3" fill="#21958b"/><rect x="294" y="586" width="3" height="3" fill="#27818d"/><rect x="297" y="586" width="3" height="3" fill="#2d728e"/><rect x="300" y="586" width="3" height="3" fill="#32668d"/><rect x="303" y="586" width="3" height="3" fill="#375a8c"/><rect x="306" y="586" width="3" height="3" fill="#39568b"/><rect x="309" y="586" width="6" height="3" fill="#3d4d89"/><rect x="315" y="586" width="3" height="3" fill="#3f4988"/><rect x="318" y="586" width="6" height="3" fill="#414587"/><rect x="324" y="586" width="6" height="3" fill="#424085"/><rect x="330" y="586" width="6" height="3" fill="#433b82"/><rect x="336" y="586" width="6" height="3" fill="#44367f"/><rect x="342" y="586" width="6" height="3" fill="#45317c"/><rect x="348" y="586" width="6" height="3" fill="#462c7a"/><rect x="354" y="586" width="51" height="3" fill="#472777"/><rect x="255" y="589" width="3" height="3" fill="#22a386"/><rect x="258" y="589" width="3" height="3" fill="#46c06f"/><rect x="261" y="589" width="30" height="3" fill="#fde725"/><rect x="291" y="589" width="3" height="3" fill="#30b17c"/><rect x="294" y="589" width="3" height="3" fill="#21958b"/><rect x="297" y="589" width="3" height="3" fill="#27818d"/><rect x="300" y="589" width="3" height="3" fill="#2d728e"/><rect x="303" y="589" width="3" height="3" fill="#32668d"/><rect x="306" y="589" width="3" height="3" fill="#355e8d"/><rect x="309" y="589" width="3" height="3" fill="#39568b"/><rect x="312" y="589" width="3" height="3" fill="#3b528a"/><rect x="315" y="589" width="3" height="3" fill="#3d4d89"/><rect x="318" y="589" width="6" height="3" fill="#3f4988"/><rect x="324" y="589" width="6" height="3" fill="#414587"/><rect x="330" y="589" width="6" height="3" fill="#424085"/><rect x="336" y="589" width="3" height="3" fill="#433b82"/><rect x="339" y="589" width="6" height="3" fill="#44367f"/><rect x="345" y="589" width="6" height="3" fill="#45317c"/><rect x="351" y="589" width="9" height="3" fill="#462c7a"/><rect x="360" y="589" width="45" height="3" fill="#472777"/><rect x="255" y="592" width="3" height="3" fill="#46c06f"/><rect x="258" y="592" width="36" height="3" fill="#fde725"/><rect x="294" y="592" width="3" height="3" fill="#30b17c"/><rect x="297" y="592" width="3" height="3" fill="#21988a"/><rect x="300" y="592" width="3" height="3" fill="#27818d"/><rect x="303" y="592" width="3" height="3" fill="#2d728e"/><rect x="306" y="592" width="3" height="3" fill="#32668d"/><rect x="309" y="592" width="3" height="3" fill="#355e8d"/><rect x="312" y="592" width="3" height="3" fill="#39568b"/><rect x="315" y="592" width="3" height="3" fill="#3b528a"/><rect x="318" y="592" width="3" height="3" fill="#3d4d89"/><rect x="321" y="592" width="6" height="3" fill="#3f4988"/><rect x="327" y="592" width="6" height="3" fill="#414587"/><rect x="333" y="592" width="6" height="3" fill="#424085"/><rect x="339" y="592" width="3" height="3" fill="#433b82"/><rect x="342" y="592" width="6" height="3" fill="#44367f"/><rect x="348" y="592" width="6" height="3" fill="#45317c"/><rect x="354" y="592" width="9" height="3" fill="#462c7a"/><rect x="363" y="592" width="42" height="3" fill="#472777"/><rect x="255" y="595" width="42" height="3" fill="#fde725"/><rect x="297" y="595" width="3" height="3" fill="#30b17c"/><rect x="300" y="595" width="3" height="3" fill="#21988a"/><rect x="303" y="595" width="3" height="3" fill="#27818d"/><rect x="306" y="595" width="3" height="3" fill="#2d728e"/><rect x="309" y="595" width="3" height="3" fill="#32668d"/><rect x="312" y="595" width="3" height="3" fill="#355e8d"/><rect x="315" y="595" width="3" height="3" fill="#39568b"/><rect x="318" y="595" width="3" height="3" fill="#3b528a"/><rect x="321" y="595" width="6" height="3" fill="#3d4d89"/><rect x="327" y="595" width="6" height="3" fill="#3f4988"/><rect x="333" y="595" width="3" height="3" fill="#414587"/><rect x="336" y="595" width="6" height="3" fill="#424085"/><rect x="342" y="595" width="3" height="3" fill="#433b82"/><rect x="345" y="595" width="6" height="3" fill="#44367f"/><rect x="351" y="595" width="6" height="3" fill="#45317c"/><rect x="357" y="595" width="9" height="3" fill="#462c7a"/><rect x="366" y="595" width="39" height="3" fill="#472777"/><rect x="255" y="598" width="45" height="3" fill="#fde725"/><rect x="300" y="598" width="3" height="3" fill="#35b579"/><rect x="303" y="598" width="3" height="3" fill="#21958b"/><rect x="306" y="598" width="3" height="3" fill="#287d8e"/><rect x="309" y="598" width="3" height="3" fill="#2e6e8e"/><rect x="312" y="598" width="3" height="3" fill="#32668d"/><rect x="315" y="598" width="3" height="3" fill="#355e8d"/><rect x="318" y="598" width="3" height="3" fill="#39568b"/><rect x="321" y="598" width="6" height="3" fill="#3b528a"/><rect x="327" y="598" width="3" height="3" fill="#3d4d89"/><rect x="330" y="598" width="6" height="3" fill="#3f4988"/><rect x="336" y="598" width="3" height="3" fill="#414587"/><rect x="339" y="598" width="3" height="3" fill="#424085"/><rect x="342" y="598" width="6" height="3" fill="#433b82"/><rect x="348" y="598" width="3" height="3" fill="#44367f"/><rect x="351" y="598" width="6" height="3" fill="#45317c"/><rect x="357" y="598" width="12" height="3" fill="#462c7a"/><rect x="369" y="598" width="36" height="3" fill="#472777"/><rect x="255" y="601" width="48" height="3" fill="#fde725"/><rect x="303" y="601" width="3" height="3" fill="#25aa82"/><rect x="306" y="601" width="3" height="3" fill="#228d8c"/><rect x="309" y="601" width="3" height="3" fill="#297a8e"/><rect x="312" y="601" width="3" height="3" fill="#2e6e8e"/><rect x="315" y="601" width="3" height="3" fill="#34628d"/><rect x="318" y="601" width="3" height="3" fill="#355e8d"/><rect x="321" y="601" width="3" height="3" fill="#39568b"/><rect x="324" y="601" width="6" height="3" fill="#3b528a"/><rect x="330" y="601" width="3" height="3" fill="#3d4d89"/><rect x="333" y="601" width="3" height="3" fill="#3f4988"/><rect x="336" y="601" width="6" height="3" fill="#414587"/><rect x="342" y="601" width="3" height="3" fill="#424085"/><rect x="345" y="601" width="3" height="3" fill="#433b82"/><rect x="348" y="601" width="6" height="3" fill="#44367f"/><rect x="354" y="601" width="6" height="3" fill="#45317c"/><rect x="360" y="601" width="12" height="3" fill="#462c7a"/><rect x="372" y="601" width="33" height="3" fill="#472777"/><rect x="255" y="604" width="48" height="3" fill="#fde725"/><rect x="303" y="604" width="3" height="3" fill="#4ec26a"/><rect x="306" y="604" width="3" height="3" fill="#229f87"/><rect x="309" y="604" width="3" height="3" fill="#24898d"/><rect x="312" y="604" width="3" height="3" fill="#2b768e"/><rect x="315" y="604" width="3" height="3" fill="#306a8d"/><rect x="318" y="604" width="3" height="3" fill="#34628d"/><rect x="321" y="604" width="3" height="3" fill="#375a8c"/><rect x="324" y="604" width="3" height="3" fill="#39568b"/><rect x="327" y="604" width="3" height="3" fill="#3b528a"/><rect x="330" y="604" width="6" height="3" fill="#3d4d89"/><rect x="336" y="604" width="3" height="3" fill="#3f4988"/><rect x="339" y="604" width="3" height="3" fill="#414587"/><rect x="342" y="604" width="3" height="3" fill="#424085"/><rect x="345" y="604" width="3" height="3" fill="#433b82"/><rect x="348" y="604" width="6" height="3" fill="#44367f"/><rect x="354" y="604" width="6" height="3" fill="#45317c"/><rect x="360" y="604" width="15" height="3" fill="#462c7a"/><rect x="375" y="604" width="30" height="3" fill="#472777"/><rect x="255" y="607" width="51" height="3" fill="#fde725"/><rect x="306" y="607" width="3" height="3" fill="#3ab976"/><rect x="309" y="607" width="3" height="3" fill="#21988a"/><rect x="312" y="607" width="3" height="3" fill="#27818d"/><rect x="315" y="607" width="3" height="3" fill="#2d728e"/><rect x="318" y="607" width="3" height="3" fill="#32668d"/><rect x="321" y="607" width="3" height="3" fill="#355e8d"/><rect x="324" y="607" width="3" height="3" fill="#375a8c"/><rect x="327" y="607" width="3" height="3" fill="#39568b"/><rect x="330" y="607" width="3" height="3" fill="#3b528a"/><rect x="333" y="607" width="3" height="3" fill="#3d4d89"/><rect x="336" y="607" width="3" height="3" fill="#3f4988"/><rect x="339" y="607" width="3" height="3" fill="#414587"/><rect x="342" y="607" width="3" height="3" fill="#424085"/><rect x="345" y="607" width="3" height="3" fill="#433b82"/><rect x="348" y="607" width="6" height="3" fill="#44367f"/><rect x="354" y="607" width="6" height="3" fill="#45317c"/><rect x="360" y="607" width="18" height="3" fill="#462c7a"/><rect x="378" y="607" width="27" height="3" fill="#472777"/><rect x="255" y="610" width="54" height="3" fill="#fde725"/><rect x="309" y="610" width="3" height="3" fill="#2bae7f"/><rect x="312" y="610" width="3" height="3" fill="#21918c"/><rect x="315" y="610" width="3" height="3" fill="#287d8e"/><rect x="318" y="610" width="3" height="3" fill="#2e6e8e"/><rect x="321" y="610" width="3" height="3" fill="#32668d"/><rect x="324" y="610" width="3" height="3" fill="#355e8d"/><rect x="327" y="610" width="3" height="3" fill="#39568b"/><rect x="330" y="610" width="3" height="3" fill="#3b528a"/><rect x="333" y="610" width="3" height="3" fill="#3d4d89"/><rect x="336" y="610" width="3" height="3" fill="#3f4988"/><rect x="339" y="610" width="3" height="3" fill="#414587"/><rect x="342" y="610" width="3" height="3" fill="#424085"/><rect x="345" y="610" width="3" height="3" fill="#433b82"/><rect x="348" y="610" width="6" height="3" fill="#44367f"/><rect x="354" y="610" width="6" height="3" fill="#45317c"/><rect x="360" y="610" width="18" height="3" fill="#462c7a"/><rect x="378" y="610" width="27" height="3" fill="#472777"/><rect x="255" y="613" width="54" height="3" fill="#fde725"/><rect x="309" y="613" width="3" height="3" fill="#57c565"/><rect x="312" y="613" width="3" height="3" fill="#22a386"/><rect x="315" y="613" width="3" height="3" fill="#24898d"/><rect x="318" y="613" width="3" height="3" fill="#2b768e"/><rect x="321" y="613" width="3" height="3" fill="#306a8d"/><rect x="324" y="613" width="3" height="3" fill="#355e8d"/><rect x="327" y="613" width="3" height="3" fill="#39568b"/><rect x="330" y="613" width="3" height="3" fill="#3b528a"/><rect x="333" y="613" width="3" height="3" fill="#3d4d89"/><rect x="336" y="613" width="3" height="3" fill="#3f4988"/><rect x="339" y="613" width="3" height="3" fill="#414587"/><rect x="342" y="613" width="3" height="3" fill="#424085"/><rect x="345" y="613" width="3" height="3" fill="#433b82"/><rect x="348" y="613" width="6" height="3" fill="#44367f"/><rect x="354" y="613" width="6" height="3" fill="#45317c"/><rect x="360" y="613" width="21" height="3" fill="#462c7a"/><rect x="381" y="613" width="24" height="3" fill="#472777"/><rect x="255" y="616" width="57" height="3" fill="#fde725"/><rect x="312" y="616" width="3" height="3" fill="#35b579"/><rect x="315" y="616" width="3" height="3" fill="#21958b"/><rect x="318" y="616" width="3" height="3" fill="#297a8e"/><rect x="321" y="616" width="3" height="3" fill="#306a8d"/><rect x="324" y="616" width="3" height="3" fill="#355e8d"/><rect x="327" y="616" width="3" height="3" fill="#39568b"/><rect x="330" y="616" width="3" height="3" fill="#3b528a"/><rect x="333" y="616" width="3" height="3" fill="#3f4988"/><rect x="336" y="616" width="3" height="3" fill="#414587"/><rect x="339" y="616" width="6" height="3" fill="#424085"/><rect x="345" y="616" width="3" height="3" fill="#433b82"/><rect x="348" y="616" width="6" height="3" fill="#44367f"/><rect x="354" y="616" width="6" height="3" fill="#45317c"/><rect x="360" y="616" width="21" height="3" fill="#462c7a"/><rect x="381" y="616" width="24" height="3" fill="#472777"/><rect x="255" y="619" width="57" height="3" fill="#fde725"/><rect x="312" y="619" width="3" height="3" fill="#57c565"/><rect x="315" y="619" width="3" height="3" fill="#22a386"/><rect x="318" y="619" width="3" height="3" fill="#24898d"/><rect x="321" y="619" width="3" height="3" fill="#32668d"/><rect x="324" y="619" width="3" height="3" fill="#375a8c"/><rect x="327" y="619" width="3" height="3" fill="#3b528a"/><rect x="330" y="619" width="3" height="3" fill="#3d4d89"/><rect x="333" y="619" width="3" height="3" fill="#3f4988"/><rect x="336" y="619" width="3" height="3" fill="#414587"/><rect x="339" y="619" width="3" height="3" fill="#424085"/><rect x="342" y="619" width="3" height="3" fill="#433b82"/><rect x="345" y="619" width="6" height="3" fill="#44367f"/><rect x="351" y="619" width="9" height="3" fill="#45317c"/><rect x="360" y="619" width="21" height="3" fill="#462c7a"/><rect x="381" y="619" width="24" height="3" fill="#472777"/><rect x="255" y="622" width="54" height="3" fill="#fde725"/><rect x="309" y="622" width="3" height="3" fill="#78d052"/><rect x="312" y="622" width="3" height="3" fill="#35b579"/><rect x="315" y="622" width="3" height="3" fill="#21958b"/><rect x="318" y="622" width="3" height="3" fill="#287d8e"/><rect x="321" y="622" width="3" height="3" fill="#355e8d"/><rect x="324" y="622" width="3" height="3" fill="#39568b"/><rect x="327" y="622" width="3" height="3" fill="#3b528a"/><rect x="330" y="622" width="3" height="3" fill="#3f4988"/><rect x="333" y="622" width="3" height="3" fill="#414587"/><rect x="336" y="622" width="3" height="3" fill="#424085"/><rect x="339" y="622" width="6" height="3" fill="#433b82"/><rect x="345" y="622" width="6" height="3" fill="#44367f"/><rect x="351" y="622" width="6" height="3" fill="#45317c"/><rect x="357" y="622" width="24" height="3" fill="#462c7a"/><rect x="381" y="622" width="24" height="3" fill="#472777"/><rect x="255" y="625" width="54" height="3" fill="#fde725"/><rect x="309" y="625" width="3" height="3" fill="#5fc860"/><rect x="312" y="625" width="3" height="3" fill="#22a386"/><rect x="315" y="625" width="3" height="3" fill="#24898d"/><rect x="318" y="625" width="3" height="3" fill="#2b768e"/><rect x="321" y="625" width="3" height="3" fill="#375a8c"/><rect x="324" y="625" width="3" height="3" fill="#3b528a"/><rect x="327" y="625" width="3" height="3" fill="#3d4d89"/><rect x="330" y="625" width="3" height="3" fill="#414587"/><rect x="333" y="625" width="6" height="3" fill="#424085"/><rect x="339" y="625" width="3" height="3" fill="#433b82"/><rect x="342" y="625" width="6" height="3" fill="#44367f"/><rect x="348" y="625" width="9" height="3" fill="#45317c"/><rect x="357" y="625" width="24" height="3" fill="#462c7a"/><rect x="381" y="625" width="24" height="3" fill="#472777"/><rect x="255" y="628" width="51" height="3" fill="#fde725"/><rect x="306" y="628" width="3" height="3" fill="#78d052"/><rect x="309" y="628" width="3" height="3" fill="#3ab976"/><rect x="312" y="628" width="3" height="3" fill="#21988a"/><rect x="315" y="628" width="3" height="3" fill="#287d8e"/><rect x="318" y="628" width="3" height="3" fill="#2e6e8e"/><rect x="321" y="628" width="3" height="3" fill="#39568b"/><rect x="324" y="628" width="3" height="3" fill="#3d4d89"/><rect x="327" y="628" width="3" height="3" fill="#3f4988"/><rect x="330" y="628" width="3" height="3" fill="#414587"/><rect x="333" y="628" width="3" height="3" fill="#424085"/><rect x="336" y="628" width="3" height="3" fill="#433b82"/><rect x="339" y="628" width="6" height="3" fill="#44367f"/><rect x="345" y="628" width="9" height="3" fill="#45317c"/><rect x="354" y="628" width="27" height="3" fill="#462c7a"/><rect x="381" y="628" width="24" height="3" fill="#472777"/><rect x="255" y="631" width="51" height="3" fill="#fde725"/><rect x="306" y="631" width="3" height="3" fill="#70ce57"/><rect x="309" y="631" width="3" height="3" fill="#25aa82"/><rect x="312" y="631" width="3" height="3" fill="#228d8c"/><rect x="315" y="631" width="3" height="3" fill="#2b768e"/><rect x="318" y="631" width="3" height="3" fill="#32668d"/><rect x="321" y="631" width="3" height="3" fill="#3b528a"/><rect x="324" y="631" width="3" height="3" fill="#3f4988"/><rect x="327" y="631" width="3" height="3" fill="#414587"/><rect x="330" y="631" width="3" height="3" fill="#424085"/><rect x="333" y="631" width="6" height="3" fill="#433b82"/><rect x="339" y="631" width="3" height="3" fill="#44367f"/><rect x="342" y="631" width="12" height="3" fill="#45317c"/><rect x="354" y="631" width="24" height="3" fill="#462c7a"/><rect x="378" y="631" width="27" height="3" fill="#472777"/><rect x="255" y="634" width="51" height="3" fill="#fde725"/><rect x="306" y="634" width="3" height="3" fill="#46c06f"/><rect x="309" y="634" width="3" height="3" fill="#219c88"/><rect x="312" y="634" width="3" height="3" fill="#27818d"/><rect x="315" y="634" width="3" height="3" fill="#2e6e8e"/><rect x="318" y="634" width="3" height="3" fill="#355e8d"/><rect x="321" y="634" width="3" height="3" fill="#3d4d89"/><rect x="324" y="634" width="3" height="3" fill="#414587"/><rect x="327" y="634" width="3" height="3" fill="#424085"/><rect x="330" y="634" width="6" height="3" fill="#433b82"/><rect x="336" y="634" width="6" height="3" fill="#44367f"/><rect x="342" y="634" width="9" height="3" fill="#45317c"/><rect x="351" y="634" width="27" height="3" fill="#462c7a"/><rect x="378" y="634" width="27" height="3" fill="#472777"/><rect x="255" y="637" width="3" height="3" fill="#78d052"/><rect x="258" y="637" width="42" height="3" fill="#fde725"/><rect x="300" y="637" width="3" height="3" fill="#78d052"/><rect x="303" y="637" width="3" height="3" fill="#57c565"/><rect x="306" y="637" width="3" height="3" fill="#2bae7f"/><rect x="309" y="637" width="3" height="3" fill="#228d8c"/><rect x="312" y="637" width="3" height="3" fill="#2b768e"/><rect x="315" y="637" width="3" height="3" fill="#32668d"/><rect x="318" y="637" width="3" height="3" fill="#375a8c"/><rect x="321" y="637" width="3" height="3" fill="#3f4988"/><rect x="324" y="637" width="3" height="3" fill="#414587"/><rect x="327" y="637" width="3" height="3" fill="#424085"/><rect x="330" y="637" width="3" height="3" fill="#433b82"/><rect x="333" y="637" width="6" height="3" fill="#44367f"/><rect x="339" y="637" width="9" height="3" fill="#45317c"/><rect x="348" y="637" width="30" height="3" fill="#462c7a"/><rect x="378" y="637" width="27" height="3" fill="#472777"/><rect x="255" y="640" width="3" height="3" fill="#30b17c"/><rect x="258" y="640" width="3" height="3" fill="#5fc860"/><rect x="261" y="640" width="3" height="3" fill="#78d052"/><rect x="264" y="640" width="33" height="3" fill="#fde725"/><rect x="297" y="640" width="3" height="3" fill="#70ce57"/><rect x="300" y="640" width="3" height="3" fill="#3ab976"/><rect x="303" y="640" width="3" height="3" fill="#22a386"/><rect x="306" y="640" width="3" height="3" fill="#21918c"/><rect x="309" y="640" width="3" height="3" fill="#27818d"/><rect x="312" y="640" width="3" height="3" fill="#2e6e8e"/><rect x="315" y="640" width="3" height="3" fill="#34628d"/><rect x="318" y="640" width="3" height="3" fill="#39568b"/><rect x="321" y="640" width="3" height="3" fill="#414587"/><rect x="324" y="640" width="3" height="3" fill="#424085"/><rect x="327" y="640" width="3" height="3" fill="#433b82"/><rect x="330" y="640" width="6" height="3" fill="#44367f"/><rect x="336" y="640" width="9" height="3" fill="#45317c"/><rect x="345" y="640" width="30" height="3" fill="#462c7a"/><rect x="375" y="640" width="30" height="3" fill="#472777"/><rect x="255" y="643" width="3" height="3" fill="#21958b"/><rect x="258" y="643" width="3" height="3" fill="#22a784"/><rect x="261" y="643" width="3" height="3" fill="#40bc72"/><rect x="264" y="643" width="6" height="3" fill="#78d052"/><rect x="270" y="643" width="21" height="3" fill="#fde725"/><rect x="291" y="643" width="3" height="3" fill="#78d052"/><rect x="294" y="643" width="3" height="3" fill="#4ec26a"/><rect x="297" y="643" width="3" height="3" fill="#25aa82"/><rect x="300" y="643" width="3" height="3" fill="#21988a"/><rect x="303" y="643" width="3" height="3" fill="#24898d"/><rect x="306" y="643" width="3" height="3" fill="#297a8e"/><rect x="309" y="643" width="3" height="3" fill="#2e6e8e"/><rect x="312" y="643" width="3" height="3" fill="#34628d"/><rect x="315" y="643" width="3" height="3" fill="#375a8c"/><rect x="318" y="643" width="3" height="3" fill="#3b528a"/><rect x="321" y="643" width="3" height="3" fill="#424085"/><rect x="324" y="643" width="6" height="3" fill="#433b82"/><rect x="330" y="643" width="6" height="3" fill="#44367f"/><rect x="336" y="643" width="9" height="3" fill="#45317c"/><rect x="345" y="643" width="30" height="3" fill="#462c7a"/><rect x="375" y="643" width="30" height="3" fill="#472777"/><rect x="255" y="646" width="3" height="3" fill="#27818d"/><rect x="258" y="646" width="3" height="3" fill="#228d8c"/><rect x="261" y="646" width="3" height="3" fill="#219c88"/><rect x="264" y="646" width="3" height="3" fill="#2bae7f"/><rect x="267" y="646" width="3" height="3" fill="#40bc72"/><rect x="270" y="646" width="3" height="3" fill="#67cb5c"/><rect x="273" y="646" width="3" height="3" fill="#78d052"/><rect x="276" y="646" width="9" height="3" fill="#fde725"/><rect x="285" y="646" width="3" height="3" fill="#78d052"/><rect x="288" y="646" width="3" height="3" fill="#57c565"/><rect x="291" y="646" width="3" height="3" fill="#35b579"/><rect x="294" y="646" width="3" height="3" fill="#229f87"/><rect x="297" y="646" width="3" height="3" fill="#228d8c"/><rect x="300" y="646" width="3" height="3" fill="#27818d"/><rect x="303" y="646" width="3" height="3" fill="#2d728e"/><rect x="306" y="646" width="3" height="3" fill="#306a8d"/><rect x="309" y="646" width="3" height="3" fill="#34628d"/><rect x="312" y="646" width="3" height="3" fill="#375a8c"/><rect x="315" y="646" width="3" height="3" fill="#3b528a"/><rect x="318" y="646" width="3" height="3" fill="#3f4988"/><rect x="321" y="646" width="3" height="3" fill="#424085"/><rect x="324" y="646" width="3" height="3" fill="#433b82"/><rect x="327" y="646" width="6" height="3" fill="#44367f"/><rect x="333" y="646" width="9" height="3" fill="#45317c"/><rect x="342" y="646" width="30" height="3" fill="#462c7a"/><rect x="372" y="646" width="33" height="3" fill="#472777"/><rect x="255" y="649" width="3" height="3" fill="#2e6e8e"/><rect x="258" y="649" width="3" height="3" fill="#297a8e"/><rect x="261" y="649" width="3" height="3" fill="#25858d"/><rect x="264" y="649" width="3" height="3" fill="#228d8c"/><rect x="267" y="649" width="3" height="3" fill="#21988a"/><rect x="270" y="649" width="3" height="3" fill="#22a784"/><rect x="273" y="649" width="3" height="3" fill="#30b17c"/><rect x="276" y="649" width="3" height="3" fill="#4ec26a"/><rect x="279" y="649" width="3" height="3" fill="#78d052"/><rect x="282" y="649" width="3" height="3" fill="#57c565"/><rect x="285" y="649" width="3" height="3" fill="#30b17c"/><rect x="288" y="649" width="3" height="3" fill="#22a386"/><rect x="291" y="649" width="3" height="3" fill="#21958b"/><rect x="294" y="649" width="3" height="3" fill="#25858d"/><rect x="297" y="649" width="3" height="3" fill="#297a8e"/><rect x="300" y="649" width="3" height="3" fill="#2e6e8e"/><rect x="303" y="649" width="3" height="3" fill="#34628d"/><rect x="306" y="649" width="3" height="3" fill="#355e8d"/><rect x="309" y="649" width="3" height="3" fill="#39568b"/><rect x="312" y="649" width="3" height="3" fill="#3b528a"/><rect x="315" y="649" width="3" height="3" fill="#3f4988"/><rect x="318" y="649" width="3" height="3" fill="#414587"/><rect x="321" y="649" width="3" height="3" fill="#433b82"/><rect x="324" y="649" width="6" height="3" fill="#44367f"/><rect x="330" y="649" width="9" height="3" fill="#45317c"/><rect x="339" y="649" width="33" height="3" fill="#462c7a"/><rect x="372" y="649" width="33" height="3" fill="#472777"/><rect x="255" y="652" width="3" height="3" fill="#34628d"/><rect x="258" y="652" width="3" height="3" fill="#306a8d"/><rect x="261" y="652" width="3" height="3" fill="#2d728e"/><rect x="264" y="652" width="3" height="3" fill="#297a8e"/><rect x="267" y="652" width="3" height="3" fill="#27818d"/><rect x="270" y="652" width="3" height="3" fill="#24898d"/><rect x="273" y="652" width="3" height="3" fill="#21958b"/><rect x="276" y="652" width="3" height="3" fill="#229f87"/><rect x="279" y="652" width="3" height="3" fill="#25aa82"/><rect x="282" y="652" width="3" height="3" fill="#22a386"/><rect x="285" y="652" width="3" height="3" fill="#21958b"/><rect x="288" y="652" width="3" height="3" fill="#25858d"/><rect x="291" y="652" width="3" height="3" fill="#297a8e"/><rect x="294" y="652" width="3" height="3" fill="#2d728e"/><rect x="297" y="652" width="3" height="3" fill="#32668d"/><rect x="300" y="652" width="3" height="3" fill="#355e8d"/><rect x="303" y="652" width="3" height="3" fill="#39568b"/><rect x="306" y="652" width="3" height="3" fill="#3b528a"/><rect x="309" y="652" width="3" height="3" fill="#3d4d89"/><rect x="312" y="652" width="3" height="3" fill="#3f4988"/><rect x="315" y="652" width="3" height="3" fill="#414587"/><rect x="318" y="652" width="3" height="3" fill="#424085"/><rect x="321" y="652" width="6" height="3" fill="#44367f"/><rect x="327" y="652" width="12" height="3" fill="#45317c"/><rect x="339" y="652" width="33" height="3" fill="#462c7a"/><rect x="372" y="652" width="33" height="3" fill="#472777"/><rect x="255" y="655" width="3" height="3" fill="#375a8c"/><rect x="258" y="655" width="3" height="3" fill="#355e8d"/><rect x="261" y="655" width="3" height="3" fill="#34628d"/><rect x="264" y="655" width="3" height="3" fill="#306a8d"/><rect x="267" y="655" width="3" height="3" fill="#2e6e8e"/><rect x="270" y="655" width="3" height="3" fill="#2b768e"/><rect x="273" y="655" width="3" height="3" fill="#297a8e"/><rect x="276" y="655" width="3" height="3" fill="#27818d"/><rect x="279" y="655" width="3" height="3" fill="#24898d"/><rect x="282" y="655" width="3" height="3" fill="#25858d"/><rect x="285" y="655" width="3" height="3" fill="#297a8e"/><rect x="288" y="655" width="3" height="3" fill="#2d728e"/><rect x="291" y="655" width="3" height="3" fill="#306a8d"/><rect x="294" y="655" width="3" height="3" fill="#34628d"/><rect x="297" y="655" width="3" height="3" fill="#375a8c"/><rect x="300" y="655" width="3" height="3" fill="#3b528a"/><rect x="303" y="655" width="3" height="3" fill="#3d4d89"/><rect x="306" y="655" width="3" height="3" fill="#3f4988"/><rect x="309" y="655" width="3" height="3" fill="#414587"/><rect x="312" y="655" width="3" height="3" fill="#424085"/><rect x="315" y="655" width="6" height="3" fill="#433b82"/><rect x="321" y="655" width="15" height="3" fill="#45317c"/><rect x="336" y="655" width="33" height="3" fill="#462c7a"/><rect x="369" y="655" width="36" height="3" fill="#472777"/><rect x="255" y="658" width="3" height="3" fill="#3b528a"/><rect x="258" y="658" width="3" height="3" fill="#39568b"/><rect x="261" y="658" width="3" height="3" fill="#375a8c"/><rect x="264" y="658" width="3" height="3" fill="#355e8d"/><rect x="267" y="658" width="3" height="3" fill="#34628d"/><rect x="270" y="658" width="3" height="3" fill="#32668d"/><rect x="273" y="658" width="3" height="3" fill="#306a8d"/><rect x="276" y="658" width="3" height="3" fill="#2e6e8e"/><rect x="279" y="658" width="6" height="3" fill="#2d728e"/><rect x="285" y="658" width="3" height="3" fill="#306a8d"/><rect x="288" y="658" width="3" height="3" fill="#34628d"/><rect x="291" y="658" width="3" height="3" fill="#375a8c"/><rect x="294" y="658" width="3" height="3" fill="#39568b"/><rect x="297" y="658" width="3" height="3" fill="#3d4d89"/><rect x="300" y="658" width="3" height="3" fill="#3f4988"/><rect x="303" y="658" width="3" height="3" fill="#414587"/><rect x="306" y="658" width="3" height="3" fill="#424085"/><rect x="309" y="658" width="3" height="3" fill="#433b82"/><rect x="312" y="658" width="9" height="3" fill="#44367f"/><rect x="321" y="658" width="9" height="3" fill="#45317c"/><rect x="330" y="658" width="39" height="3" fill="#462c7a"/><rect x="369" y="658" width="36" height="3" fill="#472777"/><rect x="255" y="661" width="6" height="3" fill="#3d4d89"/><rect x="261" y="661" width="3" height="3" fill="#3b528a"/><rect x="264" y="661" width="6" height="3" fill="#39568b"/><rect x="270" y="661" width="3" height="3" fill="#375a8c"/><rect x="273" y="661" width="3" height="3" fill="#355e8d"/><rect x="276" y="661" width="9" height="3" fill="#34628d"/><rect x="285" y="661" width="3" height="3" fill="#355e8d"/><rect x="288" y="661" width="3" height="3" fill="#39568b"/><rect x="291" y="661" width="3" height="3" fill="#3b528a"/><rect x="294" y="661" width="3" height="3" fill="#3f4988"/><rect x="297" y="661" width="3" height="3" fill="#414587"/><rect x="300" y="661" width="3" height="3" fill="#424085"/><rect x="303" y="661" width="3" height="3" fill="#433b82"/><rect x="306" y="661" width="6" height="3" fill="#44367f"/><rect x="312" y="661" width="9" height="3" fill="#45317c"/><rect x="321" y="661" width="45" height="3" fill="#462c7a"/><rect x="366" y="661" width="39" height="3" fill="#472777"/><rect x="255" y="664" width="6" height="3" fill="#3f4988"/><rect x="261" y="664" width="6" height="3" fill="#3d4d89"/><rect x="267" y="664" width="6" height="3" fill="#3b528a"/><rect x="273" y="664" width="12" height="3" fill="#39568b"/><rect x="285" y="664" width="3" height="3" fill="#3b528a"/><rect x="288" y="664" width="3" height="3" fill="#3d4d89"/><rect x="291" y="664" width="3" height="3" fill="#3f4988"/><rect x="294" y="664" width="3" height="3" fill="#424085"/><rect x="297" y="664" width="3" height="3" fill="#433b82"/><rect x="300" y="664" width="6" height="3" fill="#44367f"/><rect x="306" y="664" width="3" height="3" fill="#45317c"/><rect x="309" y="664" width="12" height="3" fill="#462c7a"/><rect x="321" y="664" width="6" height="3" fill="#472777"/><rect x="327" y="664" width="39" height="3" fill="#462c7a"/><rect x="366" y="664" width="39" height="3" fill="#472777"/><rect x="255" y="667" width="6" height="3" fill="#414587"/><rect x="261" y="667" width="9" height="3" fill="#3f4988"/><rect x="270" y="667" width="15" height="3" fill="#3d4d89"/><rect x="285" y="667" width="3" height="3" fill="#3f4988"/><rect x="288" y="667" width="3" height="3" fill="#414587"/><rect x="291" y="667" width="3" height="3" fill="#424085"/><rect x="294" y="667" width="3" height="3" fill="#433b82"/><rect x="297" y="667" width="3" height="3" fill="#44367f"/><rect x="300" y="667" width="3" height="3" fill="#45317c"/><rect x="303" y="667" width="6" height="3" fill="#462c7a"/><rect x="309" y="667" width="27" height="3" fill="#472777"/><rect x="336" y="667" width="27" height="3" fill="#462c7a"/><rect x="363" y="667" width="42" height="3" fill="#472777"/><rect x="255" y="670" width="6" height="3" fill="#424085"/><rect x="261" y="670" width="12" height="3" fill="#414587"/><rect x="273" y="670" width="9" height="3" fill="#3f4988"/><rect x="282" y="670" width="6" height="3" fill="#414587"/><rect x="288" y="670" width="3" height="3" fill="#424085"/><rect x="291" y="670" width="3" height="3" fill="#433b82"/><rect x="294" y="670" width="3" height="3" fill="#44367f"/><rect x="297" y="670" width="3" height="3" fill="#45317c"/><rect x="300" y="670" width="3" height="3" fill="#462c7a"/><rect x="303" y="670" width="3" height="3" fill="#472777"/><rect x="306" y="670" width="21" height="3" fill="#482273"/><rect x="327" y="670" width="15" height="3" fill="#472777"/><rect x="342" y="670" width="18" height="3" fill="#462c7a"/><rect x="360" y="670" width="45" height="3" fill="#472777"/><rect x="255" y="673" width="15" height="3" fill="#424085"/><rect x="270" y="673" width="9" height="3" fill="#414587"/><rect x="279" y="673" width="6" height="3" fill="#424085"/><rect x="285" y="673" width="6" height="3" fill="#433b82"/><rect x="291" y="673" width="3" height="3" fill="#44367f"/><rect x="294" y="673" width="3" height="3" fill="#45317c"/><rect x="297" y="673" width="3" height="3" fill="#462c7a"/><rect x="300" y="673" width="3" height="3" fill="#472777"/><rect x="303" y="673" width="6" height="3" fill="#482273"/><rect x="309" y="673" width="12" height="3" fill="#471c6e"/><rect x="321" y="673" width="9" height="3" fill="#482273"/><rect x="330" y="673" width="21" height="3" fill="#472777"/><rect x="351" y="673" width="6" height="3" fill="#462c7a"/><rect x="357" y="673" width="48" height="3" fill="#472777"/><rect x="255" y="676" width="6" height="3" fill="#433b82"/><rect x="261" y="676" width="21" height="3" fill="#424085"/><rect x="282" y="676" width="6" height="3" fill="#433b82"/><rect x="288" y="676" width="3" height="3" fill="#44367f"/><rect x="291" y="676" width="3" height="3" fill="#45317c"/><rect x="294" y="676" width="3" height="3" fill="#462c7a"/><rect x="297" y="676" width="3" height="3" fill="#472777"/><rect x="300" y="676" width="3" height="3" fill="#482273"/><rect x="303" y="676" width="21" height="3" fill="#471c6e"/><rect x="324" y="676" width="6" height="3" fill="#482273"/><rect x="330" y="676" width="75" height="3" fill="#472777"/><rect x="255" y="679" width="27" height="3" fill="#433b82"/><rect x="282" y="679" width="6" height="3" fill="#44367f"/><rect x="288" y="679" width="3" height="3" fill="#45317c"/><rect x="291" y="679" width="6" height="3" fill="#462c7a"/><rect x="297" y="679" width="3" height="3" fill="#472777"/><rect x="300" y="679" width="3" height="3" fill="#482273"/><rect x="303" y="679" width="6" height="3" fill="#471c6e"/><rect x="309" y="679" width="9" height="3" fill="#461769"/><rect x="318" y="679" width="6" height="3" fill="#471c6e"/><rect x="324" y="679" width="9" height="3" fill="#482273"/><rect x="333" y="679" width="72" height="3" fill="#472777"/>
</g>
<rect x="281.3" y="558.9" width="96" height="95.8" fill="none" stroke="#ff0000" stroke-width="1.2"/>
<path d="M329.3 569V599M329.3 614.8V644.5M292.3 606.5H321.8M337.3 606.5H367.3" stroke="#ff0000" stroke-width="1.3" fill="none"/>
<text class="s" x="329.3" y="547.3" font-size="10" text-anchor="middle" fill="#ff0000" stroke="#ff0000" stroke-width="0.12">N</text>
<text class="s" x="265.8" y="610.4" font-size="10" text-anchor="middle" fill="#ff0000" stroke="#ff0000" stroke-width="0.12">E</text>
</g>
<rect x="255.4" y="532.8" width="148.3" height="147.3" fill="none" stroke="#222" stroke-width="1.2"/>
<line x1="265.1" y1="680.1" x2="265.1" y2="683.6" stroke="#222" stroke-width="0.9"/>
<line x1="251.9" y1="670.5" x2="255.4" y2="670.5" stroke="#222" stroke-width="0.9"/>
<text class="s" x="262.5" y="695.6" font-size="10" text-anchor="middle" fill="#111" textLength="13.5" lengthAdjust="spacingAndGlyphs" stroke="#111" stroke-width="0.12">−4</text>
<text class="s" x="247.6" y="674.1" font-size="10" text-anchor="end" fill="#111" textLength="13.5" lengthAdjust="spacingAndGlyphs" stroke="#111" stroke-width="0.12">−4</text>
<line x1="297.2" y1="680.1" x2="297.2" y2="683.6" stroke="#222" stroke-width="0.9"/>
<line x1="251.9" y1="638.5" x2="255.4" y2="638.5" stroke="#222" stroke-width="0.9"/>
<text class="s" x="294.6" y="695.6" font-size="10" text-anchor="middle" fill="#111" textLength="13.5" lengthAdjust="spacingAndGlyphs" stroke="#111" stroke-width="0.12">−2</text>
<text class="s" x="247.6" y="642.1" font-size="10" text-anchor="end" fill="#111" textLength="13.5" lengthAdjust="spacingAndGlyphs" stroke="#111" stroke-width="0.12">−2</text>
<line x1="329.3" y1="680.1" x2="329.3" y2="683.6" stroke="#222" stroke-width="0.9"/>
<line x1="251.9" y1="606.5" x2="255.4" y2="606.5" stroke="#222" stroke-width="0.9"/>
<text class="s" x="329.3" y="695.6" font-size="10" text-anchor="middle" fill="#111" textLength="6.2" lengthAdjust="spacingAndGlyphs" stroke="#111" stroke-width="0.12">0</text>
<text class="s" x="247.6" y="610.1" font-size="10" text-anchor="end" fill="#111" textLength="6.2" lengthAdjust="spacingAndGlyphs" stroke="#111" stroke-width="0.12">0</text>
<line x1="361.4" y1="680.1" x2="361.4" y2="683.6" stroke="#222" stroke-width="0.9"/>
<line x1="251.9" y1="574.5" x2="255.4" y2="574.5" stroke="#222" stroke-width="0.9"/>
<text class="s" x="361.4" y="695.6" font-size="10" text-anchor="middle" fill="#111" textLength="6.2" lengthAdjust="spacingAndGlyphs" stroke="#111" stroke-width="0.12">2</text>
<text class="s" x="247.6" y="578.1" font-size="10" text-anchor="end" fill="#111" textLength="6.2" lengthAdjust="spacingAndGlyphs" stroke="#111" stroke-width="0.12">2</text>
<line x1="393.5" y1="680.1" x2="393.5" y2="683.6" stroke="#222" stroke-width="0.9"/>
<line x1="251.9" y1="542.5" x2="255.4" y2="542.5" stroke="#222" stroke-width="0.9"/>
<text class="s" x="393.5" y="695.6" font-size="10" text-anchor="middle" fill="#111" textLength="6.2" lengthAdjust="spacingAndGlyphs" stroke="#111" stroke-width="0.12">4</text>
<text class="s" x="247.6" y="546.1" font-size="10" text-anchor="end" fill="#111" textLength="6.2" lengthAdjust="spacingAndGlyphs" stroke="#111" stroke-width="0.12">4</text>
<text class="s" x="328.8" y="706.2" font-size="10" text-anchor="middle" fill="#111" textLength="100.5" lengthAdjust="spacingAndGlyphs" stroke="#111" stroke-width="0.12">s/b: 2.09 +/- 0.085</text>
<text class="s" x="514.4" y="525.3" font-size="12.7" text-anchor="middle" fill="#111" textLength="86.8" lengthAdjust="spacingAndGlyphs" stroke="#111" stroke-width="0.12">KPNO(24.7) g</text>
<g clip-path="url(#p3)"><rect x="440.3" y="532.6" width="147.9" height="147.1" fill="#fff"/>
<g shape-rendering="crispEdges">
<rect x="440" y="553.5" width="25.8" height="4.3" fill="#f0f0f0"/><rect x="440" y="557.8" width="30.1" height="4.3" fill="#e8e8e8"/><rect x="470.1" y="557.8" width="12.9" height="4.3" fill="#f0f0f0"/><rect x="440" y="562.1" width="8.6" height="4.3" fill="#c8c8c8"/><rect x="448.6" y="562.1" width="8.6" height="4.3" fill="#c0c0c0"/><rect x="457.2" y="562.1" width="8.6" height="4.3" fill="#c8c8c8"/><rect x="465.8" y="562.1" width="4.3" height="4.3" fill="#d0d0d0"/><rect x="470.1" y="562.1" width="4.3" height="4.3" fill="#d8d8d8"/><rect x="474.4" y="562.1" width="4.3" height="4.3" fill="#e0e0e0"/><rect x="478.7" y="562.1" width="4.3" height="4.3" fill="#e8e8e8"/><rect x="483" y="562.1" width="8.6" height="4.3" fill="#f0f0f0"/><rect x="440" y="566.4" width="4.3" height="4.3" fill="#909090"/><rect x="444.3" y="566.4" width="17.2" height="4.3" fill="#888888"/><rect x="461.5" y="566.4" width="4.3" height="4.3" fill="#909090"/><rect x="465.8" y="566.4" width="4.3" height="4.3" fill="#989898"/><rect x="470.1" y="566.4" width="4.3" height="4.3" fill="#a8a8a8"/><rect x="474.4" y="566.4" width="4.3" height="4.3" fill="#b8b8b8"/><rect x="478.7" y="566.4" width="4.3" height="4.3" fill="#d0d0d0"/><rect x="483" y="566.4" width="4.3" height="4.3" fill="#e0e0e0"/><rect x="487.3" y="566.4" width="4.3" height="4.3" fill="#e8e8e8"/><rect x="491.6" y="566.4" width="4.3" height="4.3" fill="#f0f0f0"/><rect x="440" y="570.7" width="4.3" height="4.3" fill="#383838"/><rect x="444.3" y="570.7" width="17.2" height="4.3" fill="#303030"/><rect x="461.5" y="570.7" width="4.3" height="4.3" fill="#383838"/><rect x="465.8" y="570.7" width="4.3" height="4.3" fill="#484848"/><rect x="470.1" y="570.7" width="4.3" height="4.3" fill="#606060"/><rect x="474.4" y="570.7" width="4.3" height="4.3" fill="#808080"/><rect x="478.7" y="570.7" width="4.3" height="4.3" fill="#a0a0a0"/><rect x="483" y="570.7" width="4.3" height="4.3" fill="#c0c0c0"/><rect x="487.3" y="570.7" width="4.3" height="4.3" fill="#d8d8d8"/><rect x="491.6" y="570.7" width="4.3" height="4.3" fill="#e8e8e8"/><rect x="495.9" y="570.7" width="4.3" height="4.3" fill="#f0f0f0"/><rect x="440" y="575" width="30.1" height="4.3" fill="#000000"/><rect x="470.1" y="575" width="4.3" height="4.3" fill="#181818"/><rect x="474.4" y="575" width="4.3" height="4.3" fill="#383838"/><rect x="478.7" y="575" width="4.3" height="4.3" fill="#606060"/><rect x="483" y="575" width="4.3" height="4.3" fill="#909090"/><rect x="487.3" y="575" width="4.3" height="4.3" fill="#b8b8b8"/><rect x="491.6" y="575" width="4.3" height="4.3" fill="#d8d8d8"/><rect x="495.9" y="575" width="4.3" height="4.3" fill="#e8e8e8"/><rect x="500.2" y="575" width="4.3" height="4.3" fill="#f0f0f0"/><rect x="440" y="579.3" width="38.7" height="4.3" fill="#000000"/><rect x="478.7" y="579.3" width="4.3" height="4.3" fill="#202020"/><rect x="483" y="579.3" width="4.3" height="4.3" fill="#585858"/><rect x="487.3" y="579.3" width="4.3" height="4.3" fill="#909090"/><rect x="491.6" y="579.3" width="4.3" height="4.3" fill="#c0c0c0"/><rect x="495.9" y="579.3" width="4.3" height="4.3" fill="#d8d8d8"/><rect x="500.2" y="579.3" width="4.3" height="4.3" fill="#f0f0f0"/><rect x="440" y="583.6" width="43" height="4.3" fill="#000000"/><rect x="483" y="583.6" width="4.3" height="4.3" fill="#202020"/><rect x="487.3" y="583.6" width="4.3" height="4.3" fill="#686868"/><rect x="491.6" y="583.6" width="4.3" height="4.3" fill="#a0a0a0"/><rect x="495.9" y="583.6" width="4.3" height="4.3" fill="#d0d0d0"/><rect x="500.2" y="583.6" width="4.3" height="4.3" fill="#e8e8e8"/><rect x="504.5" y="583.6" width="4.3" height="4.3" fill="#f0f0f0"/><rect x="440" y="587.9" width="47.3" height="4.3" fill="#000000"/><rect x="487.3" y="587.9" width="4.3" height="4.3" fill="#404040"/><rect x="491.6" y="587.9" width="4.3" height="4.3" fill="#888888"/><rect x="495.9" y="587.9" width="4.3" height="4.3" fill="#b8b8b8"/><rect x="500.2" y="587.9" width="4.3" height="4.3" fill="#e0e0e0"/><rect x="504.5" y="587.9" width="4.3" height="4.3" fill="#f0f0f0"/><rect x="440" y="592.2" width="47.3" height="4.3" fill="#000000"/><rect x="487.3" y="592.2" width="4.3" height="4.3" fill="#202020"/><rect x="491.6" y="592.2" width="4.3" height="4.3" fill="#686868"/><rect x="495.9" y="592.2" width="4.3" height="4.3" fill="#b0b0b0"/><rect x="500.2" y="592.2" width="4.3" height="4.3" fill="#d8d8d8"/><rect x="504.5" y="592.2" width="4.3" height="4.3" fill="#e8e8e8"/><rect x="440" y="596.5" width="47.3" height="4.3" fill="#000000"/><rect x="487.3" y="596.5" width="4.3" height="4.3" fill="#080808"/><rect x="491.6" y="596.5" width="4.3" height="4.3" fill="#585858"/><rect x="495.9" y="596.5" width="4.3" height="4.3" fill="#a0a0a0"/><rect x="500.2" y="596.5" width="4.3" height="4.3" fill="#d0d0d0"/><rect x="504.5" y="596.5" width="4.3" height="4.3" fill="#e8e8e8"/><rect x="440" y="600.8" width="51.6" height="4.3" fill="#000000"/><rect x="491.6" y="600.8" width="4.3" height="4.3" fill="#505050"/><rect x="495.9" y="600.8" width="4.3" height="4.3" fill="#989898"/><rect x="500.2" y="600.8" width="4.3" height="4.3" fill="#d0d0d0"/><rect x="504.5" y="600.8" width="4.3" height="4.3" fill="#e8e8e8"/><rect x="508.8" y="600.8" width="4.3" height="4.3" fill="#f0f0f0"/><rect x="440" y="605.1" width="51.6" height="4.3" fill="#000000"/><rect x="491.6" y="605.1" width="4.3" height="4.3" fill="#484848"/><rect x="495.9" y="605.1" width="4.3" height="4.3" fill="#989898"/><rect x="500.2" y="605.1" width="4.3" height="4.3" fill="#c8c8c8"/><rect x="504.5" y="605.1" width="4.3" height="4.3" fill="#e8e8e8"/><rect x="508.8" y="605.1" width="4.3" height="4.3" fill="#f0f0f0"/><rect x="440" y="609.4" width="51.6" height="4.3" fill="#000000"/><rect x="491.6" y="609.4" width="4.3" height="4.3" fill="#484848"/><rect x="495.9" y="609.4" width="4.3" height="4.3" fill="#989898"/><rect x="500.2" y="609.4" width="4.3" height="4.3" fill="#c8c8c8"/><rect x="504.5" y="609.4" width="4.3" height="4.3" fill="#e8e8e8"/><rect x="508.8" y="609.4" width="4.3" height="4.3" fill="#f0f0f0"/><rect x="440" y="613.7" width="51.6" height="4.3" fill="#000000"/><rect x="491.6" y="613.7" width="4.3" height="4.3" fill="#505050"/><rect x="495.9" y="613.7" width="4.3" height="4.3" fill="#989898"/><rect x="500.2" y="613.7" width="4.3" height="4.3" fill="#d0d0d0"/><rect x="504.5" y="613.7" width="4.3" height="4.3" fill="#e8e8e8"/><rect x="508.8" y="613.7" width="4.3" height="4.3" fill="#f0f0f0"/><rect x="440" y="618" width="47.3" height="4.3" fill="#000000"/><rect x="487.3" y="618" width="4.3" height="4.3" fill="#080808"/><rect x="491.6" y="618" width="4.3" height="4.3" fill="#585858"/><rect x="495.9" y="618" width="4.3" height="4.3" fill="#a0a0a0"/><rect x="500.2" y="618" width="4.3" height="4.3" fill="#d0d0d0"/><rect x="504.5" y="618" width="4.3" height="4.3" fill="#e8e8e8"/><rect x="440" y="622.3" width="47.3" height="4.3" fill="#000000"/><rect x="487.3" y="622.3" width="4.3" height="4.3" fill="#181818"/><rect x="491.6" y="622.3" width="4.3" height="4.3" fill="#686868"/><rect x="495.9" y="622.3" width="4.3" height="4.3" fill="#b0b0b0"/><rect x="500.2" y="622.3" width="4.3" height="4.3" fill="#d8d8d8"/><rect x="504.5" y="622.3" width="4.3" height="4.3" fill="#e8e8e8"/><rect x="440" y="626.6" width="47.3" height="4.3" fill="#000000"/><rect x="487.3" y="626.6" width="4.3" height="4.3" fill="#383838"/><rect x="491.6" y="626.6" width="4.3" height="4.3" fill="#808080"/><rect x="495.9" y="626.6" width="4.3" height="4.3" fill="#b8b8b8"/><rect x="500.2" y="626.6" width="4.3" height="4.3" fill="#e0e0e0"/><rect x="504.5" y="626.6" width="4.3" height="4.3" fill="#f0f0f0"/><rect x="440" y="630.9" width="43" height="4.3" fill="#000000"/><rect x="483" y="630.9" width="4.3" height="4.3" fill="#202020"/><rect x="487.3" y="630.9" width="4.3" height="4.3" fill="#606060"/><rect x="491.6" y="630.9" width="4.3" height="4.3" fill="#a0a0a0"/><rect x="495.9" y="630.9" width="4.3" height="4.3" fill="#c8c8c8"/><rect x="500.2" y="630.9" width="4.3" height="4.3" fill="#e8e8e8"/><rect x="504.5" y="630.9" width="4.3" height="4.3" fill="#f0f0f0"/><rect x="440" y="635.2" width="38.7" height="4.3" fill="#000000"/><rect x="478.7" y="635.2" width="4.3" height="4.3" fill="#202020"/><rect x="483" y="635.2" width="4.3" height="4.3" fill="#585858"/><rect x="487.3" y="635.2" width="4.3" height="4.3" fill="#909090"/><rect x="491.6" y="635.2" width="4.3" height="4.3" fill="#c0c0c0"/><rect x="495.9" y="635.2" width="4.3" height="4.3" fill="#d8d8d8"/><rect x="500.2" y="635.2" width="4.3" height="4.3" fill="#e8e8e8"/><rect x="440" y="639.5" width="30.1" height="4.3" fill="#000000"/><rect x="470.1" y="639.5" width="4.3" height="4.3" fill="#101010"/><rect x="474.4" y="639.5" width="4.3" height="4.3" fill="#303030"/><rect x="478.7" y="639.5" width="4.3" height="4.3" fill="#606060"/><rect x="483" y="639.5" width="4.3" height="4.3" fill="#909090"/><rect x="487.3" y="639.5" width="4.3" height="4.3" fill="#b8b8b8"/><rect x="491.6" y="639.5" width="4.3" height="4.3" fill="#d0d0d0"/><rect x="495.9" y="639.5" width="4.3" height="4.3" fill="#e8e8e8"/><rect x="500.2" y="639.5" width="4.3" height="4.3" fill="#f0f0f0"/><rect x="440" y="643.8" width="4.3" height="4.3" fill="#383838"/><rect x="444.3" y="643.8" width="4.3" height="4.3" fill="#303030"/><rect x="448.6" y="643.8" width="8.6" height="4.3" fill="#282828"/><rect x="457.2" y="643.8" width="4.3" height="4.3" fill="#303030"/><rect x="461.5" y="643.8" width="4.3" height="4.3" fill="#383838"/><rect x="465.8" y="643.8" width="4.3" height="4.3" fill="#484848"/><rect x="470.1" y="643.8" width="4.3" height="4.3" fill="#606060"/><rect x="474.4" y="643.8" width="4.3" height="4.3" fill="#808080"/><rect x="478.7" y="643.8" width="4.3" height="4.3" fill="#a0a0a0"/><rect x="483" y="643.8" width="4.3" height="4.3" fill="#c0c0c0"/><rect x="487.3" y="643.8" width="4.3" height="4.3" fill="#d8d8d8"/><rect x="491.6" y="643.8" width="4.3" height="4.3" fill="#e8e8e8"/><rect x="495.9" y="643.8" width="4.3" height="4.3" fill="#f0f0f0"/><rect x="440" y="648.1" width="8.6" height="4.3" fill="#888888"/><rect x="448.6" y="648.1" width="8.6" height="4.3" fill="#808080"/><rect x="457.2" y="648.1" width="8.6" height="4.3" fill="#888888"/><rect x="465.8" y="648.1" width="4.3" height="4.3" fill="#989898"/><rect x="470.1" y="648.1" width="4.3" height="4.3" fill="#a8a8a8"/><rect x="474.4" y="648.1" width="4.3" height="4.3" fill="#b8b8b8"/><rect x="478.7" y="648.1" width="4.3" height="4.3" fill="#c8c8c8"/><rect x="483" y="648.1" width="4.3" height="4.3" fill="#d8d8d8"/><rect x="487.3" y="648.1" width="4.3" height="4.3" fill="#e8e8e8"/><rect x="491.6" y="648.1" width="4.3" height="4.3" fill="#f0f0f0"/><rect x="440" y="652.4" width="4.3" height="4.3" fill="#c8c8c8"/><rect x="444.3" y="652.4" width="17.2" height="4.3" fill="#c0c0c0"/><rect x="461.5" y="652.4" width="4.3" height="4.3" fill="#c8c8c8"/><rect x="465.8" y="652.4" width="4.3" height="4.3" fill="#d0d0d0"/><rect x="470.1" y="652.4" width="4.3" height="4.3" fill="#d8d8d8"/><rect x="474.4" y="652.4" width="4.3" height="4.3" fill="#e0e0e0"/><rect x="478.7" y="652.4" width="4.3" height="4.3" fill="#e8e8e8"/><rect x="483" y="652.4" width="8.6" height="4.3" fill="#f0f0f0"/><rect x="440" y="656.7" width="8.6" height="4.3" fill="#e8e8e8"/><rect x="448.6" y="656.7" width="8.6" height="4.3" fill="#e0e0e0"/><rect x="457.2" y="656.7" width="17.2" height="4.3" fill="#e8e8e8"/><rect x="474.4" y="656.7" width="8.6" height="4.3" fill="#f0f0f0"/><rect x="440" y="661" width="25.8" height="4.3" fill="#f0f0f0"/>
</g>
<ellipse cx="468.5" cy="609.5" rx="30.5" ry="44.9" fill="none" stroke="#f0c419" stroke-width="1.3"/>
<rect x="466.1" y="558.4" width="96.5" height="96" fill="none" stroke="#ff0000" stroke-width="1.2"/>
<path d="M514.4 568.7V598.7M514.4 614.5V644.2M477.4 606.2H506.9M522.4 606.2H552.4" stroke="#ff0000" stroke-width="1.3" fill="none"/>
<text class="s" x="514.4" y="547" font-size="10" text-anchor="middle" fill="#ff0000" stroke="#ff0000" stroke-width="0.12">N</text>
<text class="s" x="451.8" y="610.3" font-size="10" text-anchor="middle" fill="#ff0000" stroke="#ff0000" stroke-width="0.12">E</text>
</g>
<rect x="440.3" y="532.6" width="147.9" height="147.1" fill="none" stroke="#222" stroke-width="1.2"/>
<line x1="450.2" y1="679.7" x2="450.2" y2="683.2" stroke="#222" stroke-width="0.9"/>
<line x1="436.8" y1="670.2" x2="440.3" y2="670.2" stroke="#222" stroke-width="0.9"/>
<text class="s" x="447.6" y="695.2" font-size="10" text-anchor="middle" fill="#111" textLength="13.5" lengthAdjust="spacingAndGlyphs" stroke="#111" stroke-width="0.12">−4</text>
<text class="s" x="433.1" y="673.8" font-size="10" text-anchor="end" fill="#111" textLength="13.5" lengthAdjust="spacingAndGlyphs" stroke="#111" stroke-width="0.12">−4</text>
<line x1="482.3" y1="679.7" x2="482.3" y2="683.2" stroke="#222" stroke-width="0.9"/>
<line x1="436.8" y1="638.2" x2="440.3" y2="638.2" stroke="#222" stroke-width="0.9"/>
<text class="s" x="479.7" y="695.2" font-size="10" text-anchor="middle" fill="#111" textLength="13.5" lengthAdjust="spacingAndGlyphs" stroke="#111" stroke-width="0.12">−2</text>
<text class="s" x="433.1" y="641.8" font-size="10" text-anchor="end" fill="#111" textLength="13.5" lengthAdjust="spacingAndGlyphs" stroke="#111" stroke-width="0.12">−2</text>
<line x1="514.4" y1="679.7" x2="514.4" y2="683.2" stroke="#222" stroke-width="0.9"/>
<line x1="436.8" y1="606.2" x2="440.3" y2="606.2" stroke="#222" stroke-width="0.9"/>
<text class="s" x="514.4" y="695.2" font-size="10" text-anchor="middle" fill="#111" textLength="6.2" lengthAdjust="spacingAndGlyphs" stroke="#111" stroke-width="0.12">0</text>
<text class="s" x="433.1" y="609.8" font-size="10" text-anchor="end" fill="#111" textLength="6.2" lengthAdjust="spacingAndGlyphs" stroke="#111" stroke-width="0.12">0</text>
<line x1="546.5" y1="679.7" x2="546.5" y2="683.2" stroke="#222" stroke-width="0.9"/>
<line x1="436.8" y1="574.2" x2="440.3" y2="574.2" stroke="#222" stroke-width="0.9"/>
<text class="s" x="546.5" y="695.2" font-size="10" text-anchor="middle" fill="#111" textLength="6.2" lengthAdjust="spacingAndGlyphs" stroke="#111" stroke-width="0.12">2</text>
<text class="s" x="433.1" y="577.8" font-size="10" text-anchor="end" fill="#111" textLength="6.2" lengthAdjust="spacingAndGlyphs" stroke="#111" stroke-width="0.12">2</text>
<line x1="578.6" y1="679.7" x2="578.6" y2="683.2" stroke="#222" stroke-width="0.9"/>
<line x1="436.8" y1="542.2" x2="440.3" y2="542.2" stroke="#222" stroke-width="0.9"/>
<text class="s" x="578.6" y="695.2" font-size="10" text-anchor="middle" fill="#111" textLength="6.2" lengthAdjust="spacingAndGlyphs" stroke="#111" stroke-width="0.12">4</text>
<text class="s" x="433.1" y="545.8" font-size="10" text-anchor="end" fill="#111" textLength="6.2" lengthAdjust="spacingAndGlyphs" stroke="#111" stroke-width="0.12">4</text>
<text class="s" x="514.5" y="707.5" font-size="10" text-anchor="middle" fill="#111" textLength="119.4" lengthAdjust="spacingAndGlyphs" stroke="#111" stroke-width="0.12" xml:space="preserve">m:15.2  re:2.5"  s:3.2"</text>
<text class="s" x="515.8" y="718.3" font-size="10" text-anchor="middle" fill="#111" textLength="106.1" lengthAdjust="spacingAndGlyphs" stroke="#111" stroke-width="0.12">EWr: 0, PLAE: 0.058</text>
<text class="m" x="70.2" y="887.8" font-size="13.6" textLength="241.5" lengthAdjust="spacingAndGlyphs" stroke="#000" stroke-width="0.08">No matching targets in catalog.</text>
<text class="m" x="70.2" y="902.6" font-size="13.6" textLength="187" lengthAdjust="spacingAndGlyphs" stroke="#000" stroke-width="0.08">Row intentionally blank.</text>
</svg></body></html>
